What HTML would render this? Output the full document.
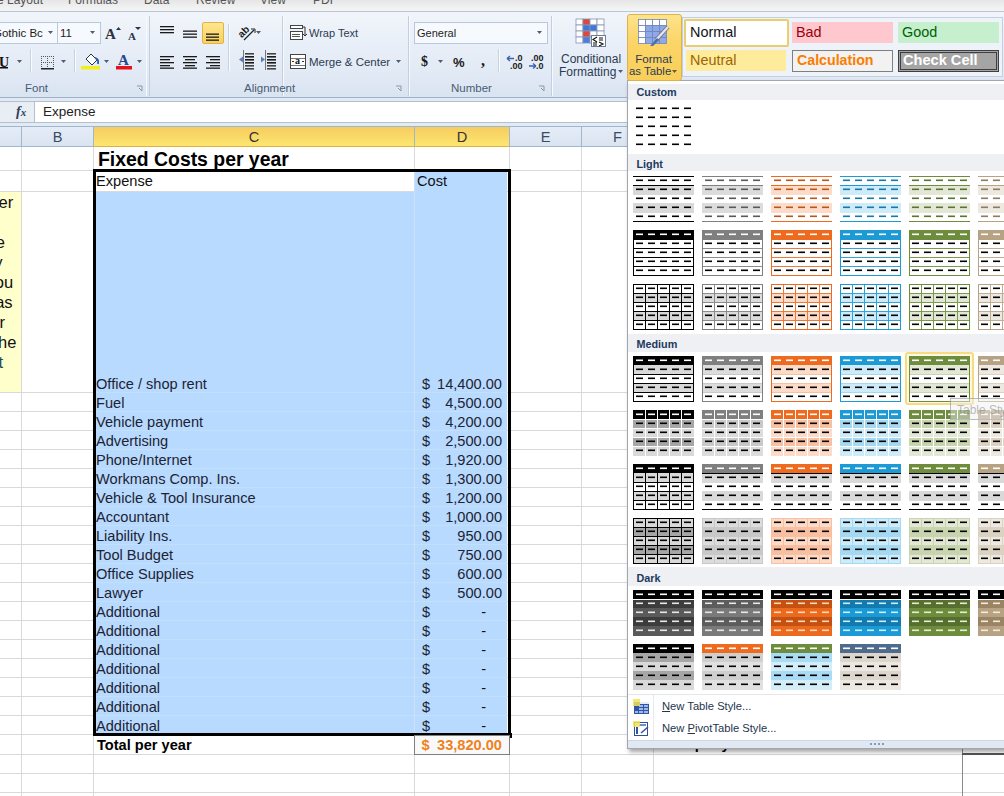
<!DOCTYPE html><html><head><meta charset="utf-8"><style>
*{box-sizing:border-box}
body{margin:0;width:1004px;height:796px;overflow:hidden;position:relative;background:#fff;font-family:"Liberation Sans", sans-serif;}
.a{position:absolute}
.t{position:absolute;white-space:nowrap;line-height:1}
</style></head><body>
<div class="a" style="left:0;top:0;width:1004px;height:12px;background:linear-gradient(#e6e6e6,#f7f7f7)"></div>
<div class="t" style="left:-3px;top:-6px;font-size:12px;color:#555">e Layout</div>
<div class="t" style="left:68px;top:-6px;font-size:12px;color:#555">Formulas</div>
<div class="t" style="left:144px;top:-6px;font-size:12px;color:#555">Data</div>
<div class="t" style="left:196px;top:-6px;font-size:12px;color:#555">Review</div>
<div class="t" style="left:260px;top:-6px;font-size:12px;color:#555">View</div>
<div class="t" style="left:313px;top:-6px;font-size:12px;color:#555">PDF</div>
<div class="a" style="left:0;top:11px;width:1004px;height:1px;background:#b9c6d6"></div>
<div class="a" style="left:0;top:12px;width:1004px;height:85px;background:linear-gradient(#f1f5fb,#e2eaf5 70%,#d9e4f1)"></div>
<div class="a" style="left:0;top:97px;width:1004px;height:1px;background:#9fb2c8"></div>
<div class="a" style="left:0;top:98px;width:1004px;height:3px;background:#e2e9f2"></div>
<div class="a" style="left:0;top:101px;width:1004px;height:1px;background:#b3c0d0"></div>
<div class="a" style="left:0;top:102px;width:35px;height:20px;background:#e9eef5"></div>
<div class="a" style="left:34px;top:102px;width:1px;height:20px;background:#b3c0d0"></div>
<div class="a" style="left:35px;top:102px;width:969px;height:20px;background:#fff"></div>
<div class="t" style="left:16px;top:105px;font-family:'Liberation Serif';font-style:italic;font-weight:bold;font-size:14px;color:#2c3e5a">f<span style="font-size:11px">x</span></div>
<div class="t" style="left:43px;top:105px;font-size:13.5px;color:#222">Expense</div>
<div class="a" style="left:0;top:122px;width:1004px;height:1px;background:#b3c0d0"></div>
<div class="a" style="left:0;top:123px;width:1004px;height:3px;background:#e4eaf2"></div>
<div class="a" style="left:146px;top:16px;width:1px;height:80px;background:#f7f9fc"></div>
<div class="a" style="left:149px;top:16px;width:1px;height:80px;background:#c3cfde"></div>
<div class="a" style="left:283px;top:16px;width:1px;height:80px;background:#f7f9fc"></div>
<div class="a" style="left:282px;top:16px;width:1px;height:80px;background:#c3cfde"></div>
<div class="a" style="left:409px;top:16px;width:1px;height:80px;background:#f7f9fc"></div>
<div class="a" style="left:408px;top:16px;width:1px;height:80px;background:#c3cfde"></div>
<div class="a" style="left:552px;top:16px;width:1px;height:80px;background:#f7f9fc"></div>
<div class="a" style="left:551px;top:16px;width:1px;height:80px;background:#c3cfde"></div>
<div class="t" style="left:25px;top:83px;font-size:11.5px;color:#4a5b75">Font</div>
<div class="t" style="left:244px;top:83px;font-size:11.5px;color:#4a5b75">Alignment</div>
<div class="t" style="left:451px;top:83px;font-size:11.5px;color:#4a5b75">Number</div>
<div class="a" style="left:0;top:126px;width:1004px;height:1px;background:#9eb6ce"></div>
<div class="a" style="left:0;top:127px;width:1004px;height:19px;background:linear-gradient(#e4ecf7,#dae4f0)"></div>
<div class="a" style="left:93px;top:127px;width:416px;height:19px;background:linear-gradient(#f6cc60,#fde670)"></div>
<div class="a" style="left:0;top:146px;width:1004px;height:1px;background:#9eb6ce"></div>
<div class="a" style="left:93px;top:146px;width:416px;height:1px;background:#e0b040"></div>
<div class="a" style="left:21px;top:127px;width:1px;height:19px;background:#9eb6ce"></div>
<div class="a" style="left:93px;top:127px;width:1px;height:19px;background:#9eb6ce"></div>
<div class="a" style="left:414px;top:127px;width:1px;height:19px;background:#9eb6ce"></div>
<div class="a" style="left:509px;top:127px;width:1px;height:19px;background:#9eb6ce"></div>
<div class="a" style="left:581px;top:127px;width:1px;height:19px;background:#9eb6ce"></div>
<div class="a" style="left:653px;top:127px;width:1px;height:19px;background:#9eb6ce"></div>
<div class="t" style="left:37.5px;width:40px;text-align:center;top:129.5px;font-size:14.6px;color:#3a4a66">B</div>
<div class="t" style="left:234px;width:40px;text-align:center;top:129.5px;font-size:14.6px;color:#333">C</div>
<div class="t" style="left:442px;width:40px;text-align:center;top:129.5px;font-size:14.6px;color:#333">D</div>
<div class="t" style="left:525.5px;width:40px;text-align:center;top:129.5px;font-size:14.6px;color:#3a4a66">E</div>
<div class="t" style="left:597.5px;width:40px;text-align:center;top:129.5px;font-size:14.6px;color:#3a4a66">F</div>
<div class="a" style="left:0;top:170px;width:1004px;height:1px;background:#d9d9d9"></div>
<div class="a" style="left:0;top:191px;width:1004px;height:1px;background:#d9d9d9"></div>
<div class="a" style="left:0;top:392px;width:1004px;height:1px;background:#d9d9d9"></div>
<div class="a" style="left:0;top:411px;width:1004px;height:1px;background:#d9d9d9"></div>
<div class="a" style="left:0;top:430px;width:1004px;height:1px;background:#d9d9d9"></div>
<div class="a" style="left:0;top:449px;width:1004px;height:1px;background:#d9d9d9"></div>
<div class="a" style="left:0;top:468px;width:1004px;height:1px;background:#d9d9d9"></div>
<div class="a" style="left:0;top:487px;width:1004px;height:1px;background:#d9d9d9"></div>
<div class="a" style="left:0;top:506px;width:1004px;height:1px;background:#d9d9d9"></div>
<div class="a" style="left:0;top:525px;width:1004px;height:1px;background:#d9d9d9"></div>
<div class="a" style="left:0;top:544px;width:1004px;height:1px;background:#d9d9d9"></div>
<div class="a" style="left:0;top:563px;width:1004px;height:1px;background:#d9d9d9"></div>
<div class="a" style="left:0;top:582px;width:1004px;height:1px;background:#d9d9d9"></div>
<div class="a" style="left:0;top:601px;width:1004px;height:1px;background:#d9d9d9"></div>
<div class="a" style="left:0;top:620px;width:1004px;height:1px;background:#d9d9d9"></div>
<div class="a" style="left:0;top:639px;width:1004px;height:1px;background:#d9d9d9"></div>
<div class="a" style="left:0;top:658px;width:1004px;height:1px;background:#d9d9d9"></div>
<div class="a" style="left:0;top:677px;width:1004px;height:1px;background:#d9d9d9"></div>
<div class="a" style="left:0;top:696px;width:1004px;height:1px;background:#d9d9d9"></div>
<div class="a" style="left:0;top:715px;width:1004px;height:1px;background:#d9d9d9"></div>
<div class="a" style="left:0;top:734px;width:1004px;height:1px;background:#d9d9d9"></div>
<div class="a" style="left:0;top:754px;width:1004px;height:1px;background:#d9d9d9"></div>
<div class="a" style="left:0;top:773px;width:1004px;height:1px;background:#d9d9d9"></div>
<div class="a" style="left:0;top:792px;width:1004px;height:1px;background:#d9d9d9"></div>
<div class="a" style="left:21px;top:147px;width:1px;height:650px;background:#d9d9d9"></div>
<div class="a" style="left:93px;top:147px;width:1px;height:650px;background:#d9d9d9"></div>
<div class="a" style="left:414px;top:147px;width:1px;height:650px;background:#d9d9d9"></div>
<div class="a" style="left:509px;top:147px;width:1px;height:650px;background:#d9d9d9"></div>
<div class="a" style="left:581px;top:147px;width:1px;height:650px;background:#d9d9d9"></div>
<div class="a" style="left:653px;top:147px;width:1px;height:650px;background:#d9d9d9"></div>
<div class="a" style="left:962px;top:147px;width:1px;height:650px;background:#d9d9d9"></div>
<div class="a" style="left:0;top:192px;width:21px;height:200px;background:#ffffcc"></div>
<div class="t" style="right:990.8px;top:193.6px;font-size:16.5px;color:#111">er</div>
<div class="t" style="right:999px;top:233.6px;font-size:16.5px;color:#111">e</div>
<div class="t" style="right:1001.5px;top:253.60000000000002px;font-size:16.5px;color:#111">y</div>
<div class="t" style="right:990.8px;top:273.6px;font-size:16.5px;color:#111">ou</div>
<div class="t" style="right:991.4px;top:293.6px;font-size:16.5px;color:#111">as</div>
<div class="t" style="right:999px;top:313.6px;font-size:16.5px;color:#111">r</div>
<div class="t" style="right:987.7px;top:333.6px;font-size:16.5px;color:#111">he</div>
<div class="t" style="right:1001px;top:353.6px;font-size:16.5px;color:#1d4a4a">t</div>
<div class="a" style="left:95px;top:192px;width:412px;height:541px;background:#b9daff"></div>
<div class="a" style="left:415px;top:172px;width:92px;height:20px;background:#b9daff"></div>
<div class="a" style="left:95px;top:392px;width:412px;height:1px;background:#c4dffc"></div>
<div class="a" style="left:95px;top:411px;width:412px;height:1px;background:#c4dffc"></div>
<div class="a" style="left:95px;top:430px;width:412px;height:1px;background:#c4dffc"></div>
<div class="a" style="left:95px;top:449px;width:412px;height:1px;background:#c4dffc"></div>
<div class="a" style="left:95px;top:468px;width:412px;height:1px;background:#c4dffc"></div>
<div class="a" style="left:95px;top:487px;width:412px;height:1px;background:#c4dffc"></div>
<div class="a" style="left:95px;top:506px;width:412px;height:1px;background:#c4dffc"></div>
<div class="a" style="left:95px;top:525px;width:412px;height:1px;background:#c4dffc"></div>
<div class="a" style="left:95px;top:544px;width:412px;height:1px;background:#c4dffc"></div>
<div class="a" style="left:95px;top:563px;width:412px;height:1px;background:#c4dffc"></div>
<div class="a" style="left:95px;top:582px;width:412px;height:1px;background:#c4dffc"></div>
<div class="a" style="left:95px;top:601px;width:412px;height:1px;background:#c4dffc"></div>
<div class="a" style="left:95px;top:620px;width:412px;height:1px;background:#c4dffc"></div>
<div class="a" style="left:95px;top:639px;width:412px;height:1px;background:#c4dffc"></div>
<div class="a" style="left:95px;top:658px;width:412px;height:1px;background:#c4dffc"></div>
<div class="a" style="left:95px;top:677px;width:412px;height:1px;background:#c4dffc"></div>
<div class="a" style="left:95px;top:696px;width:412px;height:1px;background:#c4dffc"></div>
<div class="a" style="left:95px;top:715px;width:412px;height:1px;background:#c4dffc"></div>
<div class="a" style="left:414px;top:171px;width:1px;height:562px;background:#cbe2f9"></div>
<div class="a" style="left:93px;top:169px;width:418px;height:567px;border:3px solid #000"></div>
<div class="a" style="left:507px;top:733px;width:5px;height:5px;background:#000"></div>
<div class="t" style="left:98px;top:149.5px;font-size:19.4px;font-weight:bold;color:#000">Fixed Costs per year</div>
<div class="t" style="left:96px;top:174px;font-size:14.6px;color:#111">Expense</div>
<div class="t" style="left:417px;top:174px;font-size:14.6px;color:#111">Cost</div>
<div class="t" style="left:96px;top:377px;font-size:14.6px;color:#1c2333">Office / shop rent</div>
<div class="t" style="left:422px;top:377px;font-size:14.6px;color:#1c2333">$</div>
<div class="t" style="right:502px;top:377px;font-size:14.6px;color:#1c2333">14,400.00</div>
<div class="t" style="left:96px;top:396px;font-size:14.6px;color:#1c2333">Fuel</div>
<div class="t" style="left:422px;top:396px;font-size:14.6px;color:#1c2333">$</div>
<div class="t" style="right:502px;top:396px;font-size:14.6px;color:#1c2333">4,500.00</div>
<div class="t" style="left:96px;top:415px;font-size:14.6px;color:#1c2333">Vehicle payment</div>
<div class="t" style="left:422px;top:415px;font-size:14.6px;color:#1c2333">$</div>
<div class="t" style="right:502px;top:415px;font-size:14.6px;color:#1c2333">4,200.00</div>
<div class="t" style="left:96px;top:434px;font-size:14.6px;color:#1c2333">Advertising</div>
<div class="t" style="left:422px;top:434px;font-size:14.6px;color:#1c2333">$</div>
<div class="t" style="right:502px;top:434px;font-size:14.6px;color:#1c2333">2,500.00</div>
<div class="t" style="left:96px;top:453px;font-size:14.6px;color:#1c2333">Phone/Internet</div>
<div class="t" style="left:422px;top:453px;font-size:14.6px;color:#1c2333">$</div>
<div class="t" style="right:502px;top:453px;font-size:14.6px;color:#1c2333">1,920.00</div>
<div class="t" style="left:96px;top:472px;font-size:14.6px;color:#1c2333">Workmans Comp. Ins.</div>
<div class="t" style="left:422px;top:472px;font-size:14.6px;color:#1c2333">$</div>
<div class="t" style="right:502px;top:472px;font-size:14.6px;color:#1c2333">1,300.00</div>
<div class="t" style="left:96px;top:491px;font-size:14.6px;color:#1c2333">Vehicle &amp; Tool Insurance</div>
<div class="t" style="left:422px;top:491px;font-size:14.6px;color:#1c2333">$</div>
<div class="t" style="right:502px;top:491px;font-size:14.6px;color:#1c2333">1,200.00</div>
<div class="t" style="left:96px;top:510px;font-size:14.6px;color:#1c2333">Accountant</div>
<div class="t" style="left:422px;top:510px;font-size:14.6px;color:#1c2333">$</div>
<div class="t" style="right:502px;top:510px;font-size:14.6px;color:#1c2333">1,000.00</div>
<div class="t" style="left:96px;top:529px;font-size:14.6px;color:#1c2333">Liability Ins.</div>
<div class="t" style="left:422px;top:529px;font-size:14.6px;color:#1c2333">$</div>
<div class="t" style="right:502px;top:529px;font-size:14.6px;color:#1c2333">950.00</div>
<div class="t" style="left:96px;top:548px;font-size:14.6px;color:#1c2333">Tool Budget</div>
<div class="t" style="left:422px;top:548px;font-size:14.6px;color:#1c2333">$</div>
<div class="t" style="right:502px;top:548px;font-size:14.6px;color:#1c2333">750.00</div>
<div class="t" style="left:96px;top:567px;font-size:14.6px;color:#1c2333">Office Supplies</div>
<div class="t" style="left:422px;top:567px;font-size:14.6px;color:#1c2333">$</div>
<div class="t" style="right:502px;top:567px;font-size:14.6px;color:#1c2333">600.00</div>
<div class="t" style="left:96px;top:586px;font-size:14.6px;color:#1c2333">Lawyer</div>
<div class="t" style="left:422px;top:586px;font-size:14.6px;color:#1c2333">$</div>
<div class="t" style="right:502px;top:586px;font-size:14.6px;color:#1c2333">500.00</div>
<div class="t" style="left:96px;top:605px;font-size:14.6px;color:#1c2333">Additional</div>
<div class="t" style="left:422px;top:605px;font-size:14.6px;color:#1c2333">$</div>
<div class="t" style="right:518px;top:605px;font-size:14.6px;color:#111">-</div>
<div class="t" style="left:96px;top:624px;font-size:14.6px;color:#1c2333">Additional</div>
<div class="t" style="left:422px;top:624px;font-size:14.6px;color:#1c2333">$</div>
<div class="t" style="right:518px;top:624px;font-size:14.6px;color:#111">-</div>
<div class="t" style="left:96px;top:643px;font-size:14.6px;color:#1c2333">Additional</div>
<div class="t" style="left:422px;top:643px;font-size:14.6px;color:#1c2333">$</div>
<div class="t" style="right:518px;top:643px;font-size:14.6px;color:#111">-</div>
<div class="t" style="left:96px;top:662px;font-size:14.6px;color:#1c2333">Additional</div>
<div class="t" style="left:422px;top:662px;font-size:14.6px;color:#1c2333">$</div>
<div class="t" style="right:518px;top:662px;font-size:14.6px;color:#111">-</div>
<div class="t" style="left:96px;top:681px;font-size:14.6px;color:#1c2333">Additional</div>
<div class="t" style="left:422px;top:681px;font-size:14.6px;color:#1c2333">$</div>
<div class="t" style="right:518px;top:681px;font-size:14.6px;color:#111">-</div>
<div class="t" style="left:96px;top:700px;font-size:14.6px;color:#1c2333">Additional</div>
<div class="t" style="left:422px;top:700px;font-size:14.6px;color:#1c2333">$</div>
<div class="t" style="right:518px;top:700px;font-size:14.6px;color:#111">-</div>
<div class="t" style="left:96px;top:719px;font-size:14.6px;color:#1c2333">Additional</div>
<div class="t" style="left:422px;top:719px;font-size:14.6px;color:#1c2333">$</div>
<div class="t" style="right:518px;top:719px;font-size:14.6px;color:#111">-</div>
<div class="a" style="left:414px;top:735px;width:96px;height:20px;border:1px solid #7f7f7f;background:#f9f9f9"></div>
<div class="t" style="left:97px;top:737.5px;font-size:14.6px;font-weight:bold;color:#000">Total per year</div>
<div class="t" style="left:421.5px;top:737.5px;font-size:14.6px;font-weight:bold;color:#ee8222">$</div>
<div class="t" style="right:502px;top:737.5px;font-size:14.6px;font-weight:bold;color:#ee8222">33,820.00</div>
<div class="t" style="left:657px;top:737px;font-size:14.6px;font-weight:bold;color:#000">Total per year</div>
<div class="a" style="left:962px;top:147px;width:1px;height:650px;background:#8a8a8a"></div>
<div class="a" style="left:962px;top:753px;width:42px;height:2px;background:#555"></div>
<div class="a" style="left:627px;top:80px;width:380px;height:669px;background:#fff;border:1px solid #a3a7ad;box-shadow:2px 3px 4px rgba(0,0,0,0.35)"></div>
<div class="a" style="left:628px;top:84px;width:376px;height:16px;background:#eef0f4"></div>
<div class="t" style="left:636.5px;top:86.8px;font-size:10.8px;font-weight:bold;color:#213a5e">Custom</div>
<div class="a" style="left:628px;top:154px;width:376px;height:17px;background:#eef0f4"></div>
<div class="t" style="left:636.5px;top:158.7px;font-size:10.8px;font-weight:bold;color:#213a5e">Light</div>
<div class="a" style="left:628px;top:334px;width:376px;height:18px;background:#eef0f4"></div>
<div class="t" style="left:636.5px;top:338.5px;font-size:10.8px;font-weight:bold;color:#213a5e">Medium</div>
<div class="a" style="left:628px;top:567px;width:376px;height:19px;background:#eef0f4"></div>
<div class="t" style="left:636.5px;top:573px;font-size:10.8px;font-weight:bold;color:#213a5e">Dark</div>
<div class="a" style="left:905px;top:352px;width:69px;height:53px;border:2px solid #f5dc80;border-radius:3px;background:#fef8e0"></div>
<svg class="a" style="left:0;top:0" width="1004" height="796" shape-rendering="crispEdges"><rect x="636" y="107.5" width="7" height="1.6" fill="#000" shape-rendering="auto"/><rect x="648" y="107.5" width="7" height="1.6" fill="#000" shape-rendering="auto"/><rect x="660" y="107.5" width="7" height="1.6" fill="#000" shape-rendering="auto"/><rect x="672" y="107.5" width="7" height="1.6" fill="#000" shape-rendering="auto"/><rect x="684" y="107.5" width="7" height="1.6" fill="#000" shape-rendering="auto"/><rect x="636" y="116.5" width="7" height="1.6" fill="#000" shape-rendering="auto"/><rect x="648" y="116.5" width="7" height="1.6" fill="#000" shape-rendering="auto"/><rect x="660" y="116.5" width="7" height="1.6" fill="#000" shape-rendering="auto"/><rect x="672" y="116.5" width="7" height="1.6" fill="#000" shape-rendering="auto"/><rect x="684" y="116.5" width="7" height="1.6" fill="#000" shape-rendering="auto"/><rect x="636" y="125.5" width="7" height="1.6" fill="#000" shape-rendering="auto"/><rect x="648" y="125.5" width="7" height="1.6" fill="#000" shape-rendering="auto"/><rect x="660" y="125.5" width="7" height="1.6" fill="#000" shape-rendering="auto"/><rect x="672" y="125.5" width="7" height="1.6" fill="#000" shape-rendering="auto"/><rect x="684" y="125.5" width="7" height="1.6" fill="#000" shape-rendering="auto"/><rect x="636" y="134.5" width="7" height="1.6" fill="#000" shape-rendering="auto"/><rect x="648" y="134.5" width="7" height="1.6" fill="#000" shape-rendering="auto"/><rect x="660" y="134.5" width="7" height="1.6" fill="#000" shape-rendering="auto"/><rect x="672" y="134.5" width="7" height="1.6" fill="#000" shape-rendering="auto"/><rect x="684" y="134.5" width="7" height="1.6" fill="#000" shape-rendering="auto"/><rect x="636" y="143.5" width="7" height="1.6" fill="#000" shape-rendering="auto"/><rect x="648" y="143.5" width="7" height="1.6" fill="#000" shape-rendering="auto"/><rect x="660" y="143.5" width="7" height="1.6" fill="#000" shape-rendering="auto"/><rect x="672" y="143.5" width="7" height="1.6" fill="#000" shape-rendering="auto"/><rect x="684" y="143.5" width="7" height="1.6" fill="#000" shape-rendering="auto"/><rect x="633" y="176" width="61" height="46" fill="#ffffff"/><rect x="633" y="185" width="61" height="10" fill="#d9d9d9"/><rect x="633" y="203" width="61" height="10" fill="#d9d9d9"/><rect x="633" y="176" width="61" height="1" fill="#000000"/><rect x="633" y="185" width="61" height="1" fill="#000000"/><rect x="633" y="221" width="61" height="1" fill="#000000"/><rect x="636" y="179.5" width="7" height="1.6" fill="#000000" shape-rendering="auto"/><rect x="648" y="179.5" width="7" height="1.6" fill="#000000" shape-rendering="auto"/><rect x="660" y="179.5" width="7" height="1.6" fill="#000000" shape-rendering="auto"/><rect x="672" y="179.5" width="7" height="1.6" fill="#000000" shape-rendering="auto"/><rect x="684" y="179.5" width="7" height="1.6" fill="#000000" shape-rendering="auto"/><rect x="636" y="188.5" width="7" height="1.6" fill="#000000" shape-rendering="auto"/><rect x="648" y="188.5" width="7" height="1.6" fill="#000000" shape-rendering="auto"/><rect x="660" y="188.5" width="7" height="1.6" fill="#000000" shape-rendering="auto"/><rect x="672" y="188.5" width="7" height="1.6" fill="#000000" shape-rendering="auto"/><rect x="684" y="188.5" width="7" height="1.6" fill="#000000" shape-rendering="auto"/><rect x="636" y="197.5" width="7" height="1.6" fill="#000000" shape-rendering="auto"/><rect x="648" y="197.5" width="7" height="1.6" fill="#000000" shape-rendering="auto"/><rect x="660" y="197.5" width="7" height="1.6" fill="#000000" shape-rendering="auto"/><rect x="672" y="197.5" width="7" height="1.6" fill="#000000" shape-rendering="auto"/><rect x="684" y="197.5" width="7" height="1.6" fill="#000000" shape-rendering="auto"/><rect x="636" y="206.5" width="7" height="1.6" fill="#000000" shape-rendering="auto"/><rect x="648" y="206.5" width="7" height="1.6" fill="#000000" shape-rendering="auto"/><rect x="660" y="206.5" width="7" height="1.6" fill="#000000" shape-rendering="auto"/><rect x="672" y="206.5" width="7" height="1.6" fill="#000000" shape-rendering="auto"/><rect x="684" y="206.5" width="7" height="1.6" fill="#000000" shape-rendering="auto"/><rect x="636" y="215.5" width="7" height="1.6" fill="#000000" shape-rendering="auto"/><rect x="648" y="215.5" width="7" height="1.6" fill="#000000" shape-rendering="auto"/><rect x="660" y="215.5" width="7" height="1.6" fill="#000000" shape-rendering="auto"/><rect x="672" y="215.5" width="7" height="1.6" fill="#000000" shape-rendering="auto"/><rect x="684" y="215.5" width="7" height="1.6" fill="#000000" shape-rendering="auto"/><rect x="633" y="230" width="61" height="46" fill="#ffffff"/><rect x="633" y="230" width="61" height="10" fill="#000000"/><rect x="633" y="248" width="61" height="1" fill="#000000"/><rect x="633" y="257" width="61" height="1" fill="#000000"/><rect x="633" y="266" width="61" height="1" fill="#000000"/><rect x="633" y="230" width="61" height="1" fill="#000000"/><rect x="633" y="275" width="61" height="1" fill="#000000"/><rect x="633" y="230" width="1" height="46" fill="#000000"/><rect x="693" y="230" width="1" height="46" fill="#000000"/><rect x="636" y="233.5" width="7" height="1.6" fill="#ffffff" shape-rendering="auto"/><rect x="648" y="233.5" width="7" height="1.6" fill="#ffffff" shape-rendering="auto"/><rect x="660" y="233.5" width="7" height="1.6" fill="#ffffff" shape-rendering="auto"/><rect x="672" y="233.5" width="7" height="1.6" fill="#ffffff" shape-rendering="auto"/><rect x="684" y="233.5" width="7" height="1.6" fill="#ffffff" shape-rendering="auto"/><rect x="636" y="242.5" width="7" height="1.6" fill="#000" shape-rendering="auto"/><rect x="648" y="242.5" width="7" height="1.6" fill="#000" shape-rendering="auto"/><rect x="660" y="242.5" width="7" height="1.6" fill="#000" shape-rendering="auto"/><rect x="672" y="242.5" width="7" height="1.6" fill="#000" shape-rendering="auto"/><rect x="684" y="242.5" width="7" height="1.6" fill="#000" shape-rendering="auto"/><rect x="636" y="251.5" width="7" height="1.6" fill="#000" shape-rendering="auto"/><rect x="648" y="251.5" width="7" height="1.6" fill="#000" shape-rendering="auto"/><rect x="660" y="251.5" width="7" height="1.6" fill="#000" shape-rendering="auto"/><rect x="672" y="251.5" width="7" height="1.6" fill="#000" shape-rendering="auto"/><rect x="684" y="251.5" width="7" height="1.6" fill="#000" shape-rendering="auto"/><rect x="636" y="260.5" width="7" height="1.6" fill="#000" shape-rendering="auto"/><rect x="648" y="260.5" width="7" height="1.6" fill="#000" shape-rendering="auto"/><rect x="660" y="260.5" width="7" height="1.6" fill="#000" shape-rendering="auto"/><rect x="672" y="260.5" width="7" height="1.6" fill="#000" shape-rendering="auto"/><rect x="684" y="260.5" width="7" height="1.6" fill="#000" shape-rendering="auto"/><rect x="636" y="269.5" width="7" height="1.6" fill="#000" shape-rendering="auto"/><rect x="648" y="269.5" width="7" height="1.6" fill="#000" shape-rendering="auto"/><rect x="660" y="269.5" width="7" height="1.6" fill="#000" shape-rendering="auto"/><rect x="672" y="269.5" width="7" height="1.6" fill="#000" shape-rendering="auto"/><rect x="684" y="269.5" width="7" height="1.6" fill="#000" shape-rendering="auto"/><rect x="633" y="284" width="61" height="46" fill="#ffffff"/><rect x="633" y="293" width="61" height="10" fill="#d9d9d9"/><rect x="633" y="311" width="61" height="10" fill="#d9d9d9"/><rect x="633" y="293" width="61" height="1" fill="#000000"/><rect x="633" y="302" width="61" height="1" fill="#000000"/><rect x="633" y="311" width="61" height="1" fill="#000000"/><rect x="633" y="320" width="61" height="1" fill="#000000"/><rect x="645" y="284" width="1" height="46" fill="#000000"/><rect x="657" y="284" width="1" height="46" fill="#000000"/><rect x="669" y="284" width="1" height="46" fill="#000000"/><rect x="681" y="284" width="1" height="46" fill="#000000"/><rect x="633" y="284" width="61" height="1" fill="#000000"/><rect x="633" y="329" width="61" height="1" fill="#000000"/><rect x="633" y="284" width="1" height="46" fill="#000000"/><rect x="693" y="284" width="1" height="46" fill="#000000"/><rect x="636" y="287.5" width="7" height="1.6" fill="#000" shape-rendering="auto"/><rect x="648" y="287.5" width="7" height="1.6" fill="#000" shape-rendering="auto"/><rect x="660" y="287.5" width="7" height="1.6" fill="#000" shape-rendering="auto"/><rect x="672" y="287.5" width="7" height="1.6" fill="#000" shape-rendering="auto"/><rect x="684" y="287.5" width="7" height="1.6" fill="#000" shape-rendering="auto"/><rect x="636" y="296.5" width="7" height="1.6" fill="#000" shape-rendering="auto"/><rect x="648" y="296.5" width="7" height="1.6" fill="#000" shape-rendering="auto"/><rect x="660" y="296.5" width="7" height="1.6" fill="#000" shape-rendering="auto"/><rect x="672" y="296.5" width="7" height="1.6" fill="#000" shape-rendering="auto"/><rect x="684" y="296.5" width="7" height="1.6" fill="#000" shape-rendering="auto"/><rect x="636" y="305.5" width="7" height="1.6" fill="#000" shape-rendering="auto"/><rect x="648" y="305.5" width="7" height="1.6" fill="#000" shape-rendering="auto"/><rect x="660" y="305.5" width="7" height="1.6" fill="#000" shape-rendering="auto"/><rect x="672" y="305.5" width="7" height="1.6" fill="#000" shape-rendering="auto"/><rect x="684" y="305.5" width="7" height="1.6" fill="#000" shape-rendering="auto"/><rect x="636" y="314.5" width="7" height="1.6" fill="#000" shape-rendering="auto"/><rect x="648" y="314.5" width="7" height="1.6" fill="#000" shape-rendering="auto"/><rect x="660" y="314.5" width="7" height="1.6" fill="#000" shape-rendering="auto"/><rect x="672" y="314.5" width="7" height="1.6" fill="#000" shape-rendering="auto"/><rect x="684" y="314.5" width="7" height="1.6" fill="#000" shape-rendering="auto"/><rect x="636" y="323.5" width="7" height="1.6" fill="#000" shape-rendering="auto"/><rect x="648" y="323.5" width="7" height="1.6" fill="#000" shape-rendering="auto"/><rect x="660" y="323.5" width="7" height="1.6" fill="#000" shape-rendering="auto"/><rect x="672" y="323.5" width="7" height="1.6" fill="#000" shape-rendering="auto"/><rect x="684" y="323.5" width="7" height="1.6" fill="#000" shape-rendering="auto"/><rect x="633" y="356" width="61" height="46" fill="#ffffff"/><rect x="633" y="356" width="61" height="10" fill="#000000"/><rect x="633" y="365" width="61" height="10" fill="#d9d9d9"/><rect x="633" y="383" width="61" height="10" fill="#d9d9d9"/><rect x="633" y="374" width="61" height="1" fill="#000000"/><rect x="633" y="383" width="61" height="1" fill="#000000"/><rect x="633" y="392" width="61" height="1" fill="#000000"/><rect x="633" y="356" width="61" height="1" fill="#000000"/><rect x="633" y="401" width="61" height="1" fill="#000000"/><rect x="633" y="356" width="1" height="46" fill="#000000"/><rect x="693" y="356" width="1" height="46" fill="#000000"/><rect x="636" y="359.5" width="7" height="1.6" fill="#ffffff" shape-rendering="auto"/><rect x="648" y="359.5" width="7" height="1.6" fill="#ffffff" shape-rendering="auto"/><rect x="660" y="359.5" width="7" height="1.6" fill="#ffffff" shape-rendering="auto"/><rect x="672" y="359.5" width="7" height="1.6" fill="#ffffff" shape-rendering="auto"/><rect x="684" y="359.5" width="7" height="1.6" fill="#ffffff" shape-rendering="auto"/><rect x="636" y="368.5" width="7" height="1.6" fill="#000" shape-rendering="auto"/><rect x="648" y="368.5" width="7" height="1.6" fill="#000" shape-rendering="auto"/><rect x="660" y="368.5" width="7" height="1.6" fill="#000" shape-rendering="auto"/><rect x="672" y="368.5" width="7" height="1.6" fill="#000" shape-rendering="auto"/><rect x="684" y="368.5" width="7" height="1.6" fill="#000" shape-rendering="auto"/><rect x="636" y="377.5" width="7" height="1.6" fill="#000" shape-rendering="auto"/><rect x="648" y="377.5" width="7" height="1.6" fill="#000" shape-rendering="auto"/><rect x="660" y="377.5" width="7" height="1.6" fill="#000" shape-rendering="auto"/><rect x="672" y="377.5" width="7" height="1.6" fill="#000" shape-rendering="auto"/><rect x="684" y="377.5" width="7" height="1.6" fill="#000" shape-rendering="auto"/><rect x="636" y="386.5" width="7" height="1.6" fill="#000" shape-rendering="auto"/><rect x="648" y="386.5" width="7" height="1.6" fill="#000" shape-rendering="auto"/><rect x="660" y="386.5" width="7" height="1.6" fill="#000" shape-rendering="auto"/><rect x="672" y="386.5" width="7" height="1.6" fill="#000" shape-rendering="auto"/><rect x="684" y="386.5" width="7" height="1.6" fill="#000" shape-rendering="auto"/><rect x="636" y="395.5" width="7" height="1.6" fill="#000" shape-rendering="auto"/><rect x="648" y="395.5" width="7" height="1.6" fill="#000" shape-rendering="auto"/><rect x="660" y="395.5" width="7" height="1.6" fill="#000" shape-rendering="auto"/><rect x="672" y="395.5" width="7" height="1.6" fill="#000" shape-rendering="auto"/><rect x="684" y="395.5" width="7" height="1.6" fill="#000" shape-rendering="auto"/><rect x="633" y="410" width="61" height="46" fill="#ffffff"/><rect x="633" y="410" width="61" height="10" fill="#000000"/><rect x="633" y="419" width="61" height="10" fill="#a6a6a6"/><rect x="633" y="428" width="61" height="10" fill="#d9d9d9"/><rect x="633" y="437" width="61" height="10" fill="#a6a6a6"/><rect x="633" y="446" width="61" height="10" fill="#d9d9d9"/><rect x="645" y="410" width="1" height="46" fill="#ffffff"/><rect x="657" y="410" width="1" height="46" fill="#ffffff"/><rect x="669" y="410" width="1" height="46" fill="#ffffff"/><rect x="681" y="410" width="1" height="46" fill="#ffffff"/><rect x="633" y="419" width="61" height="1" fill="#ffffff"/><rect x="633" y="428" width="61" height="1" fill="#ffffff"/><rect x="633" y="437" width="61" height="1" fill="#ffffff"/><rect x="633" y="446" width="61" height="1" fill="#ffffff"/><rect x="636" y="413.5" width="7" height="1.6" fill="#ffffff" shape-rendering="auto"/><rect x="648" y="413.5" width="7" height="1.6" fill="#ffffff" shape-rendering="auto"/><rect x="660" y="413.5" width="7" height="1.6" fill="#ffffff" shape-rendering="auto"/><rect x="672" y="413.5" width="7" height="1.6" fill="#ffffff" shape-rendering="auto"/><rect x="684" y="413.5" width="7" height="1.6" fill="#ffffff" shape-rendering="auto"/><rect x="636" y="422.5" width="7" height="1.6" fill="#000" shape-rendering="auto"/><rect x="648" y="422.5" width="7" height="1.6" fill="#000" shape-rendering="auto"/><rect x="660" y="422.5" width="7" height="1.6" fill="#000" shape-rendering="auto"/><rect x="672" y="422.5" width="7" height="1.6" fill="#000" shape-rendering="auto"/><rect x="684" y="422.5" width="7" height="1.6" fill="#000" shape-rendering="auto"/><rect x="636" y="431.5" width="7" height="1.6" fill="#000" shape-rendering="auto"/><rect x="648" y="431.5" width="7" height="1.6" fill="#000" shape-rendering="auto"/><rect x="660" y="431.5" width="7" height="1.6" fill="#000" shape-rendering="auto"/><rect x="672" y="431.5" width="7" height="1.6" fill="#000" shape-rendering="auto"/><rect x="684" y="431.5" width="7" height="1.6" fill="#000" shape-rendering="auto"/><rect x="636" y="440.5" width="7" height="1.6" fill="#000" shape-rendering="auto"/><rect x="648" y="440.5" width="7" height="1.6" fill="#000" shape-rendering="auto"/><rect x="660" y="440.5" width="7" height="1.6" fill="#000" shape-rendering="auto"/><rect x="672" y="440.5" width="7" height="1.6" fill="#000" shape-rendering="auto"/><rect x="684" y="440.5" width="7" height="1.6" fill="#000" shape-rendering="auto"/><rect x="636" y="449.5" width="7" height="1.6" fill="#000" shape-rendering="auto"/><rect x="648" y="449.5" width="7" height="1.6" fill="#000" shape-rendering="auto"/><rect x="660" y="449.5" width="7" height="1.6" fill="#000" shape-rendering="auto"/><rect x="672" y="449.5" width="7" height="1.6" fill="#000" shape-rendering="auto"/><rect x="684" y="449.5" width="7" height="1.6" fill="#000" shape-rendering="auto"/><rect x="633" y="464" width="61" height="46" fill="#ffffff"/><rect x="633" y="464" width="61" height="10" fill="#000"/><rect x="633" y="473" width="61" height="10" fill="#d9d9d9"/><rect x="633" y="491" width="61" height="10" fill="#d9d9d9"/><rect x="633" y="482" width="61" height="1" fill="#000"/><rect x="633" y="491" width="61" height="1" fill="#000"/><rect x="633" y="500" width="61" height="1" fill="#000"/><rect x="645" y="464" width="1" height="46" fill="#000"/><rect x="657" y="464" width="1" height="46" fill="#000"/><rect x="669" y="464" width="1" height="46" fill="#000"/><rect x="681" y="464" width="1" height="46" fill="#000"/><rect x="633" y="464" width="61" height="1" fill="#000"/><rect x="633" y="509" width="61" height="1" fill="#000"/><rect x="633" y="464" width="1" height="46" fill="#000"/><rect x="693" y="464" width="1" height="46" fill="#000"/><rect x="636" y="467.5" width="7" height="1.6" fill="#ffffff" shape-rendering="auto"/><rect x="648" y="467.5" width="7" height="1.6" fill="#ffffff" shape-rendering="auto"/><rect x="660" y="467.5" width="7" height="1.6" fill="#ffffff" shape-rendering="auto"/><rect x="672" y="467.5" width="7" height="1.6" fill="#ffffff" shape-rendering="auto"/><rect x="684" y="467.5" width="7" height="1.6" fill="#ffffff" shape-rendering="auto"/><rect x="636" y="476.5" width="7" height="1.6" fill="#000" shape-rendering="auto"/><rect x="648" y="476.5" width="7" height="1.6" fill="#000" shape-rendering="auto"/><rect x="660" y="476.5" width="7" height="1.6" fill="#000" shape-rendering="auto"/><rect x="672" y="476.5" width="7" height="1.6" fill="#000" shape-rendering="auto"/><rect x="684" y="476.5" width="7" height="1.6" fill="#000" shape-rendering="auto"/><rect x="636" y="485.5" width="7" height="1.6" fill="#000" shape-rendering="auto"/><rect x="648" y="485.5" width="7" height="1.6" fill="#000" shape-rendering="auto"/><rect x="660" y="485.5" width="7" height="1.6" fill="#000" shape-rendering="auto"/><rect x="672" y="485.5" width="7" height="1.6" fill="#000" shape-rendering="auto"/><rect x="684" y="485.5" width="7" height="1.6" fill="#000" shape-rendering="auto"/><rect x="636" y="494.5" width="7" height="1.6" fill="#000" shape-rendering="auto"/><rect x="648" y="494.5" width="7" height="1.6" fill="#000" shape-rendering="auto"/><rect x="660" y="494.5" width="7" height="1.6" fill="#000" shape-rendering="auto"/><rect x="672" y="494.5" width="7" height="1.6" fill="#000" shape-rendering="auto"/><rect x="684" y="494.5" width="7" height="1.6" fill="#000" shape-rendering="auto"/><rect x="636" y="503.5" width="7" height="1.6" fill="#000" shape-rendering="auto"/><rect x="648" y="503.5" width="7" height="1.6" fill="#000" shape-rendering="auto"/><rect x="660" y="503.5" width="7" height="1.6" fill="#000" shape-rendering="auto"/><rect x="672" y="503.5" width="7" height="1.6" fill="#000" shape-rendering="auto"/><rect x="684" y="503.5" width="7" height="1.6" fill="#000" shape-rendering="auto"/><rect x="633" y="518" width="61" height="46" fill="#ffffff"/><rect x="633" y="518" width="61" height="10" fill="#d9d9d9"/><rect x="633" y="527" width="61" height="10" fill="#a6a6a6"/><rect x="633" y="536" width="61" height="10" fill="#d9d9d9"/><rect x="633" y="545" width="61" height="10" fill="#a6a6a6"/><rect x="633" y="554" width="61" height="10" fill="#d9d9d9"/><rect x="633" y="527" width="61" height="1" fill="#000"/><rect x="633" y="536" width="61" height="1" fill="#000"/><rect x="633" y="545" width="61" height="1" fill="#000"/><rect x="633" y="554" width="61" height="1" fill="#000"/><rect x="645" y="518" width="1" height="46" fill="#000"/><rect x="657" y="518" width="1" height="46" fill="#000"/><rect x="669" y="518" width="1" height="46" fill="#000"/><rect x="681" y="518" width="1" height="46" fill="#000"/><rect x="633" y="518" width="61" height="1" fill="#000"/><rect x="633" y="563" width="61" height="1" fill="#000"/><rect x="633" y="518" width="1" height="46" fill="#000"/><rect x="693" y="518" width="1" height="46" fill="#000"/><rect x="636" y="521.5" width="7" height="1.6" fill="#000" shape-rendering="auto"/><rect x="648" y="521.5" width="7" height="1.6" fill="#000" shape-rendering="auto"/><rect x="660" y="521.5" width="7" height="1.6" fill="#000" shape-rendering="auto"/><rect x="672" y="521.5" width="7" height="1.6" fill="#000" shape-rendering="auto"/><rect x="684" y="521.5" width="7" height="1.6" fill="#000" shape-rendering="auto"/><rect x="636" y="530.5" width="7" height="1.6" fill="#000" shape-rendering="auto"/><rect x="648" y="530.5" width="7" height="1.6" fill="#000" shape-rendering="auto"/><rect x="660" y="530.5" width="7" height="1.6" fill="#000" shape-rendering="auto"/><rect x="672" y="530.5" width="7" height="1.6" fill="#000" shape-rendering="auto"/><rect x="684" y="530.5" width="7" height="1.6" fill="#000" shape-rendering="auto"/><rect x="636" y="539.5" width="7" height="1.6" fill="#000" shape-rendering="auto"/><rect x="648" y="539.5" width="7" height="1.6" fill="#000" shape-rendering="auto"/><rect x="660" y="539.5" width="7" height="1.6" fill="#000" shape-rendering="auto"/><rect x="672" y="539.5" width="7" height="1.6" fill="#000" shape-rendering="auto"/><rect x="684" y="539.5" width="7" height="1.6" fill="#000" shape-rendering="auto"/><rect x="636" y="548.5" width="7" height="1.6" fill="#000" shape-rendering="auto"/><rect x="648" y="548.5" width="7" height="1.6" fill="#000" shape-rendering="auto"/><rect x="660" y="548.5" width="7" height="1.6" fill="#000" shape-rendering="auto"/><rect x="672" y="548.5" width="7" height="1.6" fill="#000" shape-rendering="auto"/><rect x="684" y="548.5" width="7" height="1.6" fill="#000" shape-rendering="auto"/><rect x="636" y="557.5" width="7" height="1.6" fill="#000" shape-rendering="auto"/><rect x="648" y="557.5" width="7" height="1.6" fill="#000" shape-rendering="auto"/><rect x="660" y="557.5" width="7" height="1.6" fill="#000" shape-rendering="auto"/><rect x="672" y="557.5" width="7" height="1.6" fill="#000" shape-rendering="auto"/><rect x="684" y="557.5" width="7" height="1.6" fill="#000" shape-rendering="auto"/><rect x="633" y="590" width="61" height="46" fill="#ffffff"/><rect x="633" y="590" width="61" height="10" fill="#000"/><rect x="633" y="599" width="61" height="10" fill="#3c3c3c"/><rect x="633" y="608" width="61" height="10" fill="#5a5a5a"/><rect x="633" y="617" width="61" height="10" fill="#3c3c3c"/><rect x="633" y="626" width="61" height="10" fill="#5a5a5a"/><rect x="633" y="599" width="61" height="1" fill="#ffffff"/><rect x="636" y="593.5" width="7" height="1.6" fill="#ffffff" shape-rendering="auto"/><rect x="648" y="593.5" width="7" height="1.6" fill="#ffffff" shape-rendering="auto"/><rect x="660" y="593.5" width="7" height="1.6" fill="#ffffff" shape-rendering="auto"/><rect x="672" y="593.5" width="7" height="1.6" fill="#ffffff" shape-rendering="auto"/><rect x="684" y="593.5" width="7" height="1.6" fill="#ffffff" shape-rendering="auto"/><rect x="636" y="602.5" width="7" height="1.6" fill="#e8e8e8" shape-rendering="auto"/><rect x="648" y="602.5" width="7" height="1.6" fill="#e8e8e8" shape-rendering="auto"/><rect x="660" y="602.5" width="7" height="1.6" fill="#e8e8e8" shape-rendering="auto"/><rect x="672" y="602.5" width="7" height="1.6" fill="#e8e8e8" shape-rendering="auto"/><rect x="684" y="602.5" width="7" height="1.6" fill="#e8e8e8" shape-rendering="auto"/><rect x="636" y="611.5" width="7" height="1.6" fill="#e8e8e8" shape-rendering="auto"/><rect x="648" y="611.5" width="7" height="1.6" fill="#e8e8e8" shape-rendering="auto"/><rect x="660" y="611.5" width="7" height="1.6" fill="#e8e8e8" shape-rendering="auto"/><rect x="672" y="611.5" width="7" height="1.6" fill="#e8e8e8" shape-rendering="auto"/><rect x="684" y="611.5" width="7" height="1.6" fill="#e8e8e8" shape-rendering="auto"/><rect x="636" y="620.5" width="7" height="1.6" fill="#e8e8e8" shape-rendering="auto"/><rect x="648" y="620.5" width="7" height="1.6" fill="#e8e8e8" shape-rendering="auto"/><rect x="660" y="620.5" width="7" height="1.6" fill="#e8e8e8" shape-rendering="auto"/><rect x="672" y="620.5" width="7" height="1.6" fill="#e8e8e8" shape-rendering="auto"/><rect x="684" y="620.5" width="7" height="1.6" fill="#e8e8e8" shape-rendering="auto"/><rect x="636" y="629.5" width="7" height="1.6" fill="#e8e8e8" shape-rendering="auto"/><rect x="648" y="629.5" width="7" height="1.6" fill="#e8e8e8" shape-rendering="auto"/><rect x="660" y="629.5" width="7" height="1.6" fill="#e8e8e8" shape-rendering="auto"/><rect x="672" y="629.5" width="7" height="1.6" fill="#e8e8e8" shape-rendering="auto"/><rect x="684" y="629.5" width="7" height="1.6" fill="#e8e8e8" shape-rendering="auto"/><rect x="702" y="176" width="61" height="46" fill="#ffffff"/><rect x="702" y="185" width="61" height="10" fill="#dcdcdc"/><rect x="702" y="203" width="61" height="10" fill="#dcdcdc"/><rect x="702" y="176" width="61" height="1" fill="#7f7f7f"/><rect x="702" y="185" width="61" height="1" fill="#7f7f7f"/><rect x="702" y="221" width="61" height="1" fill="#7f7f7f"/><rect x="705" y="179.5" width="7" height="1.6" fill="#595959" shape-rendering="auto"/><rect x="717" y="179.5" width="7" height="1.6" fill="#595959" shape-rendering="auto"/><rect x="729" y="179.5" width="7" height="1.6" fill="#595959" shape-rendering="auto"/><rect x="741" y="179.5" width="7" height="1.6" fill="#595959" shape-rendering="auto"/><rect x="753" y="179.5" width="7" height="1.6" fill="#595959" shape-rendering="auto"/><rect x="705" y="188.5" width="7" height="1.6" fill="#595959" shape-rendering="auto"/><rect x="717" y="188.5" width="7" height="1.6" fill="#595959" shape-rendering="auto"/><rect x="729" y="188.5" width="7" height="1.6" fill="#595959" shape-rendering="auto"/><rect x="741" y="188.5" width="7" height="1.6" fill="#595959" shape-rendering="auto"/><rect x="753" y="188.5" width="7" height="1.6" fill="#595959" shape-rendering="auto"/><rect x="705" y="197.5" width="7" height="1.6" fill="#595959" shape-rendering="auto"/><rect x="717" y="197.5" width="7" height="1.6" fill="#595959" shape-rendering="auto"/><rect x="729" y="197.5" width="7" height="1.6" fill="#595959" shape-rendering="auto"/><rect x="741" y="197.5" width="7" height="1.6" fill="#595959" shape-rendering="auto"/><rect x="753" y="197.5" width="7" height="1.6" fill="#595959" shape-rendering="auto"/><rect x="705" y="206.5" width="7" height="1.6" fill="#595959" shape-rendering="auto"/><rect x="717" y="206.5" width="7" height="1.6" fill="#595959" shape-rendering="auto"/><rect x="729" y="206.5" width="7" height="1.6" fill="#595959" shape-rendering="auto"/><rect x="741" y="206.5" width="7" height="1.6" fill="#595959" shape-rendering="auto"/><rect x="753" y="206.5" width="7" height="1.6" fill="#595959" shape-rendering="auto"/><rect x="705" y="215.5" width="7" height="1.6" fill="#595959" shape-rendering="auto"/><rect x="717" y="215.5" width="7" height="1.6" fill="#595959" shape-rendering="auto"/><rect x="729" y="215.5" width="7" height="1.6" fill="#595959" shape-rendering="auto"/><rect x="741" y="215.5" width="7" height="1.6" fill="#595959" shape-rendering="auto"/><rect x="753" y="215.5" width="7" height="1.6" fill="#595959" shape-rendering="auto"/><rect x="702" y="230" width="61" height="46" fill="#ffffff"/><rect x="702" y="230" width="61" height="10" fill="#7f7f7f"/><rect x="702" y="248" width="61" height="1" fill="#8c8c8c"/><rect x="702" y="257" width="61" height="1" fill="#8c8c8c"/><rect x="702" y="266" width="61" height="1" fill="#8c8c8c"/><rect x="702" y="230" width="61" height="1" fill="#7f7f7f"/><rect x="702" y="275" width="61" height="1" fill="#7f7f7f"/><rect x="702" y="230" width="1" height="46" fill="#7f7f7f"/><rect x="762" y="230" width="1" height="46" fill="#7f7f7f"/><rect x="705" y="233.5" width="7" height="1.6" fill="#ffffff" shape-rendering="auto"/><rect x="717" y="233.5" width="7" height="1.6" fill="#ffffff" shape-rendering="auto"/><rect x="729" y="233.5" width="7" height="1.6" fill="#ffffff" shape-rendering="auto"/><rect x="741" y="233.5" width="7" height="1.6" fill="#ffffff" shape-rendering="auto"/><rect x="753" y="233.5" width="7" height="1.6" fill="#ffffff" shape-rendering="auto"/><rect x="705" y="242.5" width="7" height="1.6" fill="#000" shape-rendering="auto"/><rect x="717" y="242.5" width="7" height="1.6" fill="#000" shape-rendering="auto"/><rect x="729" y="242.5" width="7" height="1.6" fill="#000" shape-rendering="auto"/><rect x="741" y="242.5" width="7" height="1.6" fill="#000" shape-rendering="auto"/><rect x="753" y="242.5" width="7" height="1.6" fill="#000" shape-rendering="auto"/><rect x="705" y="251.5" width="7" height="1.6" fill="#000" shape-rendering="auto"/><rect x="717" y="251.5" width="7" height="1.6" fill="#000" shape-rendering="auto"/><rect x="729" y="251.5" width="7" height="1.6" fill="#000" shape-rendering="auto"/><rect x="741" y="251.5" width="7" height="1.6" fill="#000" shape-rendering="auto"/><rect x="753" y="251.5" width="7" height="1.6" fill="#000" shape-rendering="auto"/><rect x="705" y="260.5" width="7" height="1.6" fill="#000" shape-rendering="auto"/><rect x="717" y="260.5" width="7" height="1.6" fill="#000" shape-rendering="auto"/><rect x="729" y="260.5" width="7" height="1.6" fill="#000" shape-rendering="auto"/><rect x="741" y="260.5" width="7" height="1.6" fill="#000" shape-rendering="auto"/><rect x="753" y="260.5" width="7" height="1.6" fill="#000" shape-rendering="auto"/><rect x="705" y="269.5" width="7" height="1.6" fill="#000" shape-rendering="auto"/><rect x="717" y="269.5" width="7" height="1.6" fill="#000" shape-rendering="auto"/><rect x="729" y="269.5" width="7" height="1.6" fill="#000" shape-rendering="auto"/><rect x="741" y="269.5" width="7" height="1.6" fill="#000" shape-rendering="auto"/><rect x="753" y="269.5" width="7" height="1.6" fill="#000" shape-rendering="auto"/><rect x="702" y="284" width="61" height="46" fill="#ffffff"/><rect x="702" y="293" width="61" height="10" fill="#dcdcdc"/><rect x="702" y="311" width="61" height="10" fill="#dcdcdc"/><rect x="702" y="293" width="61" height="1" fill="#8c8c8c"/><rect x="702" y="302" width="61" height="1" fill="#8c8c8c"/><rect x="702" y="311" width="61" height="1" fill="#8c8c8c"/><rect x="702" y="320" width="61" height="1" fill="#8c8c8c"/><rect x="714" y="284" width="1" height="46" fill="#8c8c8c"/><rect x="726" y="284" width="1" height="46" fill="#8c8c8c"/><rect x="738" y="284" width="1" height="46" fill="#8c8c8c"/><rect x="750" y="284" width="1" height="46" fill="#8c8c8c"/><rect x="702" y="284" width="61" height="1" fill="#7f7f7f"/><rect x="702" y="329" width="61" height="1" fill="#7f7f7f"/><rect x="702" y="284" width="1" height="46" fill="#7f7f7f"/><rect x="762" y="284" width="1" height="46" fill="#7f7f7f"/><rect x="705" y="287.5" width="7" height="1.6" fill="#000" shape-rendering="auto"/><rect x="717" y="287.5" width="7" height="1.6" fill="#000" shape-rendering="auto"/><rect x="729" y="287.5" width="7" height="1.6" fill="#000" shape-rendering="auto"/><rect x="741" y="287.5" width="7" height="1.6" fill="#000" shape-rendering="auto"/><rect x="753" y="287.5" width="7" height="1.6" fill="#000" shape-rendering="auto"/><rect x="705" y="296.5" width="7" height="1.6" fill="#000" shape-rendering="auto"/><rect x="717" y="296.5" width="7" height="1.6" fill="#000" shape-rendering="auto"/><rect x="729" y="296.5" width="7" height="1.6" fill="#000" shape-rendering="auto"/><rect x="741" y="296.5" width="7" height="1.6" fill="#000" shape-rendering="auto"/><rect x="753" y="296.5" width="7" height="1.6" fill="#000" shape-rendering="auto"/><rect x="705" y="305.5" width="7" height="1.6" fill="#000" shape-rendering="auto"/><rect x="717" y="305.5" width="7" height="1.6" fill="#000" shape-rendering="auto"/><rect x="729" y="305.5" width="7" height="1.6" fill="#000" shape-rendering="auto"/><rect x="741" y="305.5" width="7" height="1.6" fill="#000" shape-rendering="auto"/><rect x="753" y="305.5" width="7" height="1.6" fill="#000" shape-rendering="auto"/><rect x="705" y="314.5" width="7" height="1.6" fill="#000" shape-rendering="auto"/><rect x="717" y="314.5" width="7" height="1.6" fill="#000" shape-rendering="auto"/><rect x="729" y="314.5" width="7" height="1.6" fill="#000" shape-rendering="auto"/><rect x="741" y="314.5" width="7" height="1.6" fill="#000" shape-rendering="auto"/><rect x="753" y="314.5" width="7" height="1.6" fill="#000" shape-rendering="auto"/><rect x="705" y="323.5" width="7" height="1.6" fill="#000" shape-rendering="auto"/><rect x="717" y="323.5" width="7" height="1.6" fill="#000" shape-rendering="auto"/><rect x="729" y="323.5" width="7" height="1.6" fill="#000" shape-rendering="auto"/><rect x="741" y="323.5" width="7" height="1.6" fill="#000" shape-rendering="auto"/><rect x="753" y="323.5" width="7" height="1.6" fill="#000" shape-rendering="auto"/><rect x="702" y="356" width="61" height="46" fill="#ffffff"/><rect x="702" y="356" width="61" height="10" fill="#7f7f7f"/><rect x="702" y="365" width="61" height="10" fill="#dcdcdc"/><rect x="702" y="383" width="61" height="10" fill="#dcdcdc"/><rect x="702" y="374" width="61" height="1" fill="#c8c8c8"/><rect x="702" y="383" width="61" height="1" fill="#c8c8c8"/><rect x="702" y="392" width="61" height="1" fill="#c8c8c8"/><rect x="702" y="356" width="61" height="1" fill="#7f7f7f"/><rect x="702" y="401" width="61" height="1" fill="#7f7f7f"/><rect x="702" y="356" width="1" height="46" fill="#7f7f7f"/><rect x="762" y="356" width="1" height="46" fill="#7f7f7f"/><rect x="705" y="359.5" width="7" height="1.6" fill="#ffffff" shape-rendering="auto"/><rect x="717" y="359.5" width="7" height="1.6" fill="#ffffff" shape-rendering="auto"/><rect x="729" y="359.5" width="7" height="1.6" fill="#ffffff" shape-rendering="auto"/><rect x="741" y="359.5" width="7" height="1.6" fill="#ffffff" shape-rendering="auto"/><rect x="753" y="359.5" width="7" height="1.6" fill="#ffffff" shape-rendering="auto"/><rect x="705" y="368.5" width="7" height="1.6" fill="#000" shape-rendering="auto"/><rect x="717" y="368.5" width="7" height="1.6" fill="#000" shape-rendering="auto"/><rect x="729" y="368.5" width="7" height="1.6" fill="#000" shape-rendering="auto"/><rect x="741" y="368.5" width="7" height="1.6" fill="#000" shape-rendering="auto"/><rect x="753" y="368.5" width="7" height="1.6" fill="#000" shape-rendering="auto"/><rect x="705" y="377.5" width="7" height="1.6" fill="#000" shape-rendering="auto"/><rect x="717" y="377.5" width="7" height="1.6" fill="#000" shape-rendering="auto"/><rect x="729" y="377.5" width="7" height="1.6" fill="#000" shape-rendering="auto"/><rect x="741" y="377.5" width="7" height="1.6" fill="#000" shape-rendering="auto"/><rect x="753" y="377.5" width="7" height="1.6" fill="#000" shape-rendering="auto"/><rect x="705" y="386.5" width="7" height="1.6" fill="#000" shape-rendering="auto"/><rect x="717" y="386.5" width="7" height="1.6" fill="#000" shape-rendering="auto"/><rect x="729" y="386.5" width="7" height="1.6" fill="#000" shape-rendering="auto"/><rect x="741" y="386.5" width="7" height="1.6" fill="#000" shape-rendering="auto"/><rect x="753" y="386.5" width="7" height="1.6" fill="#000" shape-rendering="auto"/><rect x="705" y="395.5" width="7" height="1.6" fill="#000" shape-rendering="auto"/><rect x="717" y="395.5" width="7" height="1.6" fill="#000" shape-rendering="auto"/><rect x="729" y="395.5" width="7" height="1.6" fill="#000" shape-rendering="auto"/><rect x="741" y="395.5" width="7" height="1.6" fill="#000" shape-rendering="auto"/><rect x="753" y="395.5" width="7" height="1.6" fill="#000" shape-rendering="auto"/><rect x="702" y="410" width="61" height="46" fill="#ffffff"/><rect x="702" y="410" width="61" height="10" fill="#7f7f7f"/><rect x="702" y="419" width="61" height="10" fill="#c8c8c8"/><rect x="702" y="428" width="61" height="10" fill="#dcdcdc"/><rect x="702" y="437" width="61" height="10" fill="#c8c8c8"/><rect x="702" y="446" width="61" height="10" fill="#dcdcdc"/><rect x="714" y="410" width="1" height="46" fill="#ffffff"/><rect x="726" y="410" width="1" height="46" fill="#ffffff"/><rect x="738" y="410" width="1" height="46" fill="#ffffff"/><rect x="750" y="410" width="1" height="46" fill="#ffffff"/><rect x="702" y="419" width="61" height="1" fill="#ffffff"/><rect x="702" y="428" width="61" height="1" fill="#ffffff"/><rect x="702" y="437" width="61" height="1" fill="#ffffff"/><rect x="702" y="446" width="61" height="1" fill="#ffffff"/><rect x="705" y="413.5" width="7" height="1.6" fill="#ffffff" shape-rendering="auto"/><rect x="717" y="413.5" width="7" height="1.6" fill="#ffffff" shape-rendering="auto"/><rect x="729" y="413.5" width="7" height="1.6" fill="#ffffff" shape-rendering="auto"/><rect x="741" y="413.5" width="7" height="1.6" fill="#ffffff" shape-rendering="auto"/><rect x="753" y="413.5" width="7" height="1.6" fill="#ffffff" shape-rendering="auto"/><rect x="705" y="422.5" width="7" height="1.6" fill="#000" shape-rendering="auto"/><rect x="717" y="422.5" width="7" height="1.6" fill="#000" shape-rendering="auto"/><rect x="729" y="422.5" width="7" height="1.6" fill="#000" shape-rendering="auto"/><rect x="741" y="422.5" width="7" height="1.6" fill="#000" shape-rendering="auto"/><rect x="753" y="422.5" width="7" height="1.6" fill="#000" shape-rendering="auto"/><rect x="705" y="431.5" width="7" height="1.6" fill="#000" shape-rendering="auto"/><rect x="717" y="431.5" width="7" height="1.6" fill="#000" shape-rendering="auto"/><rect x="729" y="431.5" width="7" height="1.6" fill="#000" shape-rendering="auto"/><rect x="741" y="431.5" width="7" height="1.6" fill="#000" shape-rendering="auto"/><rect x="753" y="431.5" width="7" height="1.6" fill="#000" shape-rendering="auto"/><rect x="705" y="440.5" width="7" height="1.6" fill="#000" shape-rendering="auto"/><rect x="717" y="440.5" width="7" height="1.6" fill="#000" shape-rendering="auto"/><rect x="729" y="440.5" width="7" height="1.6" fill="#000" shape-rendering="auto"/><rect x="741" y="440.5" width="7" height="1.6" fill="#000" shape-rendering="auto"/><rect x="753" y="440.5" width="7" height="1.6" fill="#000" shape-rendering="auto"/><rect x="705" y="449.5" width="7" height="1.6" fill="#000" shape-rendering="auto"/><rect x="717" y="449.5" width="7" height="1.6" fill="#000" shape-rendering="auto"/><rect x="729" y="449.5" width="7" height="1.6" fill="#000" shape-rendering="auto"/><rect x="741" y="449.5" width="7" height="1.6" fill="#000" shape-rendering="auto"/><rect x="753" y="449.5" width="7" height="1.6" fill="#000" shape-rendering="auto"/><rect x="702" y="464" width="61" height="46" fill="#ffffff"/><rect x="702" y="464" width="61" height="10" fill="#7f7f7f"/><rect x="702" y="473" width="61" height="10" fill="#d9d9d9"/><rect x="702" y="491" width="61" height="10" fill="#d9d9d9"/><rect x="702" y="473" width="61" height="1" fill="#000"/><rect x="702" y="509" width="61" height="1" fill="#000"/><rect x="705" y="467.5" width="7" height="1.6" fill="#ffffff" shape-rendering="auto"/><rect x="717" y="467.5" width="7" height="1.6" fill="#ffffff" shape-rendering="auto"/><rect x="729" y="467.5" width="7" height="1.6" fill="#ffffff" shape-rendering="auto"/><rect x="741" y="467.5" width="7" height="1.6" fill="#ffffff" shape-rendering="auto"/><rect x="753" y="467.5" width="7" height="1.6" fill="#ffffff" shape-rendering="auto"/><rect x="705" y="476.5" width="7" height="1.6" fill="#000" shape-rendering="auto"/><rect x="717" y="476.5" width="7" height="1.6" fill="#000" shape-rendering="auto"/><rect x="729" y="476.5" width="7" height="1.6" fill="#000" shape-rendering="auto"/><rect x="741" y="476.5" width="7" height="1.6" fill="#000" shape-rendering="auto"/><rect x="753" y="476.5" width="7" height="1.6" fill="#000" shape-rendering="auto"/><rect x="705" y="485.5" width="7" height="1.6" fill="#000" shape-rendering="auto"/><rect x="717" y="485.5" width="7" height="1.6" fill="#000" shape-rendering="auto"/><rect x="729" y="485.5" width="7" height="1.6" fill="#000" shape-rendering="auto"/><rect x="741" y="485.5" width="7" height="1.6" fill="#000" shape-rendering="auto"/><rect x="753" y="485.5" width="7" height="1.6" fill="#000" shape-rendering="auto"/><rect x="705" y="494.5" width="7" height="1.6" fill="#000" shape-rendering="auto"/><rect x="717" y="494.5" width="7" height="1.6" fill="#000" shape-rendering="auto"/><rect x="729" y="494.5" width="7" height="1.6" fill="#000" shape-rendering="auto"/><rect x="741" y="494.5" width="7" height="1.6" fill="#000" shape-rendering="auto"/><rect x="753" y="494.5" width="7" height="1.6" fill="#000" shape-rendering="auto"/><rect x="705" y="503.5" width="7" height="1.6" fill="#000" shape-rendering="auto"/><rect x="717" y="503.5" width="7" height="1.6" fill="#000" shape-rendering="auto"/><rect x="729" y="503.5" width="7" height="1.6" fill="#000" shape-rendering="auto"/><rect x="741" y="503.5" width="7" height="1.6" fill="#000" shape-rendering="auto"/><rect x="753" y="503.5" width="7" height="1.6" fill="#000" shape-rendering="auto"/><rect x="702" y="518" width="61" height="46" fill="#ffffff"/><rect x="702" y="518" width="61" height="10" fill="#dcdcdc"/><rect x="702" y="527" width="61" height="10" fill="#c8c8c8"/><rect x="702" y="536" width="61" height="10" fill="#dcdcdc"/><rect x="702" y="545" width="61" height="10" fill="#c8c8c8"/><rect x="702" y="554" width="61" height="10" fill="#dcdcdc"/><rect x="702" y="527" width="61" height="1" fill="#c8c8c8"/><rect x="702" y="536" width="61" height="1" fill="#c8c8c8"/><rect x="702" y="545" width="61" height="1" fill="#c8c8c8"/><rect x="702" y="554" width="61" height="1" fill="#c8c8c8"/><rect x="714" y="518" width="1" height="46" fill="#c8c8c8"/><rect x="726" y="518" width="1" height="46" fill="#c8c8c8"/><rect x="738" y="518" width="1" height="46" fill="#c8c8c8"/><rect x="750" y="518" width="1" height="46" fill="#c8c8c8"/><rect x="702" y="518" width="61" height="1" fill="#c8c8c8"/><rect x="702" y="563" width="61" height="1" fill="#c8c8c8"/><rect x="702" y="518" width="1" height="46" fill="#c8c8c8"/><rect x="762" y="518" width="1" height="46" fill="#c8c8c8"/><rect x="705" y="521.5" width="7" height="1.6" fill="#000" shape-rendering="auto"/><rect x="717" y="521.5" width="7" height="1.6" fill="#000" shape-rendering="auto"/><rect x="729" y="521.5" width="7" height="1.6" fill="#000" shape-rendering="auto"/><rect x="741" y="521.5" width="7" height="1.6" fill="#000" shape-rendering="auto"/><rect x="753" y="521.5" width="7" height="1.6" fill="#000" shape-rendering="auto"/><rect x="705" y="530.5" width="7" height="1.6" fill="#000" shape-rendering="auto"/><rect x="717" y="530.5" width="7" height="1.6" fill="#000" shape-rendering="auto"/><rect x="729" y="530.5" width="7" height="1.6" fill="#000" shape-rendering="auto"/><rect x="741" y="530.5" width="7" height="1.6" fill="#000" shape-rendering="auto"/><rect x="753" y="530.5" width="7" height="1.6" fill="#000" shape-rendering="auto"/><rect x="705" y="539.5" width="7" height="1.6" fill="#000" shape-rendering="auto"/><rect x="717" y="539.5" width="7" height="1.6" fill="#000" shape-rendering="auto"/><rect x="729" y="539.5" width="7" height="1.6" fill="#000" shape-rendering="auto"/><rect x="741" y="539.5" width="7" height="1.6" fill="#000" shape-rendering="auto"/><rect x="753" y="539.5" width="7" height="1.6" fill="#000" shape-rendering="auto"/><rect x="705" y="548.5" width="7" height="1.6" fill="#000" shape-rendering="auto"/><rect x="717" y="548.5" width="7" height="1.6" fill="#000" shape-rendering="auto"/><rect x="729" y="548.5" width="7" height="1.6" fill="#000" shape-rendering="auto"/><rect x="741" y="548.5" width="7" height="1.6" fill="#000" shape-rendering="auto"/><rect x="753" y="548.5" width="7" height="1.6" fill="#000" shape-rendering="auto"/><rect x="705" y="557.5" width="7" height="1.6" fill="#000" shape-rendering="auto"/><rect x="717" y="557.5" width="7" height="1.6" fill="#000" shape-rendering="auto"/><rect x="729" y="557.5" width="7" height="1.6" fill="#000" shape-rendering="auto"/><rect x="741" y="557.5" width="7" height="1.6" fill="#000" shape-rendering="auto"/><rect x="753" y="557.5" width="7" height="1.6" fill="#000" shape-rendering="auto"/><rect x="702" y="590" width="61" height="46" fill="#ffffff"/><rect x="702" y="590" width="61" height="10" fill="#000"/><rect x="702" y="599" width="61" height="10" fill="#5c5c5c"/><rect x="702" y="608" width="61" height="10" fill="#7a7a7a"/><rect x="702" y="617" width="61" height="10" fill="#5c5c5c"/><rect x="702" y="626" width="61" height="10" fill="#7a7a7a"/><rect x="702" y="599" width="61" height="1" fill="#ffffff"/><rect x="705" y="593.5" width="7" height="1.6" fill="#ffffff" shape-rendering="auto"/><rect x="717" y="593.5" width="7" height="1.6" fill="#ffffff" shape-rendering="auto"/><rect x="729" y="593.5" width="7" height="1.6" fill="#ffffff" shape-rendering="auto"/><rect x="741" y="593.5" width="7" height="1.6" fill="#ffffff" shape-rendering="auto"/><rect x="753" y="593.5" width="7" height="1.6" fill="#ffffff" shape-rendering="auto"/><rect x="705" y="602.5" width="7" height="1.6" fill="#e8e8e8" shape-rendering="auto"/><rect x="717" y="602.5" width="7" height="1.6" fill="#e8e8e8" shape-rendering="auto"/><rect x="729" y="602.5" width="7" height="1.6" fill="#e8e8e8" shape-rendering="auto"/><rect x="741" y="602.5" width="7" height="1.6" fill="#e8e8e8" shape-rendering="auto"/><rect x="753" y="602.5" width="7" height="1.6" fill="#e8e8e8" shape-rendering="auto"/><rect x="705" y="611.5" width="7" height="1.6" fill="#e8e8e8" shape-rendering="auto"/><rect x="717" y="611.5" width="7" height="1.6" fill="#e8e8e8" shape-rendering="auto"/><rect x="729" y="611.5" width="7" height="1.6" fill="#e8e8e8" shape-rendering="auto"/><rect x="741" y="611.5" width="7" height="1.6" fill="#e8e8e8" shape-rendering="auto"/><rect x="753" y="611.5" width="7" height="1.6" fill="#e8e8e8" shape-rendering="auto"/><rect x="705" y="620.5" width="7" height="1.6" fill="#e8e8e8" shape-rendering="auto"/><rect x="717" y="620.5" width="7" height="1.6" fill="#e8e8e8" shape-rendering="auto"/><rect x="729" y="620.5" width="7" height="1.6" fill="#e8e8e8" shape-rendering="auto"/><rect x="741" y="620.5" width="7" height="1.6" fill="#e8e8e8" shape-rendering="auto"/><rect x="753" y="620.5" width="7" height="1.6" fill="#e8e8e8" shape-rendering="auto"/><rect x="705" y="629.5" width="7" height="1.6" fill="#e8e8e8" shape-rendering="auto"/><rect x="717" y="629.5" width="7" height="1.6" fill="#e8e8e8" shape-rendering="auto"/><rect x="729" y="629.5" width="7" height="1.6" fill="#e8e8e8" shape-rendering="auto"/><rect x="741" y="629.5" width="7" height="1.6" fill="#e8e8e8" shape-rendering="auto"/><rect x="753" y="629.5" width="7" height="1.6" fill="#e8e8e8" shape-rendering="auto"/><rect x="771" y="176" width="61" height="46" fill="#ffffff"/><rect x="771" y="185" width="61" height="10" fill="#fcdcc8"/><rect x="771" y="203" width="61" height="10" fill="#fcdcc8"/><rect x="771" y="176" width="61" height="1" fill="#ee6a1f"/><rect x="771" y="185" width="61" height="1" fill="#ee6a1f"/><rect x="771" y="221" width="61" height="1" fill="#ee6a1f"/><rect x="774" y="179.5" width="7" height="1.6" fill="#b9561b" shape-rendering="auto"/><rect x="786" y="179.5" width="7" height="1.6" fill="#b9561b" shape-rendering="auto"/><rect x="798" y="179.5" width="7" height="1.6" fill="#b9561b" shape-rendering="auto"/><rect x="810" y="179.5" width="7" height="1.6" fill="#b9561b" shape-rendering="auto"/><rect x="822" y="179.5" width="7" height="1.6" fill="#b9561b" shape-rendering="auto"/><rect x="774" y="188.5" width="7" height="1.6" fill="#b9561b" shape-rendering="auto"/><rect x="786" y="188.5" width="7" height="1.6" fill="#b9561b" shape-rendering="auto"/><rect x="798" y="188.5" width="7" height="1.6" fill="#b9561b" shape-rendering="auto"/><rect x="810" y="188.5" width="7" height="1.6" fill="#b9561b" shape-rendering="auto"/><rect x="822" y="188.5" width="7" height="1.6" fill="#b9561b" shape-rendering="auto"/><rect x="774" y="197.5" width="7" height="1.6" fill="#b9561b" shape-rendering="auto"/><rect x="786" y="197.5" width="7" height="1.6" fill="#b9561b" shape-rendering="auto"/><rect x="798" y="197.5" width="7" height="1.6" fill="#b9561b" shape-rendering="auto"/><rect x="810" y="197.5" width="7" height="1.6" fill="#b9561b" shape-rendering="auto"/><rect x="822" y="197.5" width="7" height="1.6" fill="#b9561b" shape-rendering="auto"/><rect x="774" y="206.5" width="7" height="1.6" fill="#b9561b" shape-rendering="auto"/><rect x="786" y="206.5" width="7" height="1.6" fill="#b9561b" shape-rendering="auto"/><rect x="798" y="206.5" width="7" height="1.6" fill="#b9561b" shape-rendering="auto"/><rect x="810" y="206.5" width="7" height="1.6" fill="#b9561b" shape-rendering="auto"/><rect x="822" y="206.5" width="7" height="1.6" fill="#b9561b" shape-rendering="auto"/><rect x="774" y="215.5" width="7" height="1.6" fill="#b9561b" shape-rendering="auto"/><rect x="786" y="215.5" width="7" height="1.6" fill="#b9561b" shape-rendering="auto"/><rect x="798" y="215.5" width="7" height="1.6" fill="#b9561b" shape-rendering="auto"/><rect x="810" y="215.5" width="7" height="1.6" fill="#b9561b" shape-rendering="auto"/><rect x="822" y="215.5" width="7" height="1.6" fill="#b9561b" shape-rendering="auto"/><rect x="771" y="230" width="61" height="46" fill="#ffffff"/><rect x="771" y="230" width="61" height="10" fill="#ee6a1f"/><rect x="771" y="248" width="61" height="1" fill="#ee7a3a"/><rect x="771" y="257" width="61" height="1" fill="#ee7a3a"/><rect x="771" y="266" width="61" height="1" fill="#ee7a3a"/><rect x="771" y="230" width="61" height="1" fill="#ee6a1f"/><rect x="771" y="275" width="61" height="1" fill="#ee6a1f"/><rect x="771" y="230" width="1" height="46" fill="#ee6a1f"/><rect x="831" y="230" width="1" height="46" fill="#ee6a1f"/><rect x="774" y="233.5" width="7" height="1.6" fill="#ffffff" shape-rendering="auto"/><rect x="786" y="233.5" width="7" height="1.6" fill="#ffffff" shape-rendering="auto"/><rect x="798" y="233.5" width="7" height="1.6" fill="#ffffff" shape-rendering="auto"/><rect x="810" y="233.5" width="7" height="1.6" fill="#ffffff" shape-rendering="auto"/><rect x="822" y="233.5" width="7" height="1.6" fill="#ffffff" shape-rendering="auto"/><rect x="774" y="242.5" width="7" height="1.6" fill="#000" shape-rendering="auto"/><rect x="786" y="242.5" width="7" height="1.6" fill="#000" shape-rendering="auto"/><rect x="798" y="242.5" width="7" height="1.6" fill="#000" shape-rendering="auto"/><rect x="810" y="242.5" width="7" height="1.6" fill="#000" shape-rendering="auto"/><rect x="822" y="242.5" width="7" height="1.6" fill="#000" shape-rendering="auto"/><rect x="774" y="251.5" width="7" height="1.6" fill="#000" shape-rendering="auto"/><rect x="786" y="251.5" width="7" height="1.6" fill="#000" shape-rendering="auto"/><rect x="798" y="251.5" width="7" height="1.6" fill="#000" shape-rendering="auto"/><rect x="810" y="251.5" width="7" height="1.6" fill="#000" shape-rendering="auto"/><rect x="822" y="251.5" width="7" height="1.6" fill="#000" shape-rendering="auto"/><rect x="774" y="260.5" width="7" height="1.6" fill="#000" shape-rendering="auto"/><rect x="786" y="260.5" width="7" height="1.6" fill="#000" shape-rendering="auto"/><rect x="798" y="260.5" width="7" height="1.6" fill="#000" shape-rendering="auto"/><rect x="810" y="260.5" width="7" height="1.6" fill="#000" shape-rendering="auto"/><rect x="822" y="260.5" width="7" height="1.6" fill="#000" shape-rendering="auto"/><rect x="774" y="269.5" width="7" height="1.6" fill="#000" shape-rendering="auto"/><rect x="786" y="269.5" width="7" height="1.6" fill="#000" shape-rendering="auto"/><rect x="798" y="269.5" width="7" height="1.6" fill="#000" shape-rendering="auto"/><rect x="810" y="269.5" width="7" height="1.6" fill="#000" shape-rendering="auto"/><rect x="822" y="269.5" width="7" height="1.6" fill="#000" shape-rendering="auto"/><rect x="771" y="284" width="61" height="46" fill="#ffffff"/><rect x="771" y="293" width="61" height="10" fill="#fcdcc8"/><rect x="771" y="311" width="61" height="10" fill="#fcdcc8"/><rect x="771" y="293" width="61" height="1" fill="#ee7a3a"/><rect x="771" y="302" width="61" height="1" fill="#ee7a3a"/><rect x="771" y="311" width="61" height="1" fill="#ee7a3a"/><rect x="771" y="320" width="61" height="1" fill="#ee7a3a"/><rect x="783" y="284" width="1" height="46" fill="#ee7a3a"/><rect x="795" y="284" width="1" height="46" fill="#ee7a3a"/><rect x="807" y="284" width="1" height="46" fill="#ee7a3a"/><rect x="819" y="284" width="1" height="46" fill="#ee7a3a"/><rect x="771" y="284" width="61" height="1" fill="#ee6a1f"/><rect x="771" y="329" width="61" height="1" fill="#ee6a1f"/><rect x="771" y="284" width="1" height="46" fill="#ee6a1f"/><rect x="831" y="284" width="1" height="46" fill="#ee6a1f"/><rect x="774" y="287.5" width="7" height="1.6" fill="#000" shape-rendering="auto"/><rect x="786" y="287.5" width="7" height="1.6" fill="#000" shape-rendering="auto"/><rect x="798" y="287.5" width="7" height="1.6" fill="#000" shape-rendering="auto"/><rect x="810" y="287.5" width="7" height="1.6" fill="#000" shape-rendering="auto"/><rect x="822" y="287.5" width="7" height="1.6" fill="#000" shape-rendering="auto"/><rect x="774" y="296.5" width="7" height="1.6" fill="#000" shape-rendering="auto"/><rect x="786" y="296.5" width="7" height="1.6" fill="#000" shape-rendering="auto"/><rect x="798" y="296.5" width="7" height="1.6" fill="#000" shape-rendering="auto"/><rect x="810" y="296.5" width="7" height="1.6" fill="#000" shape-rendering="auto"/><rect x="822" y="296.5" width="7" height="1.6" fill="#000" shape-rendering="auto"/><rect x="774" y="305.5" width="7" height="1.6" fill="#000" shape-rendering="auto"/><rect x="786" y="305.5" width="7" height="1.6" fill="#000" shape-rendering="auto"/><rect x="798" y="305.5" width="7" height="1.6" fill="#000" shape-rendering="auto"/><rect x="810" y="305.5" width="7" height="1.6" fill="#000" shape-rendering="auto"/><rect x="822" y="305.5" width="7" height="1.6" fill="#000" shape-rendering="auto"/><rect x="774" y="314.5" width="7" height="1.6" fill="#000" shape-rendering="auto"/><rect x="786" y="314.5" width="7" height="1.6" fill="#000" shape-rendering="auto"/><rect x="798" y="314.5" width="7" height="1.6" fill="#000" shape-rendering="auto"/><rect x="810" y="314.5" width="7" height="1.6" fill="#000" shape-rendering="auto"/><rect x="822" y="314.5" width="7" height="1.6" fill="#000" shape-rendering="auto"/><rect x="774" y="323.5" width="7" height="1.6" fill="#000" shape-rendering="auto"/><rect x="786" y="323.5" width="7" height="1.6" fill="#000" shape-rendering="auto"/><rect x="798" y="323.5" width="7" height="1.6" fill="#000" shape-rendering="auto"/><rect x="810" y="323.5" width="7" height="1.6" fill="#000" shape-rendering="auto"/><rect x="822" y="323.5" width="7" height="1.6" fill="#000" shape-rendering="auto"/><rect x="771" y="356" width="61" height="46" fill="#ffffff"/><rect x="771" y="356" width="61" height="10" fill="#ee6a1f"/><rect x="771" y="365" width="61" height="10" fill="#fcdcc8"/><rect x="771" y="383" width="61" height="10" fill="#fcdcc8"/><rect x="771" y="374" width="61" height="1" fill="#f8c0a0"/><rect x="771" y="383" width="61" height="1" fill="#f8c0a0"/><rect x="771" y="392" width="61" height="1" fill="#f8c0a0"/><rect x="771" y="356" width="61" height="1" fill="#ee6a1f"/><rect x="771" y="401" width="61" height="1" fill="#ee6a1f"/><rect x="771" y="356" width="1" height="46" fill="#ee6a1f"/><rect x="831" y="356" width="1" height="46" fill="#ee6a1f"/><rect x="774" y="359.5" width="7" height="1.6" fill="#ffffff" shape-rendering="auto"/><rect x="786" y="359.5" width="7" height="1.6" fill="#ffffff" shape-rendering="auto"/><rect x="798" y="359.5" width="7" height="1.6" fill="#ffffff" shape-rendering="auto"/><rect x="810" y="359.5" width="7" height="1.6" fill="#ffffff" shape-rendering="auto"/><rect x="822" y="359.5" width="7" height="1.6" fill="#ffffff" shape-rendering="auto"/><rect x="774" y="368.5" width="7" height="1.6" fill="#000" shape-rendering="auto"/><rect x="786" y="368.5" width="7" height="1.6" fill="#000" shape-rendering="auto"/><rect x="798" y="368.5" width="7" height="1.6" fill="#000" shape-rendering="auto"/><rect x="810" y="368.5" width="7" height="1.6" fill="#000" shape-rendering="auto"/><rect x="822" y="368.5" width="7" height="1.6" fill="#000" shape-rendering="auto"/><rect x="774" y="377.5" width="7" height="1.6" fill="#000" shape-rendering="auto"/><rect x="786" y="377.5" width="7" height="1.6" fill="#000" shape-rendering="auto"/><rect x="798" y="377.5" width="7" height="1.6" fill="#000" shape-rendering="auto"/><rect x="810" y="377.5" width="7" height="1.6" fill="#000" shape-rendering="auto"/><rect x="822" y="377.5" width="7" height="1.6" fill="#000" shape-rendering="auto"/><rect x="774" y="386.5" width="7" height="1.6" fill="#000" shape-rendering="auto"/><rect x="786" y="386.5" width="7" height="1.6" fill="#000" shape-rendering="auto"/><rect x="798" y="386.5" width="7" height="1.6" fill="#000" shape-rendering="auto"/><rect x="810" y="386.5" width="7" height="1.6" fill="#000" shape-rendering="auto"/><rect x="822" y="386.5" width="7" height="1.6" fill="#000" shape-rendering="auto"/><rect x="774" y="395.5" width="7" height="1.6" fill="#000" shape-rendering="auto"/><rect x="786" y="395.5" width="7" height="1.6" fill="#000" shape-rendering="auto"/><rect x="798" y="395.5" width="7" height="1.6" fill="#000" shape-rendering="auto"/><rect x="810" y="395.5" width="7" height="1.6" fill="#000" shape-rendering="auto"/><rect x="822" y="395.5" width="7" height="1.6" fill="#000" shape-rendering="auto"/><rect x="771" y="410" width="61" height="46" fill="#ffffff"/><rect x="771" y="410" width="61" height="10" fill="#ee6a1f"/><rect x="771" y="419" width="61" height="10" fill="#f8c0a0"/><rect x="771" y="428" width="61" height="10" fill="#fcdcc8"/><rect x="771" y="437" width="61" height="10" fill="#f8c0a0"/><rect x="771" y="446" width="61" height="10" fill="#fcdcc8"/><rect x="783" y="410" width="1" height="46" fill="#ffffff"/><rect x="795" y="410" width="1" height="46" fill="#ffffff"/><rect x="807" y="410" width="1" height="46" fill="#ffffff"/><rect x="819" y="410" width="1" height="46" fill="#ffffff"/><rect x="771" y="419" width="61" height="1" fill="#ffffff"/><rect x="771" y="428" width="61" height="1" fill="#ffffff"/><rect x="771" y="437" width="61" height="1" fill="#ffffff"/><rect x="771" y="446" width="61" height="1" fill="#ffffff"/><rect x="774" y="413.5" width="7" height="1.6" fill="#ffffff" shape-rendering="auto"/><rect x="786" y="413.5" width="7" height="1.6" fill="#ffffff" shape-rendering="auto"/><rect x="798" y="413.5" width="7" height="1.6" fill="#ffffff" shape-rendering="auto"/><rect x="810" y="413.5" width="7" height="1.6" fill="#ffffff" shape-rendering="auto"/><rect x="822" y="413.5" width="7" height="1.6" fill="#ffffff" shape-rendering="auto"/><rect x="774" y="422.5" width="7" height="1.6" fill="#000" shape-rendering="auto"/><rect x="786" y="422.5" width="7" height="1.6" fill="#000" shape-rendering="auto"/><rect x="798" y="422.5" width="7" height="1.6" fill="#000" shape-rendering="auto"/><rect x="810" y="422.5" width="7" height="1.6" fill="#000" shape-rendering="auto"/><rect x="822" y="422.5" width="7" height="1.6" fill="#000" shape-rendering="auto"/><rect x="774" y="431.5" width="7" height="1.6" fill="#000" shape-rendering="auto"/><rect x="786" y="431.5" width="7" height="1.6" fill="#000" shape-rendering="auto"/><rect x="798" y="431.5" width="7" height="1.6" fill="#000" shape-rendering="auto"/><rect x="810" y="431.5" width="7" height="1.6" fill="#000" shape-rendering="auto"/><rect x="822" y="431.5" width="7" height="1.6" fill="#000" shape-rendering="auto"/><rect x="774" y="440.5" width="7" height="1.6" fill="#000" shape-rendering="auto"/><rect x="786" y="440.5" width="7" height="1.6" fill="#000" shape-rendering="auto"/><rect x="798" y="440.5" width="7" height="1.6" fill="#000" shape-rendering="auto"/><rect x="810" y="440.5" width="7" height="1.6" fill="#000" shape-rendering="auto"/><rect x="822" y="440.5" width="7" height="1.6" fill="#000" shape-rendering="auto"/><rect x="774" y="449.5" width="7" height="1.6" fill="#000" shape-rendering="auto"/><rect x="786" y="449.5" width="7" height="1.6" fill="#000" shape-rendering="auto"/><rect x="798" y="449.5" width="7" height="1.6" fill="#000" shape-rendering="auto"/><rect x="810" y="449.5" width="7" height="1.6" fill="#000" shape-rendering="auto"/><rect x="822" y="449.5" width="7" height="1.6" fill="#000" shape-rendering="auto"/><rect x="771" y="464" width="61" height="46" fill="#ffffff"/><rect x="771" y="464" width="61" height="10" fill="#ee6a1f"/><rect x="771" y="473" width="61" height="10" fill="#d9d9d9"/><rect x="771" y="491" width="61" height="10" fill="#d9d9d9"/><rect x="771" y="473" width="61" height="1" fill="#000"/><rect x="771" y="509" width="61" height="1" fill="#000"/><rect x="774" y="467.5" width="7" height="1.6" fill="#ffffff" shape-rendering="auto"/><rect x="786" y="467.5" width="7" height="1.6" fill="#ffffff" shape-rendering="auto"/><rect x="798" y="467.5" width="7" height="1.6" fill="#ffffff" shape-rendering="auto"/><rect x="810" y="467.5" width="7" height="1.6" fill="#ffffff" shape-rendering="auto"/><rect x="822" y="467.5" width="7" height="1.6" fill="#ffffff" shape-rendering="auto"/><rect x="774" y="476.5" width="7" height="1.6" fill="#000" shape-rendering="auto"/><rect x="786" y="476.5" width="7" height="1.6" fill="#000" shape-rendering="auto"/><rect x="798" y="476.5" width="7" height="1.6" fill="#000" shape-rendering="auto"/><rect x="810" y="476.5" width="7" height="1.6" fill="#000" shape-rendering="auto"/><rect x="822" y="476.5" width="7" height="1.6" fill="#000" shape-rendering="auto"/><rect x="774" y="485.5" width="7" height="1.6" fill="#000" shape-rendering="auto"/><rect x="786" y="485.5" width="7" height="1.6" fill="#000" shape-rendering="auto"/><rect x="798" y="485.5" width="7" height="1.6" fill="#000" shape-rendering="auto"/><rect x="810" y="485.5" width="7" height="1.6" fill="#000" shape-rendering="auto"/><rect x="822" y="485.5" width="7" height="1.6" fill="#000" shape-rendering="auto"/><rect x="774" y="494.5" width="7" height="1.6" fill="#000" shape-rendering="auto"/><rect x="786" y="494.5" width="7" height="1.6" fill="#000" shape-rendering="auto"/><rect x="798" y="494.5" width="7" height="1.6" fill="#000" shape-rendering="auto"/><rect x="810" y="494.5" width="7" height="1.6" fill="#000" shape-rendering="auto"/><rect x="822" y="494.5" width="7" height="1.6" fill="#000" shape-rendering="auto"/><rect x="774" y="503.5" width="7" height="1.6" fill="#000" shape-rendering="auto"/><rect x="786" y="503.5" width="7" height="1.6" fill="#000" shape-rendering="auto"/><rect x="798" y="503.5" width="7" height="1.6" fill="#000" shape-rendering="auto"/><rect x="810" y="503.5" width="7" height="1.6" fill="#000" shape-rendering="auto"/><rect x="822" y="503.5" width="7" height="1.6" fill="#000" shape-rendering="auto"/><rect x="771" y="518" width="61" height="46" fill="#ffffff"/><rect x="771" y="518" width="61" height="10" fill="#fcdcc8"/><rect x="771" y="527" width="61" height="10" fill="#f8c0a0"/><rect x="771" y="536" width="61" height="10" fill="#fcdcc8"/><rect x="771" y="545" width="61" height="10" fill="#f8c0a0"/><rect x="771" y="554" width="61" height="10" fill="#fcdcc8"/><rect x="771" y="527" width="61" height="1" fill="#f8c0a0"/><rect x="771" y="536" width="61" height="1" fill="#f8c0a0"/><rect x="771" y="545" width="61" height="1" fill="#f8c0a0"/><rect x="771" y="554" width="61" height="1" fill="#f8c0a0"/><rect x="783" y="518" width="1" height="46" fill="#f8c0a0"/><rect x="795" y="518" width="1" height="46" fill="#f8c0a0"/><rect x="807" y="518" width="1" height="46" fill="#f8c0a0"/><rect x="819" y="518" width="1" height="46" fill="#f8c0a0"/><rect x="771" y="518" width="61" height="1" fill="#f8c0a0"/><rect x="771" y="563" width="61" height="1" fill="#f8c0a0"/><rect x="771" y="518" width="1" height="46" fill="#f8c0a0"/><rect x="831" y="518" width="1" height="46" fill="#f8c0a0"/><rect x="774" y="521.5" width="7" height="1.6" fill="#000" shape-rendering="auto"/><rect x="786" y="521.5" width="7" height="1.6" fill="#000" shape-rendering="auto"/><rect x="798" y="521.5" width="7" height="1.6" fill="#000" shape-rendering="auto"/><rect x="810" y="521.5" width="7" height="1.6" fill="#000" shape-rendering="auto"/><rect x="822" y="521.5" width="7" height="1.6" fill="#000" shape-rendering="auto"/><rect x="774" y="530.5" width="7" height="1.6" fill="#000" shape-rendering="auto"/><rect x="786" y="530.5" width="7" height="1.6" fill="#000" shape-rendering="auto"/><rect x="798" y="530.5" width="7" height="1.6" fill="#000" shape-rendering="auto"/><rect x="810" y="530.5" width="7" height="1.6" fill="#000" shape-rendering="auto"/><rect x="822" y="530.5" width="7" height="1.6" fill="#000" shape-rendering="auto"/><rect x="774" y="539.5" width="7" height="1.6" fill="#000" shape-rendering="auto"/><rect x="786" y="539.5" width="7" height="1.6" fill="#000" shape-rendering="auto"/><rect x="798" y="539.5" width="7" height="1.6" fill="#000" shape-rendering="auto"/><rect x="810" y="539.5" width="7" height="1.6" fill="#000" shape-rendering="auto"/><rect x="822" y="539.5" width="7" height="1.6" fill="#000" shape-rendering="auto"/><rect x="774" y="548.5" width="7" height="1.6" fill="#000" shape-rendering="auto"/><rect x="786" y="548.5" width="7" height="1.6" fill="#000" shape-rendering="auto"/><rect x="798" y="548.5" width="7" height="1.6" fill="#000" shape-rendering="auto"/><rect x="810" y="548.5" width="7" height="1.6" fill="#000" shape-rendering="auto"/><rect x="822" y="548.5" width="7" height="1.6" fill="#000" shape-rendering="auto"/><rect x="774" y="557.5" width="7" height="1.6" fill="#000" shape-rendering="auto"/><rect x="786" y="557.5" width="7" height="1.6" fill="#000" shape-rendering="auto"/><rect x="798" y="557.5" width="7" height="1.6" fill="#000" shape-rendering="auto"/><rect x="810" y="557.5" width="7" height="1.6" fill="#000" shape-rendering="auto"/><rect x="822" y="557.5" width="7" height="1.6" fill="#000" shape-rendering="auto"/><rect x="771" y="590" width="61" height="46" fill="#ffffff"/><rect x="771" y="590" width="61" height="10" fill="#000"/><rect x="771" y="599" width="61" height="10" fill="#c6500f"/><rect x="771" y="608" width="61" height="10" fill="#ec6a1e"/><rect x="771" y="617" width="61" height="10" fill="#c6500f"/><rect x="771" y="626" width="61" height="10" fill="#ec6a1e"/><rect x="771" y="599" width="61" height="1" fill="#ffffff"/><rect x="774" y="593.5" width="7" height="1.6" fill="#ffffff" shape-rendering="auto"/><rect x="786" y="593.5" width="7" height="1.6" fill="#ffffff" shape-rendering="auto"/><rect x="798" y="593.5" width="7" height="1.6" fill="#ffffff" shape-rendering="auto"/><rect x="810" y="593.5" width="7" height="1.6" fill="#ffffff" shape-rendering="auto"/><rect x="822" y="593.5" width="7" height="1.6" fill="#ffffff" shape-rendering="auto"/><rect x="774" y="602.5" width="7" height="1.6" fill="#fcd8bc" shape-rendering="auto"/><rect x="786" y="602.5" width="7" height="1.6" fill="#fcd8bc" shape-rendering="auto"/><rect x="798" y="602.5" width="7" height="1.6" fill="#fcd8bc" shape-rendering="auto"/><rect x="810" y="602.5" width="7" height="1.6" fill="#fcd8bc" shape-rendering="auto"/><rect x="822" y="602.5" width="7" height="1.6" fill="#fcd8bc" shape-rendering="auto"/><rect x="774" y="611.5" width="7" height="1.6" fill="#fcd8bc" shape-rendering="auto"/><rect x="786" y="611.5" width="7" height="1.6" fill="#fcd8bc" shape-rendering="auto"/><rect x="798" y="611.5" width="7" height="1.6" fill="#fcd8bc" shape-rendering="auto"/><rect x="810" y="611.5" width="7" height="1.6" fill="#fcd8bc" shape-rendering="auto"/><rect x="822" y="611.5" width="7" height="1.6" fill="#fcd8bc" shape-rendering="auto"/><rect x="774" y="620.5" width="7" height="1.6" fill="#fcd8bc" shape-rendering="auto"/><rect x="786" y="620.5" width="7" height="1.6" fill="#fcd8bc" shape-rendering="auto"/><rect x="798" y="620.5" width="7" height="1.6" fill="#fcd8bc" shape-rendering="auto"/><rect x="810" y="620.5" width="7" height="1.6" fill="#fcd8bc" shape-rendering="auto"/><rect x="822" y="620.5" width="7" height="1.6" fill="#fcd8bc" shape-rendering="auto"/><rect x="774" y="629.5" width="7" height="1.6" fill="#fcd8bc" shape-rendering="auto"/><rect x="786" y="629.5" width="7" height="1.6" fill="#fcd8bc" shape-rendering="auto"/><rect x="798" y="629.5" width="7" height="1.6" fill="#fcd8bc" shape-rendering="auto"/><rect x="810" y="629.5" width="7" height="1.6" fill="#fcd8bc" shape-rendering="auto"/><rect x="822" y="629.5" width="7" height="1.6" fill="#fcd8bc" shape-rendering="auto"/><rect x="840" y="176" width="61" height="46" fill="#ffffff"/><rect x="840" y="185" width="61" height="10" fill="#cdebf8"/><rect x="840" y="203" width="61" height="10" fill="#cdebf8"/><rect x="840" y="176" width="61" height="1" fill="#1b9ad6"/><rect x="840" y="185" width="61" height="1" fill="#1b9ad6"/><rect x="840" y="221" width="61" height="1" fill="#1b9ad6"/><rect x="843" y="179.5" width="7" height="1.6" fill="#1a78a8" shape-rendering="auto"/><rect x="855" y="179.5" width="7" height="1.6" fill="#1a78a8" shape-rendering="auto"/><rect x="867" y="179.5" width="7" height="1.6" fill="#1a78a8" shape-rendering="auto"/><rect x="879" y="179.5" width="7" height="1.6" fill="#1a78a8" shape-rendering="auto"/><rect x="891" y="179.5" width="7" height="1.6" fill="#1a78a8" shape-rendering="auto"/><rect x="843" y="188.5" width="7" height="1.6" fill="#1a78a8" shape-rendering="auto"/><rect x="855" y="188.5" width="7" height="1.6" fill="#1a78a8" shape-rendering="auto"/><rect x="867" y="188.5" width="7" height="1.6" fill="#1a78a8" shape-rendering="auto"/><rect x="879" y="188.5" width="7" height="1.6" fill="#1a78a8" shape-rendering="auto"/><rect x="891" y="188.5" width="7" height="1.6" fill="#1a78a8" shape-rendering="auto"/><rect x="843" y="197.5" width="7" height="1.6" fill="#1a78a8" shape-rendering="auto"/><rect x="855" y="197.5" width="7" height="1.6" fill="#1a78a8" shape-rendering="auto"/><rect x="867" y="197.5" width="7" height="1.6" fill="#1a78a8" shape-rendering="auto"/><rect x="879" y="197.5" width="7" height="1.6" fill="#1a78a8" shape-rendering="auto"/><rect x="891" y="197.5" width="7" height="1.6" fill="#1a78a8" shape-rendering="auto"/><rect x="843" y="206.5" width="7" height="1.6" fill="#1a78a8" shape-rendering="auto"/><rect x="855" y="206.5" width="7" height="1.6" fill="#1a78a8" shape-rendering="auto"/><rect x="867" y="206.5" width="7" height="1.6" fill="#1a78a8" shape-rendering="auto"/><rect x="879" y="206.5" width="7" height="1.6" fill="#1a78a8" shape-rendering="auto"/><rect x="891" y="206.5" width="7" height="1.6" fill="#1a78a8" shape-rendering="auto"/><rect x="843" y="215.5" width="7" height="1.6" fill="#1a78a8" shape-rendering="auto"/><rect x="855" y="215.5" width="7" height="1.6" fill="#1a78a8" shape-rendering="auto"/><rect x="867" y="215.5" width="7" height="1.6" fill="#1a78a8" shape-rendering="auto"/><rect x="879" y="215.5" width="7" height="1.6" fill="#1a78a8" shape-rendering="auto"/><rect x="891" y="215.5" width="7" height="1.6" fill="#1a78a8" shape-rendering="auto"/><rect x="840" y="230" width="61" height="46" fill="#ffffff"/><rect x="840" y="230" width="61" height="10" fill="#1b9ad6"/><rect x="840" y="248" width="61" height="1" fill="#2ea4da"/><rect x="840" y="257" width="61" height="1" fill="#2ea4da"/><rect x="840" y="266" width="61" height="1" fill="#2ea4da"/><rect x="840" y="230" width="61" height="1" fill="#1b9ad6"/><rect x="840" y="275" width="61" height="1" fill="#1b9ad6"/><rect x="840" y="230" width="1" height="46" fill="#1b9ad6"/><rect x="900" y="230" width="1" height="46" fill="#1b9ad6"/><rect x="843" y="233.5" width="7" height="1.6" fill="#ffffff" shape-rendering="auto"/><rect x="855" y="233.5" width="7" height="1.6" fill="#ffffff" shape-rendering="auto"/><rect x="867" y="233.5" width="7" height="1.6" fill="#ffffff" shape-rendering="auto"/><rect x="879" y="233.5" width="7" height="1.6" fill="#ffffff" shape-rendering="auto"/><rect x="891" y="233.5" width="7" height="1.6" fill="#ffffff" shape-rendering="auto"/><rect x="843" y="242.5" width="7" height="1.6" fill="#000" shape-rendering="auto"/><rect x="855" y="242.5" width="7" height="1.6" fill="#000" shape-rendering="auto"/><rect x="867" y="242.5" width="7" height="1.6" fill="#000" shape-rendering="auto"/><rect x="879" y="242.5" width="7" height="1.6" fill="#000" shape-rendering="auto"/><rect x="891" y="242.5" width="7" height="1.6" fill="#000" shape-rendering="auto"/><rect x="843" y="251.5" width="7" height="1.6" fill="#000" shape-rendering="auto"/><rect x="855" y="251.5" width="7" height="1.6" fill="#000" shape-rendering="auto"/><rect x="867" y="251.5" width="7" height="1.6" fill="#000" shape-rendering="auto"/><rect x="879" y="251.5" width="7" height="1.6" fill="#000" shape-rendering="auto"/><rect x="891" y="251.5" width="7" height="1.6" fill="#000" shape-rendering="auto"/><rect x="843" y="260.5" width="7" height="1.6" fill="#000" shape-rendering="auto"/><rect x="855" y="260.5" width="7" height="1.6" fill="#000" shape-rendering="auto"/><rect x="867" y="260.5" width="7" height="1.6" fill="#000" shape-rendering="auto"/><rect x="879" y="260.5" width="7" height="1.6" fill="#000" shape-rendering="auto"/><rect x="891" y="260.5" width="7" height="1.6" fill="#000" shape-rendering="auto"/><rect x="843" y="269.5" width="7" height="1.6" fill="#000" shape-rendering="auto"/><rect x="855" y="269.5" width="7" height="1.6" fill="#000" shape-rendering="auto"/><rect x="867" y="269.5" width="7" height="1.6" fill="#000" shape-rendering="auto"/><rect x="879" y="269.5" width="7" height="1.6" fill="#000" shape-rendering="auto"/><rect x="891" y="269.5" width="7" height="1.6" fill="#000" shape-rendering="auto"/><rect x="840" y="284" width="61" height="46" fill="#ffffff"/><rect x="840" y="293" width="61" height="10" fill="#cdebf8"/><rect x="840" y="311" width="61" height="10" fill="#cdebf8"/><rect x="840" y="293" width="61" height="1" fill="#2ea4da"/><rect x="840" y="302" width="61" height="1" fill="#2ea4da"/><rect x="840" y="311" width="61" height="1" fill="#2ea4da"/><rect x="840" y="320" width="61" height="1" fill="#2ea4da"/><rect x="852" y="284" width="1" height="46" fill="#2ea4da"/><rect x="864" y="284" width="1" height="46" fill="#2ea4da"/><rect x="876" y="284" width="1" height="46" fill="#2ea4da"/><rect x="888" y="284" width="1" height="46" fill="#2ea4da"/><rect x="840" y="284" width="61" height="1" fill="#1b9ad6"/><rect x="840" y="329" width="61" height="1" fill="#1b9ad6"/><rect x="840" y="284" width="1" height="46" fill="#1b9ad6"/><rect x="900" y="284" width="1" height="46" fill="#1b9ad6"/><rect x="843" y="287.5" width="7" height="1.6" fill="#000" shape-rendering="auto"/><rect x="855" y="287.5" width="7" height="1.6" fill="#000" shape-rendering="auto"/><rect x="867" y="287.5" width="7" height="1.6" fill="#000" shape-rendering="auto"/><rect x="879" y="287.5" width="7" height="1.6" fill="#000" shape-rendering="auto"/><rect x="891" y="287.5" width="7" height="1.6" fill="#000" shape-rendering="auto"/><rect x="843" y="296.5" width="7" height="1.6" fill="#000" shape-rendering="auto"/><rect x="855" y="296.5" width="7" height="1.6" fill="#000" shape-rendering="auto"/><rect x="867" y="296.5" width="7" height="1.6" fill="#000" shape-rendering="auto"/><rect x="879" y="296.5" width="7" height="1.6" fill="#000" shape-rendering="auto"/><rect x="891" y="296.5" width="7" height="1.6" fill="#000" shape-rendering="auto"/><rect x="843" y="305.5" width="7" height="1.6" fill="#000" shape-rendering="auto"/><rect x="855" y="305.5" width="7" height="1.6" fill="#000" shape-rendering="auto"/><rect x="867" y="305.5" width="7" height="1.6" fill="#000" shape-rendering="auto"/><rect x="879" y="305.5" width="7" height="1.6" fill="#000" shape-rendering="auto"/><rect x="891" y="305.5" width="7" height="1.6" fill="#000" shape-rendering="auto"/><rect x="843" y="314.5" width="7" height="1.6" fill="#000" shape-rendering="auto"/><rect x="855" y="314.5" width="7" height="1.6" fill="#000" shape-rendering="auto"/><rect x="867" y="314.5" width="7" height="1.6" fill="#000" shape-rendering="auto"/><rect x="879" y="314.5" width="7" height="1.6" fill="#000" shape-rendering="auto"/><rect x="891" y="314.5" width="7" height="1.6" fill="#000" shape-rendering="auto"/><rect x="843" y="323.5" width="7" height="1.6" fill="#000" shape-rendering="auto"/><rect x="855" y="323.5" width="7" height="1.6" fill="#000" shape-rendering="auto"/><rect x="867" y="323.5" width="7" height="1.6" fill="#000" shape-rendering="auto"/><rect x="879" y="323.5" width="7" height="1.6" fill="#000" shape-rendering="auto"/><rect x="891" y="323.5" width="7" height="1.6" fill="#000" shape-rendering="auto"/><rect x="840" y="356" width="61" height="46" fill="#ffffff"/><rect x="840" y="356" width="61" height="10" fill="#1b9ad6"/><rect x="840" y="365" width="61" height="10" fill="#cdebf8"/><rect x="840" y="383" width="61" height="10" fill="#cdebf8"/><rect x="840" y="374" width="61" height="1" fill="#a5d8f1"/><rect x="840" y="383" width="61" height="1" fill="#a5d8f1"/><rect x="840" y="392" width="61" height="1" fill="#a5d8f1"/><rect x="840" y="356" width="61" height="1" fill="#1b9ad6"/><rect x="840" y="401" width="61" height="1" fill="#1b9ad6"/><rect x="840" y="356" width="1" height="46" fill="#1b9ad6"/><rect x="900" y="356" width="1" height="46" fill="#1b9ad6"/><rect x="843" y="359.5" width="7" height="1.6" fill="#ffffff" shape-rendering="auto"/><rect x="855" y="359.5" width="7" height="1.6" fill="#ffffff" shape-rendering="auto"/><rect x="867" y="359.5" width="7" height="1.6" fill="#ffffff" shape-rendering="auto"/><rect x="879" y="359.5" width="7" height="1.6" fill="#ffffff" shape-rendering="auto"/><rect x="891" y="359.5" width="7" height="1.6" fill="#ffffff" shape-rendering="auto"/><rect x="843" y="368.5" width="7" height="1.6" fill="#000" shape-rendering="auto"/><rect x="855" y="368.5" width="7" height="1.6" fill="#000" shape-rendering="auto"/><rect x="867" y="368.5" width="7" height="1.6" fill="#000" shape-rendering="auto"/><rect x="879" y="368.5" width="7" height="1.6" fill="#000" shape-rendering="auto"/><rect x="891" y="368.5" width="7" height="1.6" fill="#000" shape-rendering="auto"/><rect x="843" y="377.5" width="7" height="1.6" fill="#000" shape-rendering="auto"/><rect x="855" y="377.5" width="7" height="1.6" fill="#000" shape-rendering="auto"/><rect x="867" y="377.5" width="7" height="1.6" fill="#000" shape-rendering="auto"/><rect x="879" y="377.5" width="7" height="1.6" fill="#000" shape-rendering="auto"/><rect x="891" y="377.5" width="7" height="1.6" fill="#000" shape-rendering="auto"/><rect x="843" y="386.5" width="7" height="1.6" fill="#000" shape-rendering="auto"/><rect x="855" y="386.5" width="7" height="1.6" fill="#000" shape-rendering="auto"/><rect x="867" y="386.5" width="7" height="1.6" fill="#000" shape-rendering="auto"/><rect x="879" y="386.5" width="7" height="1.6" fill="#000" shape-rendering="auto"/><rect x="891" y="386.5" width="7" height="1.6" fill="#000" shape-rendering="auto"/><rect x="843" y="395.5" width="7" height="1.6" fill="#000" shape-rendering="auto"/><rect x="855" y="395.5" width="7" height="1.6" fill="#000" shape-rendering="auto"/><rect x="867" y="395.5" width="7" height="1.6" fill="#000" shape-rendering="auto"/><rect x="879" y="395.5" width="7" height="1.6" fill="#000" shape-rendering="auto"/><rect x="891" y="395.5" width="7" height="1.6" fill="#000" shape-rendering="auto"/><rect x="840" y="410" width="61" height="46" fill="#ffffff"/><rect x="840" y="410" width="61" height="10" fill="#1b9ad6"/><rect x="840" y="419" width="61" height="10" fill="#a5d8f1"/><rect x="840" y="428" width="61" height="10" fill="#cdebf8"/><rect x="840" y="437" width="61" height="10" fill="#a5d8f1"/><rect x="840" y="446" width="61" height="10" fill="#cdebf8"/><rect x="852" y="410" width="1" height="46" fill="#ffffff"/><rect x="864" y="410" width="1" height="46" fill="#ffffff"/><rect x="876" y="410" width="1" height="46" fill="#ffffff"/><rect x="888" y="410" width="1" height="46" fill="#ffffff"/><rect x="840" y="419" width="61" height="1" fill="#ffffff"/><rect x="840" y="428" width="61" height="1" fill="#ffffff"/><rect x="840" y="437" width="61" height="1" fill="#ffffff"/><rect x="840" y="446" width="61" height="1" fill="#ffffff"/><rect x="843" y="413.5" width="7" height="1.6" fill="#ffffff" shape-rendering="auto"/><rect x="855" y="413.5" width="7" height="1.6" fill="#ffffff" shape-rendering="auto"/><rect x="867" y="413.5" width="7" height="1.6" fill="#ffffff" shape-rendering="auto"/><rect x="879" y="413.5" width="7" height="1.6" fill="#ffffff" shape-rendering="auto"/><rect x="891" y="413.5" width="7" height="1.6" fill="#ffffff" shape-rendering="auto"/><rect x="843" y="422.5" width="7" height="1.6" fill="#000" shape-rendering="auto"/><rect x="855" y="422.5" width="7" height="1.6" fill="#000" shape-rendering="auto"/><rect x="867" y="422.5" width="7" height="1.6" fill="#000" shape-rendering="auto"/><rect x="879" y="422.5" width="7" height="1.6" fill="#000" shape-rendering="auto"/><rect x="891" y="422.5" width="7" height="1.6" fill="#000" shape-rendering="auto"/><rect x="843" y="431.5" width="7" height="1.6" fill="#000" shape-rendering="auto"/><rect x="855" y="431.5" width="7" height="1.6" fill="#000" shape-rendering="auto"/><rect x="867" y="431.5" width="7" height="1.6" fill="#000" shape-rendering="auto"/><rect x="879" y="431.5" width="7" height="1.6" fill="#000" shape-rendering="auto"/><rect x="891" y="431.5" width="7" height="1.6" fill="#000" shape-rendering="auto"/><rect x="843" y="440.5" width="7" height="1.6" fill="#000" shape-rendering="auto"/><rect x="855" y="440.5" width="7" height="1.6" fill="#000" shape-rendering="auto"/><rect x="867" y="440.5" width="7" height="1.6" fill="#000" shape-rendering="auto"/><rect x="879" y="440.5" width="7" height="1.6" fill="#000" shape-rendering="auto"/><rect x="891" y="440.5" width="7" height="1.6" fill="#000" shape-rendering="auto"/><rect x="843" y="449.5" width="7" height="1.6" fill="#000" shape-rendering="auto"/><rect x="855" y="449.5" width="7" height="1.6" fill="#000" shape-rendering="auto"/><rect x="867" y="449.5" width="7" height="1.6" fill="#000" shape-rendering="auto"/><rect x="879" y="449.5" width="7" height="1.6" fill="#000" shape-rendering="auto"/><rect x="891" y="449.5" width="7" height="1.6" fill="#000" shape-rendering="auto"/><rect x="840" y="464" width="61" height="46" fill="#ffffff"/><rect x="840" y="464" width="61" height="10" fill="#1b9ad6"/><rect x="840" y="473" width="61" height="10" fill="#d9d9d9"/><rect x="840" y="491" width="61" height="10" fill="#d9d9d9"/><rect x="840" y="473" width="61" height="1" fill="#000"/><rect x="840" y="509" width="61" height="1" fill="#000"/><rect x="843" y="467.5" width="7" height="1.6" fill="#ffffff" shape-rendering="auto"/><rect x="855" y="467.5" width="7" height="1.6" fill="#ffffff" shape-rendering="auto"/><rect x="867" y="467.5" width="7" height="1.6" fill="#ffffff" shape-rendering="auto"/><rect x="879" y="467.5" width="7" height="1.6" fill="#ffffff" shape-rendering="auto"/><rect x="891" y="467.5" width="7" height="1.6" fill="#ffffff" shape-rendering="auto"/><rect x="843" y="476.5" width="7" height="1.6" fill="#000" shape-rendering="auto"/><rect x="855" y="476.5" width="7" height="1.6" fill="#000" shape-rendering="auto"/><rect x="867" y="476.5" width="7" height="1.6" fill="#000" shape-rendering="auto"/><rect x="879" y="476.5" width="7" height="1.6" fill="#000" shape-rendering="auto"/><rect x="891" y="476.5" width="7" height="1.6" fill="#000" shape-rendering="auto"/><rect x="843" y="485.5" width="7" height="1.6" fill="#000" shape-rendering="auto"/><rect x="855" y="485.5" width="7" height="1.6" fill="#000" shape-rendering="auto"/><rect x="867" y="485.5" width="7" height="1.6" fill="#000" shape-rendering="auto"/><rect x="879" y="485.5" width="7" height="1.6" fill="#000" shape-rendering="auto"/><rect x="891" y="485.5" width="7" height="1.6" fill="#000" shape-rendering="auto"/><rect x="843" y="494.5" width="7" height="1.6" fill="#000" shape-rendering="auto"/><rect x="855" y="494.5" width="7" height="1.6" fill="#000" shape-rendering="auto"/><rect x="867" y="494.5" width="7" height="1.6" fill="#000" shape-rendering="auto"/><rect x="879" y="494.5" width="7" height="1.6" fill="#000" shape-rendering="auto"/><rect x="891" y="494.5" width="7" height="1.6" fill="#000" shape-rendering="auto"/><rect x="843" y="503.5" width="7" height="1.6" fill="#000" shape-rendering="auto"/><rect x="855" y="503.5" width="7" height="1.6" fill="#000" shape-rendering="auto"/><rect x="867" y="503.5" width="7" height="1.6" fill="#000" shape-rendering="auto"/><rect x="879" y="503.5" width="7" height="1.6" fill="#000" shape-rendering="auto"/><rect x="891" y="503.5" width="7" height="1.6" fill="#000" shape-rendering="auto"/><rect x="840" y="518" width="61" height="46" fill="#ffffff"/><rect x="840" y="518" width="61" height="10" fill="#cdebf8"/><rect x="840" y="527" width="61" height="10" fill="#a5d8f1"/><rect x="840" y="536" width="61" height="10" fill="#cdebf8"/><rect x="840" y="545" width="61" height="10" fill="#a5d8f1"/><rect x="840" y="554" width="61" height="10" fill="#cdebf8"/><rect x="840" y="527" width="61" height="1" fill="#a5d8f1"/><rect x="840" y="536" width="61" height="1" fill="#a5d8f1"/><rect x="840" y="545" width="61" height="1" fill="#a5d8f1"/><rect x="840" y="554" width="61" height="1" fill="#a5d8f1"/><rect x="852" y="518" width="1" height="46" fill="#a5d8f1"/><rect x="864" y="518" width="1" height="46" fill="#a5d8f1"/><rect x="876" y="518" width="1" height="46" fill="#a5d8f1"/><rect x="888" y="518" width="1" height="46" fill="#a5d8f1"/><rect x="840" y="518" width="61" height="1" fill="#a5d8f1"/><rect x="840" y="563" width="61" height="1" fill="#a5d8f1"/><rect x="840" y="518" width="1" height="46" fill="#a5d8f1"/><rect x="900" y="518" width="1" height="46" fill="#a5d8f1"/><rect x="843" y="521.5" width="7" height="1.6" fill="#000" shape-rendering="auto"/><rect x="855" y="521.5" width="7" height="1.6" fill="#000" shape-rendering="auto"/><rect x="867" y="521.5" width="7" height="1.6" fill="#000" shape-rendering="auto"/><rect x="879" y="521.5" width="7" height="1.6" fill="#000" shape-rendering="auto"/><rect x="891" y="521.5" width="7" height="1.6" fill="#000" shape-rendering="auto"/><rect x="843" y="530.5" width="7" height="1.6" fill="#000" shape-rendering="auto"/><rect x="855" y="530.5" width="7" height="1.6" fill="#000" shape-rendering="auto"/><rect x="867" y="530.5" width="7" height="1.6" fill="#000" shape-rendering="auto"/><rect x="879" y="530.5" width="7" height="1.6" fill="#000" shape-rendering="auto"/><rect x="891" y="530.5" width="7" height="1.6" fill="#000" shape-rendering="auto"/><rect x="843" y="539.5" width="7" height="1.6" fill="#000" shape-rendering="auto"/><rect x="855" y="539.5" width="7" height="1.6" fill="#000" shape-rendering="auto"/><rect x="867" y="539.5" width="7" height="1.6" fill="#000" shape-rendering="auto"/><rect x="879" y="539.5" width="7" height="1.6" fill="#000" shape-rendering="auto"/><rect x="891" y="539.5" width="7" height="1.6" fill="#000" shape-rendering="auto"/><rect x="843" y="548.5" width="7" height="1.6" fill="#000" shape-rendering="auto"/><rect x="855" y="548.5" width="7" height="1.6" fill="#000" shape-rendering="auto"/><rect x="867" y="548.5" width="7" height="1.6" fill="#000" shape-rendering="auto"/><rect x="879" y="548.5" width="7" height="1.6" fill="#000" shape-rendering="auto"/><rect x="891" y="548.5" width="7" height="1.6" fill="#000" shape-rendering="auto"/><rect x="843" y="557.5" width="7" height="1.6" fill="#000" shape-rendering="auto"/><rect x="855" y="557.5" width="7" height="1.6" fill="#000" shape-rendering="auto"/><rect x="867" y="557.5" width="7" height="1.6" fill="#000" shape-rendering="auto"/><rect x="879" y="557.5" width="7" height="1.6" fill="#000" shape-rendering="auto"/><rect x="891" y="557.5" width="7" height="1.6" fill="#000" shape-rendering="auto"/><rect x="840" y="590" width="61" height="46" fill="#ffffff"/><rect x="840" y="590" width="61" height="10" fill="#000"/><rect x="840" y="599" width="61" height="10" fill="#127aae"/><rect x="840" y="608" width="61" height="10" fill="#1b9ad6"/><rect x="840" y="617" width="61" height="10" fill="#127aae"/><rect x="840" y="626" width="61" height="10" fill="#1b9ad6"/><rect x="840" y="599" width="61" height="1" fill="#ffffff"/><rect x="843" y="593.5" width="7" height="1.6" fill="#ffffff" shape-rendering="auto"/><rect x="855" y="593.5" width="7" height="1.6" fill="#ffffff" shape-rendering="auto"/><rect x="867" y="593.5" width="7" height="1.6" fill="#ffffff" shape-rendering="auto"/><rect x="879" y="593.5" width="7" height="1.6" fill="#ffffff" shape-rendering="auto"/><rect x="891" y="593.5" width="7" height="1.6" fill="#ffffff" shape-rendering="auto"/><rect x="843" y="602.5" width="7" height="1.6" fill="#cdeefb" shape-rendering="auto"/><rect x="855" y="602.5" width="7" height="1.6" fill="#cdeefb" shape-rendering="auto"/><rect x="867" y="602.5" width="7" height="1.6" fill="#cdeefb" shape-rendering="auto"/><rect x="879" y="602.5" width="7" height="1.6" fill="#cdeefb" shape-rendering="auto"/><rect x="891" y="602.5" width="7" height="1.6" fill="#cdeefb" shape-rendering="auto"/><rect x="843" y="611.5" width="7" height="1.6" fill="#cdeefb" shape-rendering="auto"/><rect x="855" y="611.5" width="7" height="1.6" fill="#cdeefb" shape-rendering="auto"/><rect x="867" y="611.5" width="7" height="1.6" fill="#cdeefb" shape-rendering="auto"/><rect x="879" y="611.5" width="7" height="1.6" fill="#cdeefb" shape-rendering="auto"/><rect x="891" y="611.5" width="7" height="1.6" fill="#cdeefb" shape-rendering="auto"/><rect x="843" y="620.5" width="7" height="1.6" fill="#cdeefb" shape-rendering="auto"/><rect x="855" y="620.5" width="7" height="1.6" fill="#cdeefb" shape-rendering="auto"/><rect x="867" y="620.5" width="7" height="1.6" fill="#cdeefb" shape-rendering="auto"/><rect x="879" y="620.5" width="7" height="1.6" fill="#cdeefb" shape-rendering="auto"/><rect x="891" y="620.5" width="7" height="1.6" fill="#cdeefb" shape-rendering="auto"/><rect x="843" y="629.5" width="7" height="1.6" fill="#cdeefb" shape-rendering="auto"/><rect x="855" y="629.5" width="7" height="1.6" fill="#cdeefb" shape-rendering="auto"/><rect x="867" y="629.5" width="7" height="1.6" fill="#cdeefb" shape-rendering="auto"/><rect x="879" y="629.5" width="7" height="1.6" fill="#cdeefb" shape-rendering="auto"/><rect x="891" y="629.5" width="7" height="1.6" fill="#cdeefb" shape-rendering="auto"/><rect x="909" y="176" width="61" height="46" fill="#ffffff"/><rect x="909" y="185" width="61" height="10" fill="#e2e8d5"/><rect x="909" y="203" width="61" height="10" fill="#e2e8d5"/><rect x="909" y="176" width="61" height="1" fill="#6e8d3c"/><rect x="909" y="185" width="61" height="1" fill="#6e8d3c"/><rect x="909" y="221" width="61" height="1" fill="#6e8d3c"/><rect x="912" y="179.5" width="7" height="1.6" fill="#5a7232" shape-rendering="auto"/><rect x="924" y="179.5" width="7" height="1.6" fill="#5a7232" shape-rendering="auto"/><rect x="936" y="179.5" width="7" height="1.6" fill="#5a7232" shape-rendering="auto"/><rect x="948" y="179.5" width="7" height="1.6" fill="#5a7232" shape-rendering="auto"/><rect x="960" y="179.5" width="7" height="1.6" fill="#5a7232" shape-rendering="auto"/><rect x="912" y="188.5" width="7" height="1.6" fill="#5a7232" shape-rendering="auto"/><rect x="924" y="188.5" width="7" height="1.6" fill="#5a7232" shape-rendering="auto"/><rect x="936" y="188.5" width="7" height="1.6" fill="#5a7232" shape-rendering="auto"/><rect x="948" y="188.5" width="7" height="1.6" fill="#5a7232" shape-rendering="auto"/><rect x="960" y="188.5" width="7" height="1.6" fill="#5a7232" shape-rendering="auto"/><rect x="912" y="197.5" width="7" height="1.6" fill="#5a7232" shape-rendering="auto"/><rect x="924" y="197.5" width="7" height="1.6" fill="#5a7232" shape-rendering="auto"/><rect x="936" y="197.5" width="7" height="1.6" fill="#5a7232" shape-rendering="auto"/><rect x="948" y="197.5" width="7" height="1.6" fill="#5a7232" shape-rendering="auto"/><rect x="960" y="197.5" width="7" height="1.6" fill="#5a7232" shape-rendering="auto"/><rect x="912" y="206.5" width="7" height="1.6" fill="#5a7232" shape-rendering="auto"/><rect x="924" y="206.5" width="7" height="1.6" fill="#5a7232" shape-rendering="auto"/><rect x="936" y="206.5" width="7" height="1.6" fill="#5a7232" shape-rendering="auto"/><rect x="948" y="206.5" width="7" height="1.6" fill="#5a7232" shape-rendering="auto"/><rect x="960" y="206.5" width="7" height="1.6" fill="#5a7232" shape-rendering="auto"/><rect x="912" y="215.5" width="7" height="1.6" fill="#5a7232" shape-rendering="auto"/><rect x="924" y="215.5" width="7" height="1.6" fill="#5a7232" shape-rendering="auto"/><rect x="936" y="215.5" width="7" height="1.6" fill="#5a7232" shape-rendering="auto"/><rect x="948" y="215.5" width="7" height="1.6" fill="#5a7232" shape-rendering="auto"/><rect x="960" y="215.5" width="7" height="1.6" fill="#5a7232" shape-rendering="auto"/><rect x="909" y="230" width="61" height="46" fill="#ffffff"/><rect x="909" y="230" width="61" height="10" fill="#6e8d3c"/><rect x="909" y="248" width="61" height="1" fill="#7d9a4c"/><rect x="909" y="257" width="61" height="1" fill="#7d9a4c"/><rect x="909" y="266" width="61" height="1" fill="#7d9a4c"/><rect x="909" y="230" width="61" height="1" fill="#6e8d3c"/><rect x="909" y="275" width="61" height="1" fill="#6e8d3c"/><rect x="909" y="230" width="1" height="46" fill="#6e8d3c"/><rect x="969" y="230" width="1" height="46" fill="#6e8d3c"/><rect x="912" y="233.5" width="7" height="1.6" fill="#ffffff" shape-rendering="auto"/><rect x="924" y="233.5" width="7" height="1.6" fill="#ffffff" shape-rendering="auto"/><rect x="936" y="233.5" width="7" height="1.6" fill="#ffffff" shape-rendering="auto"/><rect x="948" y="233.5" width="7" height="1.6" fill="#ffffff" shape-rendering="auto"/><rect x="960" y="233.5" width="7" height="1.6" fill="#ffffff" shape-rendering="auto"/><rect x="912" y="242.5" width="7" height="1.6" fill="#000" shape-rendering="auto"/><rect x="924" y="242.5" width="7" height="1.6" fill="#000" shape-rendering="auto"/><rect x="936" y="242.5" width="7" height="1.6" fill="#000" shape-rendering="auto"/><rect x="948" y="242.5" width="7" height="1.6" fill="#000" shape-rendering="auto"/><rect x="960" y="242.5" width="7" height="1.6" fill="#000" shape-rendering="auto"/><rect x="912" y="251.5" width="7" height="1.6" fill="#000" shape-rendering="auto"/><rect x="924" y="251.5" width="7" height="1.6" fill="#000" shape-rendering="auto"/><rect x="936" y="251.5" width="7" height="1.6" fill="#000" shape-rendering="auto"/><rect x="948" y="251.5" width="7" height="1.6" fill="#000" shape-rendering="auto"/><rect x="960" y="251.5" width="7" height="1.6" fill="#000" shape-rendering="auto"/><rect x="912" y="260.5" width="7" height="1.6" fill="#000" shape-rendering="auto"/><rect x="924" y="260.5" width="7" height="1.6" fill="#000" shape-rendering="auto"/><rect x="936" y="260.5" width="7" height="1.6" fill="#000" shape-rendering="auto"/><rect x="948" y="260.5" width="7" height="1.6" fill="#000" shape-rendering="auto"/><rect x="960" y="260.5" width="7" height="1.6" fill="#000" shape-rendering="auto"/><rect x="912" y="269.5" width="7" height="1.6" fill="#000" shape-rendering="auto"/><rect x="924" y="269.5" width="7" height="1.6" fill="#000" shape-rendering="auto"/><rect x="936" y="269.5" width="7" height="1.6" fill="#000" shape-rendering="auto"/><rect x="948" y="269.5" width="7" height="1.6" fill="#000" shape-rendering="auto"/><rect x="960" y="269.5" width="7" height="1.6" fill="#000" shape-rendering="auto"/><rect x="909" y="284" width="61" height="46" fill="#ffffff"/><rect x="909" y="293" width="61" height="10" fill="#e2e8d5"/><rect x="909" y="311" width="61" height="10" fill="#e2e8d5"/><rect x="909" y="293" width="61" height="1" fill="#7d9a4c"/><rect x="909" y="302" width="61" height="1" fill="#7d9a4c"/><rect x="909" y="311" width="61" height="1" fill="#7d9a4c"/><rect x="909" y="320" width="61" height="1" fill="#7d9a4c"/><rect x="921" y="284" width="1" height="46" fill="#7d9a4c"/><rect x="933" y="284" width="1" height="46" fill="#7d9a4c"/><rect x="945" y="284" width="1" height="46" fill="#7d9a4c"/><rect x="957" y="284" width="1" height="46" fill="#7d9a4c"/><rect x="909" y="284" width="61" height="1" fill="#6e8d3c"/><rect x="909" y="329" width="61" height="1" fill="#6e8d3c"/><rect x="909" y="284" width="1" height="46" fill="#6e8d3c"/><rect x="969" y="284" width="1" height="46" fill="#6e8d3c"/><rect x="912" y="287.5" width="7" height="1.6" fill="#000" shape-rendering="auto"/><rect x="924" y="287.5" width="7" height="1.6" fill="#000" shape-rendering="auto"/><rect x="936" y="287.5" width="7" height="1.6" fill="#000" shape-rendering="auto"/><rect x="948" y="287.5" width="7" height="1.6" fill="#000" shape-rendering="auto"/><rect x="960" y="287.5" width="7" height="1.6" fill="#000" shape-rendering="auto"/><rect x="912" y="296.5" width="7" height="1.6" fill="#000" shape-rendering="auto"/><rect x="924" y="296.5" width="7" height="1.6" fill="#000" shape-rendering="auto"/><rect x="936" y="296.5" width="7" height="1.6" fill="#000" shape-rendering="auto"/><rect x="948" y="296.5" width="7" height="1.6" fill="#000" shape-rendering="auto"/><rect x="960" y="296.5" width="7" height="1.6" fill="#000" shape-rendering="auto"/><rect x="912" y="305.5" width="7" height="1.6" fill="#000" shape-rendering="auto"/><rect x="924" y="305.5" width="7" height="1.6" fill="#000" shape-rendering="auto"/><rect x="936" y="305.5" width="7" height="1.6" fill="#000" shape-rendering="auto"/><rect x="948" y="305.5" width="7" height="1.6" fill="#000" shape-rendering="auto"/><rect x="960" y="305.5" width="7" height="1.6" fill="#000" shape-rendering="auto"/><rect x="912" y="314.5" width="7" height="1.6" fill="#000" shape-rendering="auto"/><rect x="924" y="314.5" width="7" height="1.6" fill="#000" shape-rendering="auto"/><rect x="936" y="314.5" width="7" height="1.6" fill="#000" shape-rendering="auto"/><rect x="948" y="314.5" width="7" height="1.6" fill="#000" shape-rendering="auto"/><rect x="960" y="314.5" width="7" height="1.6" fill="#000" shape-rendering="auto"/><rect x="912" y="323.5" width="7" height="1.6" fill="#000" shape-rendering="auto"/><rect x="924" y="323.5" width="7" height="1.6" fill="#000" shape-rendering="auto"/><rect x="936" y="323.5" width="7" height="1.6" fill="#000" shape-rendering="auto"/><rect x="948" y="323.5" width="7" height="1.6" fill="#000" shape-rendering="auto"/><rect x="960" y="323.5" width="7" height="1.6" fill="#000" shape-rendering="auto"/><rect x="909" y="356" width="61" height="46" fill="#ffffff"/><rect x="909" y="356" width="61" height="10" fill="#6e8d3c"/><rect x="909" y="365" width="61" height="10" fill="#e2e8d5"/><rect x="909" y="383" width="61" height="10" fill="#e2e8d5"/><rect x="909" y="374" width="61" height="1" fill="#c7d4ad"/><rect x="909" y="383" width="61" height="1" fill="#c7d4ad"/><rect x="909" y="392" width="61" height="1" fill="#c7d4ad"/><rect x="909" y="356" width="61" height="1" fill="#6e8d3c"/><rect x="909" y="401" width="61" height="1" fill="#6e8d3c"/><rect x="909" y="356" width="1" height="46" fill="#6e8d3c"/><rect x="969" y="356" width="1" height="46" fill="#6e8d3c"/><rect x="912" y="359.5" width="7" height="1.6" fill="#ffffff" shape-rendering="auto"/><rect x="924" y="359.5" width="7" height="1.6" fill="#ffffff" shape-rendering="auto"/><rect x="936" y="359.5" width="7" height="1.6" fill="#ffffff" shape-rendering="auto"/><rect x="948" y="359.5" width="7" height="1.6" fill="#ffffff" shape-rendering="auto"/><rect x="960" y="359.5" width="7" height="1.6" fill="#ffffff" shape-rendering="auto"/><rect x="912" y="368.5" width="7" height="1.6" fill="#000" shape-rendering="auto"/><rect x="924" y="368.5" width="7" height="1.6" fill="#000" shape-rendering="auto"/><rect x="936" y="368.5" width="7" height="1.6" fill="#000" shape-rendering="auto"/><rect x="948" y="368.5" width="7" height="1.6" fill="#000" shape-rendering="auto"/><rect x="960" y="368.5" width="7" height="1.6" fill="#000" shape-rendering="auto"/><rect x="912" y="377.5" width="7" height="1.6" fill="#000" shape-rendering="auto"/><rect x="924" y="377.5" width="7" height="1.6" fill="#000" shape-rendering="auto"/><rect x="936" y="377.5" width="7" height="1.6" fill="#000" shape-rendering="auto"/><rect x="948" y="377.5" width="7" height="1.6" fill="#000" shape-rendering="auto"/><rect x="960" y="377.5" width="7" height="1.6" fill="#000" shape-rendering="auto"/><rect x="912" y="386.5" width="7" height="1.6" fill="#000" shape-rendering="auto"/><rect x="924" y="386.5" width="7" height="1.6" fill="#000" shape-rendering="auto"/><rect x="936" y="386.5" width="7" height="1.6" fill="#000" shape-rendering="auto"/><rect x="948" y="386.5" width="7" height="1.6" fill="#000" shape-rendering="auto"/><rect x="960" y="386.5" width="7" height="1.6" fill="#000" shape-rendering="auto"/><rect x="912" y="395.5" width="7" height="1.6" fill="#000" shape-rendering="auto"/><rect x="924" y="395.5" width="7" height="1.6" fill="#000" shape-rendering="auto"/><rect x="936" y="395.5" width="7" height="1.6" fill="#000" shape-rendering="auto"/><rect x="948" y="395.5" width="7" height="1.6" fill="#000" shape-rendering="auto"/><rect x="960" y="395.5" width="7" height="1.6" fill="#000" shape-rendering="auto"/><rect x="909" y="410" width="61" height="46" fill="#ffffff"/><rect x="909" y="410" width="61" height="10" fill="#6e8d3c"/><rect x="909" y="419" width="61" height="10" fill="#c7d4ad"/><rect x="909" y="428" width="61" height="10" fill="#e2e8d5"/><rect x="909" y="437" width="61" height="10" fill="#c7d4ad"/><rect x="909" y="446" width="61" height="10" fill="#e2e8d5"/><rect x="921" y="410" width="1" height="46" fill="#ffffff"/><rect x="933" y="410" width="1" height="46" fill="#ffffff"/><rect x="945" y="410" width="1" height="46" fill="#ffffff"/><rect x="957" y="410" width="1" height="46" fill="#ffffff"/><rect x="909" y="419" width="61" height="1" fill="#ffffff"/><rect x="909" y="428" width="61" height="1" fill="#ffffff"/><rect x="909" y="437" width="61" height="1" fill="#ffffff"/><rect x="909" y="446" width="61" height="1" fill="#ffffff"/><rect x="912" y="413.5" width="7" height="1.6" fill="#ffffff" shape-rendering="auto"/><rect x="924" y="413.5" width="7" height="1.6" fill="#ffffff" shape-rendering="auto"/><rect x="936" y="413.5" width="7" height="1.6" fill="#ffffff" shape-rendering="auto"/><rect x="948" y="413.5" width="7" height="1.6" fill="#ffffff" shape-rendering="auto"/><rect x="960" y="413.5" width="7" height="1.6" fill="#ffffff" shape-rendering="auto"/><rect x="912" y="422.5" width="7" height="1.6" fill="#000" shape-rendering="auto"/><rect x="924" y="422.5" width="7" height="1.6" fill="#000" shape-rendering="auto"/><rect x="936" y="422.5" width="7" height="1.6" fill="#000" shape-rendering="auto"/><rect x="948" y="422.5" width="7" height="1.6" fill="#000" shape-rendering="auto"/><rect x="960" y="422.5" width="7" height="1.6" fill="#000" shape-rendering="auto"/><rect x="912" y="431.5" width="7" height="1.6" fill="#000" shape-rendering="auto"/><rect x="924" y="431.5" width="7" height="1.6" fill="#000" shape-rendering="auto"/><rect x="936" y="431.5" width="7" height="1.6" fill="#000" shape-rendering="auto"/><rect x="948" y="431.5" width="7" height="1.6" fill="#000" shape-rendering="auto"/><rect x="960" y="431.5" width="7" height="1.6" fill="#000" shape-rendering="auto"/><rect x="912" y="440.5" width="7" height="1.6" fill="#000" shape-rendering="auto"/><rect x="924" y="440.5" width="7" height="1.6" fill="#000" shape-rendering="auto"/><rect x="936" y="440.5" width="7" height="1.6" fill="#000" shape-rendering="auto"/><rect x="948" y="440.5" width="7" height="1.6" fill="#000" shape-rendering="auto"/><rect x="960" y="440.5" width="7" height="1.6" fill="#000" shape-rendering="auto"/><rect x="912" y="449.5" width="7" height="1.6" fill="#000" shape-rendering="auto"/><rect x="924" y="449.5" width="7" height="1.6" fill="#000" shape-rendering="auto"/><rect x="936" y="449.5" width="7" height="1.6" fill="#000" shape-rendering="auto"/><rect x="948" y="449.5" width="7" height="1.6" fill="#000" shape-rendering="auto"/><rect x="960" y="449.5" width="7" height="1.6" fill="#000" shape-rendering="auto"/><rect x="909" y="464" width="61" height="46" fill="#ffffff"/><rect x="909" y="464" width="61" height="10" fill="#6e8d3c"/><rect x="909" y="473" width="61" height="10" fill="#d9d9d9"/><rect x="909" y="491" width="61" height="10" fill="#d9d9d9"/><rect x="909" y="473" width="61" height="1" fill="#000"/><rect x="909" y="509" width="61" height="1" fill="#000"/><rect x="912" y="467.5" width="7" height="1.6" fill="#ffffff" shape-rendering="auto"/><rect x="924" y="467.5" width="7" height="1.6" fill="#ffffff" shape-rendering="auto"/><rect x="936" y="467.5" width="7" height="1.6" fill="#ffffff" shape-rendering="auto"/><rect x="948" y="467.5" width="7" height="1.6" fill="#ffffff" shape-rendering="auto"/><rect x="960" y="467.5" width="7" height="1.6" fill="#ffffff" shape-rendering="auto"/><rect x="912" y="476.5" width="7" height="1.6" fill="#000" shape-rendering="auto"/><rect x="924" y="476.5" width="7" height="1.6" fill="#000" shape-rendering="auto"/><rect x="936" y="476.5" width="7" height="1.6" fill="#000" shape-rendering="auto"/><rect x="948" y="476.5" width="7" height="1.6" fill="#000" shape-rendering="auto"/><rect x="960" y="476.5" width="7" height="1.6" fill="#000" shape-rendering="auto"/><rect x="912" y="485.5" width="7" height="1.6" fill="#000" shape-rendering="auto"/><rect x="924" y="485.5" width="7" height="1.6" fill="#000" shape-rendering="auto"/><rect x="936" y="485.5" width="7" height="1.6" fill="#000" shape-rendering="auto"/><rect x="948" y="485.5" width="7" height="1.6" fill="#000" shape-rendering="auto"/><rect x="960" y="485.5" width="7" height="1.6" fill="#000" shape-rendering="auto"/><rect x="912" y="494.5" width="7" height="1.6" fill="#000" shape-rendering="auto"/><rect x="924" y="494.5" width="7" height="1.6" fill="#000" shape-rendering="auto"/><rect x="936" y="494.5" width="7" height="1.6" fill="#000" shape-rendering="auto"/><rect x="948" y="494.5" width="7" height="1.6" fill="#000" shape-rendering="auto"/><rect x="960" y="494.5" width="7" height="1.6" fill="#000" shape-rendering="auto"/><rect x="912" y="503.5" width="7" height="1.6" fill="#000" shape-rendering="auto"/><rect x="924" y="503.5" width="7" height="1.6" fill="#000" shape-rendering="auto"/><rect x="936" y="503.5" width="7" height="1.6" fill="#000" shape-rendering="auto"/><rect x="948" y="503.5" width="7" height="1.6" fill="#000" shape-rendering="auto"/><rect x="960" y="503.5" width="7" height="1.6" fill="#000" shape-rendering="auto"/><rect x="909" y="518" width="61" height="46" fill="#ffffff"/><rect x="909" y="518" width="61" height="10" fill="#e2e8d5"/><rect x="909" y="527" width="61" height="10" fill="#c7d4ad"/><rect x="909" y="536" width="61" height="10" fill="#e2e8d5"/><rect x="909" y="545" width="61" height="10" fill="#c7d4ad"/><rect x="909" y="554" width="61" height="10" fill="#e2e8d5"/><rect x="909" y="527" width="61" height="1" fill="#c7d4ad"/><rect x="909" y="536" width="61" height="1" fill="#c7d4ad"/><rect x="909" y="545" width="61" height="1" fill="#c7d4ad"/><rect x="909" y="554" width="61" height="1" fill="#c7d4ad"/><rect x="921" y="518" width="1" height="46" fill="#c7d4ad"/><rect x="933" y="518" width="1" height="46" fill="#c7d4ad"/><rect x="945" y="518" width="1" height="46" fill="#c7d4ad"/><rect x="957" y="518" width="1" height="46" fill="#c7d4ad"/><rect x="909" y="518" width="61" height="1" fill="#c7d4ad"/><rect x="909" y="563" width="61" height="1" fill="#c7d4ad"/><rect x="909" y="518" width="1" height="46" fill="#c7d4ad"/><rect x="969" y="518" width="1" height="46" fill="#c7d4ad"/><rect x="912" y="521.5" width="7" height="1.6" fill="#000" shape-rendering="auto"/><rect x="924" y="521.5" width="7" height="1.6" fill="#000" shape-rendering="auto"/><rect x="936" y="521.5" width="7" height="1.6" fill="#000" shape-rendering="auto"/><rect x="948" y="521.5" width="7" height="1.6" fill="#000" shape-rendering="auto"/><rect x="960" y="521.5" width="7" height="1.6" fill="#000" shape-rendering="auto"/><rect x="912" y="530.5" width="7" height="1.6" fill="#000" shape-rendering="auto"/><rect x="924" y="530.5" width="7" height="1.6" fill="#000" shape-rendering="auto"/><rect x="936" y="530.5" width="7" height="1.6" fill="#000" shape-rendering="auto"/><rect x="948" y="530.5" width="7" height="1.6" fill="#000" shape-rendering="auto"/><rect x="960" y="530.5" width="7" height="1.6" fill="#000" shape-rendering="auto"/><rect x="912" y="539.5" width="7" height="1.6" fill="#000" shape-rendering="auto"/><rect x="924" y="539.5" width="7" height="1.6" fill="#000" shape-rendering="auto"/><rect x="936" y="539.5" width="7" height="1.6" fill="#000" shape-rendering="auto"/><rect x="948" y="539.5" width="7" height="1.6" fill="#000" shape-rendering="auto"/><rect x="960" y="539.5" width="7" height="1.6" fill="#000" shape-rendering="auto"/><rect x="912" y="548.5" width="7" height="1.6" fill="#000" shape-rendering="auto"/><rect x="924" y="548.5" width="7" height="1.6" fill="#000" shape-rendering="auto"/><rect x="936" y="548.5" width="7" height="1.6" fill="#000" shape-rendering="auto"/><rect x="948" y="548.5" width="7" height="1.6" fill="#000" shape-rendering="auto"/><rect x="960" y="548.5" width="7" height="1.6" fill="#000" shape-rendering="auto"/><rect x="912" y="557.5" width="7" height="1.6" fill="#000" shape-rendering="auto"/><rect x="924" y="557.5" width="7" height="1.6" fill="#000" shape-rendering="auto"/><rect x="936" y="557.5" width="7" height="1.6" fill="#000" shape-rendering="auto"/><rect x="948" y="557.5" width="7" height="1.6" fill="#000" shape-rendering="auto"/><rect x="960" y="557.5" width="7" height="1.6" fill="#000" shape-rendering="auto"/><rect x="909" y="590" width="61" height="46" fill="#ffffff"/><rect x="909" y="590" width="61" height="10" fill="#000"/><rect x="909" y="599" width="61" height="10" fill="#566f2e"/><rect x="909" y="608" width="61" height="10" fill="#6e8d3c"/><rect x="909" y="617" width="61" height="10" fill="#566f2e"/><rect x="909" y="626" width="61" height="10" fill="#6e8d3c"/><rect x="909" y="599" width="61" height="1" fill="#ffffff"/><rect x="912" y="593.5" width="7" height="1.6" fill="#ffffff" shape-rendering="auto"/><rect x="924" y="593.5" width="7" height="1.6" fill="#ffffff" shape-rendering="auto"/><rect x="936" y="593.5" width="7" height="1.6" fill="#ffffff" shape-rendering="auto"/><rect x="948" y="593.5" width="7" height="1.6" fill="#ffffff" shape-rendering="auto"/><rect x="960" y="593.5" width="7" height="1.6" fill="#ffffff" shape-rendering="auto"/><rect x="912" y="602.5" width="7" height="1.6" fill="#e6efd6" shape-rendering="auto"/><rect x="924" y="602.5" width="7" height="1.6" fill="#e6efd6" shape-rendering="auto"/><rect x="936" y="602.5" width="7" height="1.6" fill="#e6efd6" shape-rendering="auto"/><rect x="948" y="602.5" width="7" height="1.6" fill="#e6efd6" shape-rendering="auto"/><rect x="960" y="602.5" width="7" height="1.6" fill="#e6efd6" shape-rendering="auto"/><rect x="912" y="611.5" width="7" height="1.6" fill="#e6efd6" shape-rendering="auto"/><rect x="924" y="611.5" width="7" height="1.6" fill="#e6efd6" shape-rendering="auto"/><rect x="936" y="611.5" width="7" height="1.6" fill="#e6efd6" shape-rendering="auto"/><rect x="948" y="611.5" width="7" height="1.6" fill="#e6efd6" shape-rendering="auto"/><rect x="960" y="611.5" width="7" height="1.6" fill="#e6efd6" shape-rendering="auto"/><rect x="912" y="620.5" width="7" height="1.6" fill="#e6efd6" shape-rendering="auto"/><rect x="924" y="620.5" width="7" height="1.6" fill="#e6efd6" shape-rendering="auto"/><rect x="936" y="620.5" width="7" height="1.6" fill="#e6efd6" shape-rendering="auto"/><rect x="948" y="620.5" width="7" height="1.6" fill="#e6efd6" shape-rendering="auto"/><rect x="960" y="620.5" width="7" height="1.6" fill="#e6efd6" shape-rendering="auto"/><rect x="912" y="629.5" width="7" height="1.6" fill="#e6efd6" shape-rendering="auto"/><rect x="924" y="629.5" width="7" height="1.6" fill="#e6efd6" shape-rendering="auto"/><rect x="936" y="629.5" width="7" height="1.6" fill="#e6efd6" shape-rendering="auto"/><rect x="948" y="629.5" width="7" height="1.6" fill="#e6efd6" shape-rendering="auto"/><rect x="960" y="629.5" width="7" height="1.6" fill="#e6efd6" shape-rendering="auto"/><rect x="978" y="176" width="61" height="46" fill="#ffffff"/><rect x="978" y="185" width="61" height="10" fill="#ede8e0"/><rect x="978" y="203" width="61" height="10" fill="#ede8e0"/><rect x="978" y="176" width="61" height="1" fill="#b7a283"/><rect x="978" y="185" width="61" height="1" fill="#b7a283"/><rect x="978" y="221" width="61" height="1" fill="#b7a283"/><rect x="981" y="179.5" width="7" height="1.6" fill="#8e7b60" shape-rendering="auto"/><rect x="993" y="179.5" width="7" height="1.6" fill="#8e7b60" shape-rendering="auto"/><rect x="1005" y="179.5" width="7" height="1.6" fill="#8e7b60" shape-rendering="auto"/><rect x="1017" y="179.5" width="7" height="1.6" fill="#8e7b60" shape-rendering="auto"/><rect x="1029" y="179.5" width="7" height="1.6" fill="#8e7b60" shape-rendering="auto"/><rect x="981" y="188.5" width="7" height="1.6" fill="#8e7b60" shape-rendering="auto"/><rect x="993" y="188.5" width="7" height="1.6" fill="#8e7b60" shape-rendering="auto"/><rect x="1005" y="188.5" width="7" height="1.6" fill="#8e7b60" shape-rendering="auto"/><rect x="1017" y="188.5" width="7" height="1.6" fill="#8e7b60" shape-rendering="auto"/><rect x="1029" y="188.5" width="7" height="1.6" fill="#8e7b60" shape-rendering="auto"/><rect x="981" y="197.5" width="7" height="1.6" fill="#8e7b60" shape-rendering="auto"/><rect x="993" y="197.5" width="7" height="1.6" fill="#8e7b60" shape-rendering="auto"/><rect x="1005" y="197.5" width="7" height="1.6" fill="#8e7b60" shape-rendering="auto"/><rect x="1017" y="197.5" width="7" height="1.6" fill="#8e7b60" shape-rendering="auto"/><rect x="1029" y="197.5" width="7" height="1.6" fill="#8e7b60" shape-rendering="auto"/><rect x="981" y="206.5" width="7" height="1.6" fill="#8e7b60" shape-rendering="auto"/><rect x="993" y="206.5" width="7" height="1.6" fill="#8e7b60" shape-rendering="auto"/><rect x="1005" y="206.5" width="7" height="1.6" fill="#8e7b60" shape-rendering="auto"/><rect x="1017" y="206.5" width="7" height="1.6" fill="#8e7b60" shape-rendering="auto"/><rect x="1029" y="206.5" width="7" height="1.6" fill="#8e7b60" shape-rendering="auto"/><rect x="981" y="215.5" width="7" height="1.6" fill="#8e7b60" shape-rendering="auto"/><rect x="993" y="215.5" width="7" height="1.6" fill="#8e7b60" shape-rendering="auto"/><rect x="1005" y="215.5" width="7" height="1.6" fill="#8e7b60" shape-rendering="auto"/><rect x="1017" y="215.5" width="7" height="1.6" fill="#8e7b60" shape-rendering="auto"/><rect x="1029" y="215.5" width="7" height="1.6" fill="#8e7b60" shape-rendering="auto"/><rect x="978" y="230" width="61" height="46" fill="#ffffff"/><rect x="978" y="230" width="61" height="10" fill="#b7a283"/><rect x="978" y="248" width="61" height="1" fill="#bfae93"/><rect x="978" y="257" width="61" height="1" fill="#bfae93"/><rect x="978" y="266" width="61" height="1" fill="#bfae93"/><rect x="978" y="230" width="61" height="1" fill="#b7a283"/><rect x="978" y="275" width="61" height="1" fill="#b7a283"/><rect x="978" y="230" width="1" height="46" fill="#b7a283"/><rect x="1038" y="230" width="1" height="46" fill="#b7a283"/><rect x="981" y="233.5" width="7" height="1.6" fill="#ffffff" shape-rendering="auto"/><rect x="993" y="233.5" width="7" height="1.6" fill="#ffffff" shape-rendering="auto"/><rect x="1005" y="233.5" width="7" height="1.6" fill="#ffffff" shape-rendering="auto"/><rect x="1017" y="233.5" width="7" height="1.6" fill="#ffffff" shape-rendering="auto"/><rect x="1029" y="233.5" width="7" height="1.6" fill="#ffffff" shape-rendering="auto"/><rect x="981" y="242.5" width="7" height="1.6" fill="#000" shape-rendering="auto"/><rect x="993" y="242.5" width="7" height="1.6" fill="#000" shape-rendering="auto"/><rect x="1005" y="242.5" width="7" height="1.6" fill="#000" shape-rendering="auto"/><rect x="1017" y="242.5" width="7" height="1.6" fill="#000" shape-rendering="auto"/><rect x="1029" y="242.5" width="7" height="1.6" fill="#000" shape-rendering="auto"/><rect x="981" y="251.5" width="7" height="1.6" fill="#000" shape-rendering="auto"/><rect x="993" y="251.5" width="7" height="1.6" fill="#000" shape-rendering="auto"/><rect x="1005" y="251.5" width="7" height="1.6" fill="#000" shape-rendering="auto"/><rect x="1017" y="251.5" width="7" height="1.6" fill="#000" shape-rendering="auto"/><rect x="1029" y="251.5" width="7" height="1.6" fill="#000" shape-rendering="auto"/><rect x="981" y="260.5" width="7" height="1.6" fill="#000" shape-rendering="auto"/><rect x="993" y="260.5" width="7" height="1.6" fill="#000" shape-rendering="auto"/><rect x="1005" y="260.5" width="7" height="1.6" fill="#000" shape-rendering="auto"/><rect x="1017" y="260.5" width="7" height="1.6" fill="#000" shape-rendering="auto"/><rect x="1029" y="260.5" width="7" height="1.6" fill="#000" shape-rendering="auto"/><rect x="981" y="269.5" width="7" height="1.6" fill="#000" shape-rendering="auto"/><rect x="993" y="269.5" width="7" height="1.6" fill="#000" shape-rendering="auto"/><rect x="1005" y="269.5" width="7" height="1.6" fill="#000" shape-rendering="auto"/><rect x="1017" y="269.5" width="7" height="1.6" fill="#000" shape-rendering="auto"/><rect x="1029" y="269.5" width="7" height="1.6" fill="#000" shape-rendering="auto"/><rect x="978" y="284" width="61" height="46" fill="#ffffff"/><rect x="978" y="293" width="61" height="10" fill="#ede8e0"/><rect x="978" y="311" width="61" height="10" fill="#ede8e0"/><rect x="978" y="293" width="61" height="1" fill="#bfae93"/><rect x="978" y="302" width="61" height="1" fill="#bfae93"/><rect x="978" y="311" width="61" height="1" fill="#bfae93"/><rect x="978" y="320" width="61" height="1" fill="#bfae93"/><rect x="990" y="284" width="1" height="46" fill="#bfae93"/><rect x="1002" y="284" width="1" height="46" fill="#bfae93"/><rect x="1014" y="284" width="1" height="46" fill="#bfae93"/><rect x="1026" y="284" width="1" height="46" fill="#bfae93"/><rect x="978" y="284" width="61" height="1" fill="#b7a283"/><rect x="978" y="329" width="61" height="1" fill="#b7a283"/><rect x="978" y="284" width="1" height="46" fill="#b7a283"/><rect x="1038" y="284" width="1" height="46" fill="#b7a283"/><rect x="981" y="287.5" width="7" height="1.6" fill="#000" shape-rendering="auto"/><rect x="993" y="287.5" width="7" height="1.6" fill="#000" shape-rendering="auto"/><rect x="1005" y="287.5" width="7" height="1.6" fill="#000" shape-rendering="auto"/><rect x="1017" y="287.5" width="7" height="1.6" fill="#000" shape-rendering="auto"/><rect x="1029" y="287.5" width="7" height="1.6" fill="#000" shape-rendering="auto"/><rect x="981" y="296.5" width="7" height="1.6" fill="#000" shape-rendering="auto"/><rect x="993" y="296.5" width="7" height="1.6" fill="#000" shape-rendering="auto"/><rect x="1005" y="296.5" width="7" height="1.6" fill="#000" shape-rendering="auto"/><rect x="1017" y="296.5" width="7" height="1.6" fill="#000" shape-rendering="auto"/><rect x="1029" y="296.5" width="7" height="1.6" fill="#000" shape-rendering="auto"/><rect x="981" y="305.5" width="7" height="1.6" fill="#000" shape-rendering="auto"/><rect x="993" y="305.5" width="7" height="1.6" fill="#000" shape-rendering="auto"/><rect x="1005" y="305.5" width="7" height="1.6" fill="#000" shape-rendering="auto"/><rect x="1017" y="305.5" width="7" height="1.6" fill="#000" shape-rendering="auto"/><rect x="1029" y="305.5" width="7" height="1.6" fill="#000" shape-rendering="auto"/><rect x="981" y="314.5" width="7" height="1.6" fill="#000" shape-rendering="auto"/><rect x="993" y="314.5" width="7" height="1.6" fill="#000" shape-rendering="auto"/><rect x="1005" y="314.5" width="7" height="1.6" fill="#000" shape-rendering="auto"/><rect x="1017" y="314.5" width="7" height="1.6" fill="#000" shape-rendering="auto"/><rect x="1029" y="314.5" width="7" height="1.6" fill="#000" shape-rendering="auto"/><rect x="981" y="323.5" width="7" height="1.6" fill="#000" shape-rendering="auto"/><rect x="993" y="323.5" width="7" height="1.6" fill="#000" shape-rendering="auto"/><rect x="1005" y="323.5" width="7" height="1.6" fill="#000" shape-rendering="auto"/><rect x="1017" y="323.5" width="7" height="1.6" fill="#000" shape-rendering="auto"/><rect x="1029" y="323.5" width="7" height="1.6" fill="#000" shape-rendering="auto"/><rect x="978" y="356" width="61" height="46" fill="#ffffff"/><rect x="978" y="356" width="61" height="10" fill="#b7a283"/><rect x="978" y="365" width="61" height="10" fill="#ede8e0"/><rect x="978" y="383" width="61" height="10" fill="#ede8e0"/><rect x="978" y="374" width="61" height="1" fill="#dcd2c2"/><rect x="978" y="383" width="61" height="1" fill="#dcd2c2"/><rect x="978" y="392" width="61" height="1" fill="#dcd2c2"/><rect x="978" y="356" width="61" height="1" fill="#b7a283"/><rect x="978" y="401" width="61" height="1" fill="#b7a283"/><rect x="978" y="356" width="1" height="46" fill="#b7a283"/><rect x="1038" y="356" width="1" height="46" fill="#b7a283"/><rect x="981" y="359.5" width="7" height="1.6" fill="#ffffff" shape-rendering="auto"/><rect x="993" y="359.5" width="7" height="1.6" fill="#ffffff" shape-rendering="auto"/><rect x="1005" y="359.5" width="7" height="1.6" fill="#ffffff" shape-rendering="auto"/><rect x="1017" y="359.5" width="7" height="1.6" fill="#ffffff" shape-rendering="auto"/><rect x="1029" y="359.5" width="7" height="1.6" fill="#ffffff" shape-rendering="auto"/><rect x="981" y="368.5" width="7" height="1.6" fill="#000" shape-rendering="auto"/><rect x="993" y="368.5" width="7" height="1.6" fill="#000" shape-rendering="auto"/><rect x="1005" y="368.5" width="7" height="1.6" fill="#000" shape-rendering="auto"/><rect x="1017" y="368.5" width="7" height="1.6" fill="#000" shape-rendering="auto"/><rect x="1029" y="368.5" width="7" height="1.6" fill="#000" shape-rendering="auto"/><rect x="981" y="377.5" width="7" height="1.6" fill="#000" shape-rendering="auto"/><rect x="993" y="377.5" width="7" height="1.6" fill="#000" shape-rendering="auto"/><rect x="1005" y="377.5" width="7" height="1.6" fill="#000" shape-rendering="auto"/><rect x="1017" y="377.5" width="7" height="1.6" fill="#000" shape-rendering="auto"/><rect x="1029" y="377.5" width="7" height="1.6" fill="#000" shape-rendering="auto"/><rect x="981" y="386.5" width="7" height="1.6" fill="#000" shape-rendering="auto"/><rect x="993" y="386.5" width="7" height="1.6" fill="#000" shape-rendering="auto"/><rect x="1005" y="386.5" width="7" height="1.6" fill="#000" shape-rendering="auto"/><rect x="1017" y="386.5" width="7" height="1.6" fill="#000" shape-rendering="auto"/><rect x="1029" y="386.5" width="7" height="1.6" fill="#000" shape-rendering="auto"/><rect x="981" y="395.5" width="7" height="1.6" fill="#000" shape-rendering="auto"/><rect x="993" y="395.5" width="7" height="1.6" fill="#000" shape-rendering="auto"/><rect x="1005" y="395.5" width="7" height="1.6" fill="#000" shape-rendering="auto"/><rect x="1017" y="395.5" width="7" height="1.6" fill="#000" shape-rendering="auto"/><rect x="1029" y="395.5" width="7" height="1.6" fill="#000" shape-rendering="auto"/><rect x="978" y="410" width="61" height="46" fill="#ffffff"/><rect x="978" y="410" width="61" height="10" fill="#b7a283"/><rect x="978" y="419" width="61" height="10" fill="#dcd2c2"/><rect x="978" y="428" width="61" height="10" fill="#ede8e0"/><rect x="978" y="437" width="61" height="10" fill="#dcd2c2"/><rect x="978" y="446" width="61" height="10" fill="#ede8e0"/><rect x="990" y="410" width="1" height="46" fill="#ffffff"/><rect x="1002" y="410" width="1" height="46" fill="#ffffff"/><rect x="1014" y="410" width="1" height="46" fill="#ffffff"/><rect x="1026" y="410" width="1" height="46" fill="#ffffff"/><rect x="978" y="419" width="61" height="1" fill="#ffffff"/><rect x="978" y="428" width="61" height="1" fill="#ffffff"/><rect x="978" y="437" width="61" height="1" fill="#ffffff"/><rect x="978" y="446" width="61" height="1" fill="#ffffff"/><rect x="981" y="413.5" width="7" height="1.6" fill="#ffffff" shape-rendering="auto"/><rect x="993" y="413.5" width="7" height="1.6" fill="#ffffff" shape-rendering="auto"/><rect x="1005" y="413.5" width="7" height="1.6" fill="#ffffff" shape-rendering="auto"/><rect x="1017" y="413.5" width="7" height="1.6" fill="#ffffff" shape-rendering="auto"/><rect x="1029" y="413.5" width="7" height="1.6" fill="#ffffff" shape-rendering="auto"/><rect x="981" y="422.5" width="7" height="1.6" fill="#000" shape-rendering="auto"/><rect x="993" y="422.5" width="7" height="1.6" fill="#000" shape-rendering="auto"/><rect x="1005" y="422.5" width="7" height="1.6" fill="#000" shape-rendering="auto"/><rect x="1017" y="422.5" width="7" height="1.6" fill="#000" shape-rendering="auto"/><rect x="1029" y="422.5" width="7" height="1.6" fill="#000" shape-rendering="auto"/><rect x="981" y="431.5" width="7" height="1.6" fill="#000" shape-rendering="auto"/><rect x="993" y="431.5" width="7" height="1.6" fill="#000" shape-rendering="auto"/><rect x="1005" y="431.5" width="7" height="1.6" fill="#000" shape-rendering="auto"/><rect x="1017" y="431.5" width="7" height="1.6" fill="#000" shape-rendering="auto"/><rect x="1029" y="431.5" width="7" height="1.6" fill="#000" shape-rendering="auto"/><rect x="981" y="440.5" width="7" height="1.6" fill="#000" shape-rendering="auto"/><rect x="993" y="440.5" width="7" height="1.6" fill="#000" shape-rendering="auto"/><rect x="1005" y="440.5" width="7" height="1.6" fill="#000" shape-rendering="auto"/><rect x="1017" y="440.5" width="7" height="1.6" fill="#000" shape-rendering="auto"/><rect x="1029" y="440.5" width="7" height="1.6" fill="#000" shape-rendering="auto"/><rect x="981" y="449.5" width="7" height="1.6" fill="#000" shape-rendering="auto"/><rect x="993" y="449.5" width="7" height="1.6" fill="#000" shape-rendering="auto"/><rect x="1005" y="449.5" width="7" height="1.6" fill="#000" shape-rendering="auto"/><rect x="1017" y="449.5" width="7" height="1.6" fill="#000" shape-rendering="auto"/><rect x="1029" y="449.5" width="7" height="1.6" fill="#000" shape-rendering="auto"/><rect x="978" y="464" width="61" height="46" fill="#ffffff"/><rect x="978" y="464" width="61" height="10" fill="#b7a283"/><rect x="978" y="473" width="61" height="10" fill="#d9d9d9"/><rect x="978" y="491" width="61" height="10" fill="#d9d9d9"/><rect x="978" y="473" width="61" height="1" fill="#000"/><rect x="978" y="509" width="61" height="1" fill="#000"/><rect x="981" y="467.5" width="7" height="1.6" fill="#ffffff" shape-rendering="auto"/><rect x="993" y="467.5" width="7" height="1.6" fill="#ffffff" shape-rendering="auto"/><rect x="1005" y="467.5" width="7" height="1.6" fill="#ffffff" shape-rendering="auto"/><rect x="1017" y="467.5" width="7" height="1.6" fill="#ffffff" shape-rendering="auto"/><rect x="1029" y="467.5" width="7" height="1.6" fill="#ffffff" shape-rendering="auto"/><rect x="981" y="476.5" width="7" height="1.6" fill="#000" shape-rendering="auto"/><rect x="993" y="476.5" width="7" height="1.6" fill="#000" shape-rendering="auto"/><rect x="1005" y="476.5" width="7" height="1.6" fill="#000" shape-rendering="auto"/><rect x="1017" y="476.5" width="7" height="1.6" fill="#000" shape-rendering="auto"/><rect x="1029" y="476.5" width="7" height="1.6" fill="#000" shape-rendering="auto"/><rect x="981" y="485.5" width="7" height="1.6" fill="#000" shape-rendering="auto"/><rect x="993" y="485.5" width="7" height="1.6" fill="#000" shape-rendering="auto"/><rect x="1005" y="485.5" width="7" height="1.6" fill="#000" shape-rendering="auto"/><rect x="1017" y="485.5" width="7" height="1.6" fill="#000" shape-rendering="auto"/><rect x="1029" y="485.5" width="7" height="1.6" fill="#000" shape-rendering="auto"/><rect x="981" y="494.5" width="7" height="1.6" fill="#000" shape-rendering="auto"/><rect x="993" y="494.5" width="7" height="1.6" fill="#000" shape-rendering="auto"/><rect x="1005" y="494.5" width="7" height="1.6" fill="#000" shape-rendering="auto"/><rect x="1017" y="494.5" width="7" height="1.6" fill="#000" shape-rendering="auto"/><rect x="1029" y="494.5" width="7" height="1.6" fill="#000" shape-rendering="auto"/><rect x="981" y="503.5" width="7" height="1.6" fill="#000" shape-rendering="auto"/><rect x="993" y="503.5" width="7" height="1.6" fill="#000" shape-rendering="auto"/><rect x="1005" y="503.5" width="7" height="1.6" fill="#000" shape-rendering="auto"/><rect x="1017" y="503.5" width="7" height="1.6" fill="#000" shape-rendering="auto"/><rect x="1029" y="503.5" width="7" height="1.6" fill="#000" shape-rendering="auto"/><rect x="978" y="518" width="61" height="46" fill="#ffffff"/><rect x="978" y="518" width="61" height="10" fill="#ede8e0"/><rect x="978" y="527" width="61" height="10" fill="#dcd2c2"/><rect x="978" y="536" width="61" height="10" fill="#ede8e0"/><rect x="978" y="545" width="61" height="10" fill="#dcd2c2"/><rect x="978" y="554" width="61" height="10" fill="#ede8e0"/><rect x="978" y="527" width="61" height="1" fill="#dcd2c2"/><rect x="978" y="536" width="61" height="1" fill="#dcd2c2"/><rect x="978" y="545" width="61" height="1" fill="#dcd2c2"/><rect x="978" y="554" width="61" height="1" fill="#dcd2c2"/><rect x="990" y="518" width="1" height="46" fill="#dcd2c2"/><rect x="1002" y="518" width="1" height="46" fill="#dcd2c2"/><rect x="1014" y="518" width="1" height="46" fill="#dcd2c2"/><rect x="1026" y="518" width="1" height="46" fill="#dcd2c2"/><rect x="978" y="518" width="61" height="1" fill="#dcd2c2"/><rect x="978" y="563" width="61" height="1" fill="#dcd2c2"/><rect x="978" y="518" width="1" height="46" fill="#dcd2c2"/><rect x="1038" y="518" width="1" height="46" fill="#dcd2c2"/><rect x="981" y="521.5" width="7" height="1.6" fill="#000" shape-rendering="auto"/><rect x="993" y="521.5" width="7" height="1.6" fill="#000" shape-rendering="auto"/><rect x="1005" y="521.5" width="7" height="1.6" fill="#000" shape-rendering="auto"/><rect x="1017" y="521.5" width="7" height="1.6" fill="#000" shape-rendering="auto"/><rect x="1029" y="521.5" width="7" height="1.6" fill="#000" shape-rendering="auto"/><rect x="981" y="530.5" width="7" height="1.6" fill="#000" shape-rendering="auto"/><rect x="993" y="530.5" width="7" height="1.6" fill="#000" shape-rendering="auto"/><rect x="1005" y="530.5" width="7" height="1.6" fill="#000" shape-rendering="auto"/><rect x="1017" y="530.5" width="7" height="1.6" fill="#000" shape-rendering="auto"/><rect x="1029" y="530.5" width="7" height="1.6" fill="#000" shape-rendering="auto"/><rect x="981" y="539.5" width="7" height="1.6" fill="#000" shape-rendering="auto"/><rect x="993" y="539.5" width="7" height="1.6" fill="#000" shape-rendering="auto"/><rect x="1005" y="539.5" width="7" height="1.6" fill="#000" shape-rendering="auto"/><rect x="1017" y="539.5" width="7" height="1.6" fill="#000" shape-rendering="auto"/><rect x="1029" y="539.5" width="7" height="1.6" fill="#000" shape-rendering="auto"/><rect x="981" y="548.5" width="7" height="1.6" fill="#000" shape-rendering="auto"/><rect x="993" y="548.5" width="7" height="1.6" fill="#000" shape-rendering="auto"/><rect x="1005" y="548.5" width="7" height="1.6" fill="#000" shape-rendering="auto"/><rect x="1017" y="548.5" width="7" height="1.6" fill="#000" shape-rendering="auto"/><rect x="1029" y="548.5" width="7" height="1.6" fill="#000" shape-rendering="auto"/><rect x="981" y="557.5" width="7" height="1.6" fill="#000" shape-rendering="auto"/><rect x="993" y="557.5" width="7" height="1.6" fill="#000" shape-rendering="auto"/><rect x="1005" y="557.5" width="7" height="1.6" fill="#000" shape-rendering="auto"/><rect x="1017" y="557.5" width="7" height="1.6" fill="#000" shape-rendering="auto"/><rect x="1029" y="557.5" width="7" height="1.6" fill="#000" shape-rendering="auto"/><rect x="978" y="590" width="61" height="46" fill="#ffffff"/><rect x="978" y="590" width="61" height="10" fill="#000"/><rect x="978" y="599" width="61" height="10" fill="#9a8463"/><rect x="978" y="608" width="61" height="10" fill="#b7a283"/><rect x="978" y="617" width="61" height="10" fill="#9a8463"/><rect x="978" y="626" width="61" height="10" fill="#b7a283"/><rect x="978" y="599" width="61" height="1" fill="#ffffff"/><rect x="981" y="593.5" width="7" height="1.6" fill="#ffffff" shape-rendering="auto"/><rect x="993" y="593.5" width="7" height="1.6" fill="#ffffff" shape-rendering="auto"/><rect x="1005" y="593.5" width="7" height="1.6" fill="#ffffff" shape-rendering="auto"/><rect x="1017" y="593.5" width="7" height="1.6" fill="#ffffff" shape-rendering="auto"/><rect x="1029" y="593.5" width="7" height="1.6" fill="#ffffff" shape-rendering="auto"/><rect x="981" y="602.5" width="7" height="1.6" fill="#f3ebdc" shape-rendering="auto"/><rect x="993" y="602.5" width="7" height="1.6" fill="#f3ebdc" shape-rendering="auto"/><rect x="1005" y="602.5" width="7" height="1.6" fill="#f3ebdc" shape-rendering="auto"/><rect x="1017" y="602.5" width="7" height="1.6" fill="#f3ebdc" shape-rendering="auto"/><rect x="1029" y="602.5" width="7" height="1.6" fill="#f3ebdc" shape-rendering="auto"/><rect x="981" y="611.5" width="7" height="1.6" fill="#f3ebdc" shape-rendering="auto"/><rect x="993" y="611.5" width="7" height="1.6" fill="#f3ebdc" shape-rendering="auto"/><rect x="1005" y="611.5" width="7" height="1.6" fill="#f3ebdc" shape-rendering="auto"/><rect x="1017" y="611.5" width="7" height="1.6" fill="#f3ebdc" shape-rendering="auto"/><rect x="1029" y="611.5" width="7" height="1.6" fill="#f3ebdc" shape-rendering="auto"/><rect x="981" y="620.5" width="7" height="1.6" fill="#f3ebdc" shape-rendering="auto"/><rect x="993" y="620.5" width="7" height="1.6" fill="#f3ebdc" shape-rendering="auto"/><rect x="1005" y="620.5" width="7" height="1.6" fill="#f3ebdc" shape-rendering="auto"/><rect x="1017" y="620.5" width="7" height="1.6" fill="#f3ebdc" shape-rendering="auto"/><rect x="1029" y="620.5" width="7" height="1.6" fill="#f3ebdc" shape-rendering="auto"/><rect x="981" y="629.5" width="7" height="1.6" fill="#f3ebdc" shape-rendering="auto"/><rect x="993" y="629.5" width="7" height="1.6" fill="#f3ebdc" shape-rendering="auto"/><rect x="1005" y="629.5" width="7" height="1.6" fill="#f3ebdc" shape-rendering="auto"/><rect x="1017" y="629.5" width="7" height="1.6" fill="#f3ebdc" shape-rendering="auto"/><rect x="1029" y="629.5" width="7" height="1.6" fill="#f3ebdc" shape-rendering="auto"/><rect x="633" y="644" width="61" height="46" fill="#ffffff"/><rect x="633" y="644" width="61" height="10" fill="#000000"/><rect x="633" y="653" width="61" height="10" fill="#a6a6a6"/><rect x="633" y="662" width="61" height="10" fill="#d9d9d9"/><rect x="633" y="671" width="61" height="10" fill="#a6a6a6"/><rect x="633" y="680" width="61" height="10" fill="#d9d9d9"/><rect x="636" y="647.5" width="7" height="1.6" fill="#ffffff" shape-rendering="auto"/><rect x="648" y="647.5" width="7" height="1.6" fill="#ffffff" shape-rendering="auto"/><rect x="660" y="647.5" width="7" height="1.6" fill="#ffffff" shape-rendering="auto"/><rect x="672" y="647.5" width="7" height="1.6" fill="#ffffff" shape-rendering="auto"/><rect x="684" y="647.5" width="7" height="1.6" fill="#ffffff" shape-rendering="auto"/><rect x="636" y="656.5" width="7" height="1.6" fill="#000" shape-rendering="auto"/><rect x="648" y="656.5" width="7" height="1.6" fill="#000" shape-rendering="auto"/><rect x="660" y="656.5" width="7" height="1.6" fill="#000" shape-rendering="auto"/><rect x="672" y="656.5" width="7" height="1.6" fill="#000" shape-rendering="auto"/><rect x="684" y="656.5" width="7" height="1.6" fill="#000" shape-rendering="auto"/><rect x="636" y="665.5" width="7" height="1.6" fill="#000" shape-rendering="auto"/><rect x="648" y="665.5" width="7" height="1.6" fill="#000" shape-rendering="auto"/><rect x="660" y="665.5" width="7" height="1.6" fill="#000" shape-rendering="auto"/><rect x="672" y="665.5" width="7" height="1.6" fill="#000" shape-rendering="auto"/><rect x="684" y="665.5" width="7" height="1.6" fill="#000" shape-rendering="auto"/><rect x="636" y="674.5" width="7" height="1.6" fill="#000" shape-rendering="auto"/><rect x="648" y="674.5" width="7" height="1.6" fill="#000" shape-rendering="auto"/><rect x="660" y="674.5" width="7" height="1.6" fill="#000" shape-rendering="auto"/><rect x="672" y="674.5" width="7" height="1.6" fill="#000" shape-rendering="auto"/><rect x="684" y="674.5" width="7" height="1.6" fill="#000" shape-rendering="auto"/><rect x="636" y="683.5" width="7" height="1.6" fill="#000" shape-rendering="auto"/><rect x="648" y="683.5" width="7" height="1.6" fill="#000" shape-rendering="auto"/><rect x="660" y="683.5" width="7" height="1.6" fill="#000" shape-rendering="auto"/><rect x="672" y="683.5" width="7" height="1.6" fill="#000" shape-rendering="auto"/><rect x="684" y="683.5" width="7" height="1.6" fill="#000" shape-rendering="auto"/><rect x="702" y="644" width="61" height="46" fill="#ffffff"/><rect x="702" y="644" width="61" height="10" fill="#ee6a1f"/><rect x="702" y="653" width="61" height="10" fill="#cfcfcf"/><rect x="702" y="662" width="61" height="10" fill="#e0e0e0"/><rect x="702" y="671" width="61" height="10" fill="#cfcfcf"/><rect x="702" y="680" width="61" height="10" fill="#e0e0e0"/><rect x="705" y="647.5" width="7" height="1.6" fill="#ffffff" shape-rendering="auto"/><rect x="717" y="647.5" width="7" height="1.6" fill="#ffffff" shape-rendering="auto"/><rect x="729" y="647.5" width="7" height="1.6" fill="#ffffff" shape-rendering="auto"/><rect x="741" y="647.5" width="7" height="1.6" fill="#ffffff" shape-rendering="auto"/><rect x="753" y="647.5" width="7" height="1.6" fill="#ffffff" shape-rendering="auto"/><rect x="705" y="656.5" width="7" height="1.6" fill="#000" shape-rendering="auto"/><rect x="717" y="656.5" width="7" height="1.6" fill="#000" shape-rendering="auto"/><rect x="729" y="656.5" width="7" height="1.6" fill="#000" shape-rendering="auto"/><rect x="741" y="656.5" width="7" height="1.6" fill="#000" shape-rendering="auto"/><rect x="753" y="656.5" width="7" height="1.6" fill="#000" shape-rendering="auto"/><rect x="705" y="665.5" width="7" height="1.6" fill="#000" shape-rendering="auto"/><rect x="717" y="665.5" width="7" height="1.6" fill="#000" shape-rendering="auto"/><rect x="729" y="665.5" width="7" height="1.6" fill="#000" shape-rendering="auto"/><rect x="741" y="665.5" width="7" height="1.6" fill="#000" shape-rendering="auto"/><rect x="753" y="665.5" width="7" height="1.6" fill="#000" shape-rendering="auto"/><rect x="705" y="674.5" width="7" height="1.6" fill="#000" shape-rendering="auto"/><rect x="717" y="674.5" width="7" height="1.6" fill="#000" shape-rendering="auto"/><rect x="729" y="674.5" width="7" height="1.6" fill="#000" shape-rendering="auto"/><rect x="741" y="674.5" width="7" height="1.6" fill="#000" shape-rendering="auto"/><rect x="753" y="674.5" width="7" height="1.6" fill="#000" shape-rendering="auto"/><rect x="705" y="683.5" width="7" height="1.6" fill="#000" shape-rendering="auto"/><rect x="717" y="683.5" width="7" height="1.6" fill="#000" shape-rendering="auto"/><rect x="729" y="683.5" width="7" height="1.6" fill="#000" shape-rendering="auto"/><rect x="741" y="683.5" width="7" height="1.6" fill="#000" shape-rendering="auto"/><rect x="753" y="683.5" width="7" height="1.6" fill="#000" shape-rendering="auto"/><rect x="771" y="644" width="61" height="46" fill="#ffffff"/><rect x="771" y="644" width="61" height="10" fill="#6e8d3c"/><rect x="771" y="653" width="61" height="10" fill="#a9dbf4"/><rect x="771" y="662" width="61" height="10" fill="#d3edf9"/><rect x="771" y="671" width="61" height="10" fill="#a9dbf4"/><rect x="771" y="680" width="61" height="10" fill="#d3edf9"/><rect x="774" y="647.5" width="7" height="1.6" fill="#ffffff" shape-rendering="auto"/><rect x="786" y="647.5" width="7" height="1.6" fill="#ffffff" shape-rendering="auto"/><rect x="798" y="647.5" width="7" height="1.6" fill="#ffffff" shape-rendering="auto"/><rect x="810" y="647.5" width="7" height="1.6" fill="#ffffff" shape-rendering="auto"/><rect x="822" y="647.5" width="7" height="1.6" fill="#ffffff" shape-rendering="auto"/><rect x="774" y="656.5" width="7" height="1.6" fill="#000" shape-rendering="auto"/><rect x="786" y="656.5" width="7" height="1.6" fill="#000" shape-rendering="auto"/><rect x="798" y="656.5" width="7" height="1.6" fill="#000" shape-rendering="auto"/><rect x="810" y="656.5" width="7" height="1.6" fill="#000" shape-rendering="auto"/><rect x="822" y="656.5" width="7" height="1.6" fill="#000" shape-rendering="auto"/><rect x="774" y="665.5" width="7" height="1.6" fill="#000" shape-rendering="auto"/><rect x="786" y="665.5" width="7" height="1.6" fill="#000" shape-rendering="auto"/><rect x="798" y="665.5" width="7" height="1.6" fill="#000" shape-rendering="auto"/><rect x="810" y="665.5" width="7" height="1.6" fill="#000" shape-rendering="auto"/><rect x="822" y="665.5" width="7" height="1.6" fill="#000" shape-rendering="auto"/><rect x="774" y="674.5" width="7" height="1.6" fill="#000" shape-rendering="auto"/><rect x="786" y="674.5" width="7" height="1.6" fill="#000" shape-rendering="auto"/><rect x="798" y="674.5" width="7" height="1.6" fill="#000" shape-rendering="auto"/><rect x="810" y="674.5" width="7" height="1.6" fill="#000" shape-rendering="auto"/><rect x="822" y="674.5" width="7" height="1.6" fill="#000" shape-rendering="auto"/><rect x="774" y="683.5" width="7" height="1.6" fill="#000" shape-rendering="auto"/><rect x="786" y="683.5" width="7" height="1.6" fill="#000" shape-rendering="auto"/><rect x="798" y="683.5" width="7" height="1.6" fill="#000" shape-rendering="auto"/><rect x="810" y="683.5" width="7" height="1.6" fill="#000" shape-rendering="auto"/><rect x="822" y="683.5" width="7" height="1.6" fill="#000" shape-rendering="auto"/><rect x="840" y="644" width="61" height="46" fill="#ffffff"/><rect x="840" y="644" width="61" height="10" fill="#4e6a8c"/><rect x="840" y="653" width="61" height="10" fill="#ddd6cc"/><rect x="840" y="662" width="61" height="10" fill="#ece8e1"/><rect x="840" y="671" width="61" height="10" fill="#ddd6cc"/><rect x="840" y="680" width="61" height="10" fill="#ece8e1"/><rect x="843" y="647.5" width="7" height="1.6" fill="#ffffff" shape-rendering="auto"/><rect x="855" y="647.5" width="7" height="1.6" fill="#ffffff" shape-rendering="auto"/><rect x="867" y="647.5" width="7" height="1.6" fill="#ffffff" shape-rendering="auto"/><rect x="879" y="647.5" width="7" height="1.6" fill="#ffffff" shape-rendering="auto"/><rect x="891" y="647.5" width="7" height="1.6" fill="#ffffff" shape-rendering="auto"/><rect x="843" y="656.5" width="7" height="1.6" fill="#000" shape-rendering="auto"/><rect x="855" y="656.5" width="7" height="1.6" fill="#000" shape-rendering="auto"/><rect x="867" y="656.5" width="7" height="1.6" fill="#000" shape-rendering="auto"/><rect x="879" y="656.5" width="7" height="1.6" fill="#000" shape-rendering="auto"/><rect x="891" y="656.5" width="7" height="1.6" fill="#000" shape-rendering="auto"/><rect x="843" y="665.5" width="7" height="1.6" fill="#000" shape-rendering="auto"/><rect x="855" y="665.5" width="7" height="1.6" fill="#000" shape-rendering="auto"/><rect x="867" y="665.5" width="7" height="1.6" fill="#000" shape-rendering="auto"/><rect x="879" y="665.5" width="7" height="1.6" fill="#000" shape-rendering="auto"/><rect x="891" y="665.5" width="7" height="1.6" fill="#000" shape-rendering="auto"/><rect x="843" y="674.5" width="7" height="1.6" fill="#000" shape-rendering="auto"/><rect x="855" y="674.5" width="7" height="1.6" fill="#000" shape-rendering="auto"/><rect x="867" y="674.5" width="7" height="1.6" fill="#000" shape-rendering="auto"/><rect x="879" y="674.5" width="7" height="1.6" fill="#000" shape-rendering="auto"/><rect x="891" y="674.5" width="7" height="1.6" fill="#000" shape-rendering="auto"/><rect x="843" y="683.5" width="7" height="1.6" fill="#000" shape-rendering="auto"/><rect x="855" y="683.5" width="7" height="1.6" fill="#000" shape-rendering="auto"/><rect x="867" y="683.5" width="7" height="1.6" fill="#000" shape-rendering="auto"/><rect x="879" y="683.5" width="7" height="1.6" fill="#000" shape-rendering="auto"/><rect x="891" y="683.5" width="7" height="1.6" fill="#000" shape-rendering="auto"/></svg>
<div class="a" style="left:628px;top:694px;width:376px;height:1px;background:#e3e6ea"></div>
<div class="a" style="left:653px;top:695px;width:1px;height:45px;background:#e6e9ee"></div>
<div class="t" style="left:662px;top:701px;font-size:11.2px;color:#24344d"><u>N</u>ew Table Style...</div>
<div class="t" style="left:662px;top:723px;font-size:11.2px;color:#24344d">New <u>P</u>ivotTable Style...</div>
<svg class="a" style="left:628px;top:692px" width="24" height="48" shape-rendering="crispEdges"><rect x="6" y="10" width="15" height="12" fill="#2f56a6"/><rect x="12" y="10" width="9" height="2" fill="#e8eef8"/><rect x="11" y="13" width="4" height="2" fill="#9fb8e8"/><rect x="16" y="13" width="4" height="2" fill="#9fb8e8"/><rect x="11" y="16" width="4" height="2" fill="#9fb8e8"/><rect x="16" y="16" width="4" height="2" fill="#9fb8e8"/><rect x="7" y="19" width="3" height="2" fill="#9fb8e8"/><rect x="11" y="19" width="4" height="2" fill="#9fb8e8"/><rect x="16" y="19" width="4" height="2" fill="#9fb8e8"/><rect x="5" y="7" width="7" height="7" fill="#f3e05a" opacity="0.85"/><rect x="6.5" y="30.5" width="13" height="13" fill="#fff" stroke="#2f4f8f"/><rect x="11" y="32" width="7" height="2" fill="#6f8fca"/><rect x="8" y="35" width="2" height="7" fill="#2f56a6"/><rect x="5" y="29" width="7" height="6" fill="#f3e05a" opacity="0.85"/></svg>
<svg class="a" style="left:639px;top:722px" width="12" height="14"><path d="M2 11l7-6" stroke="#2f56a6" stroke-width="1.6"/></svg>
<div class="a" style="left:628px;top:740px;width:376px;height:8px;background:#dfe8f3;border-top:1px solid #ccd8e6"></div>
<div class="a" style="left:870px;top:743px;width:16px;height:2px;background:repeating-linear-gradient(90deg,#8a9bb0 0 2px,transparent 2px 4px)"></div>
<div class="a" style="left:950px;top:398px;width:60px;height:22px;border:1px solid rgba(110,110,110,0.45);background:rgba(240,240,240,0.45)"></div>
<div class="t" style="left:957px;top:404px;font-size:12px;color:rgba(120,120,120,0.5)">Table Style</div>
<div class="a" style="left:-2px;top:22px;width:60px;height:22px;background:#f6f9fd;border:1px solid #b9c8da"></div>
<div class="a" style="left:57px;top:22px;width:44px;height:22px;background:#f6f9fd;border:1px solid #b9c8da"></div>
<div class="a" style="left:202px;top:22px;width:22px;height:22px;border:1px solid #e0b44a;border-radius:2px;background:linear-gradient(#fde68f,#f9d15b)"></div>
<div class="a" style="left:414px;top:22px;width:134px;height:22px;background:#f6f9fd;border:1px solid #b9c8da"></div>
<div class="a" style="left:627px;top:14px;width:55px;height:67px;border:1px solid #dcb24e;border-radius:3px;background:linear-gradient(#fde38a,#fbd568 40%,#f9cf5a)"></div>
<div class="a" style="left:682px;top:17px;width:321px;height:60px;border:1px solid #c3cfdd;background:#eef3f9"></div>
<div class="a" style="left:684px;top:19px;width:105px;height:28px;border:2px solid #eacd6e;border-radius:2px;background:#fff"></div>
<div class="a" style="left:792px;top:22px;width:101px;height:21px;background:#ffc7ce"></div>
<div class="a" style="left:898px;top:22px;width:101px;height:21px;background:#c6efce"></div>
<div class="a" style="left:686px;top:50px;width:100px;height:21px;background:#ffeb9c"></div>
<div class="a" style="left:792px;top:50px;width:101px;height:22px;border:1px solid #7f7f7f;background:#f2f2f2"></div>
<div class="a" style="left:898px;top:50px;width:101px;height:22px;border:3px double #3f3f3f;background:#a5a5a5"></div>
<svg class="a" style="left:0;top:0" width="1004" height="100"><path d="M48 31h5l-2.5 3z" fill="#4c5d75"/><path d="M90 31h5l-2.5 3z" fill="#4c5d75"/><path d="M116 30h5l-2.5-3z" fill="#2c3344"/><path d="M135 27h6l-3 3z" fill="#2c3344"/><rect x="-1" y="67" width="9" height="1.5" fill="#111" /><path d="M17 60h5l-2.5 3z" fill="#4c5d75"/><rect x="30" y="49" width="1" height="23" fill="#c6d2e0" /><rect x="31" y="49" width="1" height="23" fill="#f8fbff" /><rect x="41" y="56" width="1" height="1" fill="#555" /><rect x="47" y="56" width="1" height="1" fill="#555" /><rect x="53" y="56" width="1" height="1" fill="#555" /><rect x="41" y="58" width="1" height="1" fill="#555" /><rect x="47" y="58" width="1" height="1" fill="#555" /><rect x="53" y="58" width="1" height="1" fill="#555" /><rect x="41" y="60" width="1" height="1" fill="#555" /><rect x="47" y="60" width="1" height="1" fill="#555" /><rect x="53" y="60" width="1" height="1" fill="#555" /><rect x="41" y="62" width="1" height="1" fill="#555" /><rect x="47" y="62" width="1" height="1" fill="#555" /><rect x="53" y="62" width="1" height="1" fill="#555" /><rect x="41" y="64" width="1" height="1" fill="#555" /><rect x="47" y="64" width="1" height="1" fill="#555" /><rect x="53" y="64" width="1" height="1" fill="#555" /><rect x="41" y="66" width="1" height="1" fill="#555" /><rect x="47" y="66" width="1" height="1" fill="#555" /><rect x="53" y="66" width="1" height="1" fill="#555" /><rect x="41" y="68" width="1" height="1" fill="#555" /><rect x="47" y="68" width="1" height="1" fill="#555" /><rect x="53" y="68" width="1" height="1" fill="#555" /><rect x="41" y="56" width="1" height="1" fill="#555" /><rect x="41" y="62" width="1" height="1" fill="#555" /><rect x="43" y="56" width="1" height="1" fill="#555" /><rect x="43" y="62" width="1" height="1" fill="#555" /><rect x="45" y="56" width="1" height="1" fill="#555" /><rect x="45" y="62" width="1" height="1" fill="#555" /><rect x="47" y="56" width="1" height="1" fill="#555" /><rect x="47" y="62" width="1" height="1" fill="#555" /><rect x="49" y="56" width="1" height="1" fill="#555" /><rect x="49" y="62" width="1" height="1" fill="#555" /><rect x="51" y="56" width="1" height="1" fill="#555" /><rect x="51" y="62" width="1" height="1" fill="#555" /><rect x="53" y="56" width="1" height="1" fill="#555" /><rect x="53" y="62" width="1" height="1" fill="#555" /><rect x="41" y="68" width="13" height="1.5" fill="#222" /><path d="M61 60h5l-2.5 3z" fill="#4c5d75"/><rect x="74" y="49" width="1" height="23" fill="#c6d2e0" /><rect x="75" y="49" width="1" height="23" fill="#f8fbff" /><path d="M86 59l5-5 6 6-5 5z" fill="#fff" stroke="#2c3344" stroke-width="1"/><path d="M95 58q4 1 3 6" stroke="#2b62b8" stroke-width="2" fill="none"/><rect x="81" y="66" width="19" height="3.5" fill="#f2ee1a" /><path d="M104 60h5l-2.5 3z" fill="#4c5d75"/><rect x="116" y="66" width="16" height="3.5" fill="#e8101a" /><path d="M137 60h5l-2.5 3z" fill="#4c5d75"/><path d="M137 86h5v5" stroke="#8797ad" fill="none"/><path d="M139 88l3 3" stroke="#8797ad"/><rect x="160" y="26" width="14" height="1.3" fill="#1a1a1a" /><rect x="160" y="29" width="14" height="1.3" fill="#1a1a1a" /><rect x="160" y="32" width="14" height="1.3" fill="#1a1a1a" /><rect x="183" y="30.5" width="14" height="1.3" fill="#1a1a1a" /><rect x="183" y="33.5" width="14" height="1.3" fill="#1a1a1a" /><rect x="183" y="36.5" width="14" height="1.3" fill="#1a1a1a" /><rect x="206" y="33.5" width="13" height="1.3" fill="#1a1a1a" /><rect x="206" y="36.5" width="13" height="1.3" fill="#1a1a1a" /><rect x="206" y="39.5" width="13" height="1.3" fill="#1a1a1a" /><rect x="160" y="56" width="14" height="1.3" fill="#1a1a1a" /><rect x="160" y="59" width="10" height="1.3" fill="#1a1a1a" /><rect x="160" y="62" width="14" height="1.3" fill="#1a1a1a" /><rect x="160" y="65" width="10" height="1.3" fill="#1a1a1a" /><rect x="160" y="67.5" width="14" height="1.3" fill="#1a1a1a" /><rect x="183.0" y="56" width="14" height="1.3" fill="#1a1a1a" /><rect x="185.0" y="59" width="10" height="1.3" fill="#1a1a1a" /><rect x="183.0" y="62" width="14" height="1.3" fill="#1a1a1a" /><rect x="185.0" y="65" width="10" height="1.3" fill="#1a1a1a" /><rect x="183.0" y="67.5" width="14" height="1.3" fill="#1a1a1a" /><rect x="206" y="56" width="14" height="1.3" fill="#1a1a1a" /><rect x="210" y="59" width="10" height="1.3" fill="#1a1a1a" /><rect x="206" y="62" width="14" height="1.3" fill="#1a1a1a" /><rect x="210" y="65" width="10" height="1.3" fill="#1a1a1a" /><rect x="206" y="67.5" width="14" height="1.3" fill="#1a1a1a" /><rect x="228" y="24" width="1" height="47" fill="#c6d2e0" /><rect x="229" y="24" width="1" height="47" fill="#f8fbff" /><path d="M244 40l10-10" stroke="#222" stroke-width="1.2"/><path d="M251 29h4v4" stroke="#222" fill="none"/><path d="M256 31h5l-2.5 3z" fill="#4c5d75"/><rect x="245" y="53" width="9" height="1.6" fill="#444" /><rect x="245" y="56" width="9" height="1.6" fill="#1a1a1a" /><rect x="245" y="59" width="9" height="1.6" fill="#1a1a1a" /><rect x="245" y="62" width="9" height="1.6" fill="#1a1a1a" /><rect x="245" y="65" width="9" height="1.6" fill="#444" /><rect x="245" y="68" width="9" height="1.6" fill="#444" /><rect x="243" y="50" width="1" height="20" fill="#777" /><path d="M239 59.5l4-3v6z" fill="#5a7ec0"/><rect x="267" y="53" width="9" height="1.6" fill="#444" /><rect x="267" y="56" width="9" height="1.6" fill="#1a1a1a" /><rect x="267" y="59" width="9" height="1.6" fill="#1a1a1a" /><rect x="267" y="62" width="9" height="1.6" fill="#1a1a1a" /><rect x="267" y="65" width="9" height="1.6" fill="#444" /><rect x="267" y="68" width="9" height="1.6" fill="#444" /><rect x="265" y="50" width="1" height="20" fill="#777" /><path d="M265 59.5l-4-3v6z" fill="#5a7ec0"/><rect x="290.5" y="25.5" width="12" height="3" fill="#fff" stroke="#444"/><rect x="290.5" y="31.5" width="12" height="8" fill="#fff" stroke="#444"/><rect x="292" y="34" width="8" height="1" fill="#555" /><rect x="292" y="36" width="8" height="1" fill="#555" /><path d="M303 27h2v8" stroke="#333" fill="none"/><path d="M303 34l2 2 2-2" stroke="#333" fill="none"/><rect x="290.5" y="54.5" width="15" height="14" fill="#fff" stroke="#444"/><rect x="291" y="58" width="14" height="1" fill="#777" /><rect x="291" y="65" width="14" height="1" fill="#777" /><path d="M292 61.5h2M302 61.5h2" stroke="#333"/><path d="M396 60h5l-2.5 3z" fill="#4c5d75"/><path d="M396 86h5v5" stroke="#8797ad" fill="none"/><path d="M398 88l3 3" stroke="#8797ad"/><path d="M537 31h5l-2.5 3z" fill="#4c5d75"/><path d="M438 60h5l-2.5 3z" fill="#4c5d75"/><rect x="498" y="49" width="1" height="23" fill="#c6d2e0" /><rect x="499" y="49" width="1" height="23" fill="#f8fbff" /><path d="M507 58.5h7M507 58.5l3-2.5M507 58.5l3 2.5" stroke="#3d62b0" stroke-width="1.3" fill="none"/><path d="M529 66h7M536 66l-3-2.5M536 66l-3 2.5" stroke="#3d62b0" stroke-width="1.3" fill="none"/><path d="M539 86h5v5" stroke="#8797ad" fill="none"/><path d="M541 88l3 3" stroke="#8797ad"/><rect x="576" y="19" width="7" height="6" fill="#fff" stroke="#8595b5" stroke-width="0.8"/><rect x="583" y="19" width="7" height="6" fill="#e0463a" stroke="#8595b5" stroke-width="0.8"/><rect x="590" y="19" width="7" height="6" fill="#fff" stroke="#8595b5" stroke-width="0.8"/><rect x="597" y="19" width="7" height="6" fill="#fff" stroke="#8595b5" stroke-width="0.8"/><rect x="576" y="25" width="7" height="6" fill="#fff" stroke="#8595b5" stroke-width="0.8"/><rect x="583" y="25" width="7" height="6" fill="#3f78d8" stroke="#8595b5" stroke-width="0.8"/><rect x="590" y="25" width="7" height="6" fill="#3f78d8" stroke="#8595b5" stroke-width="0.8"/><rect x="597" y="25" width="7" height="6" fill="#fff" stroke="#8595b5" stroke-width="0.8"/><rect x="576" y="31" width="7" height="6" fill="#fff" stroke="#8595b5" stroke-width="0.8"/><rect x="583" y="31" width="7" height="6" fill="#e0463a" stroke="#8595b5" stroke-width="0.8"/><rect x="590" y="31" width="7" height="6" fill="#fff" stroke="#8595b5" stroke-width="0.8"/><rect x="597" y="31" width="7" height="6" fill="#fff" stroke="#8595b5" stroke-width="0.8"/><rect x="576" y="37" width="7" height="6" fill="#fff" stroke="#8595b5" stroke-width="0.8"/><rect x="583" y="37" width="7" height="6" fill="#4a7ed8" stroke="#8595b5" stroke-width="0.8"/><rect x="590" y="37" width="7" height="6" fill="#fff" stroke="#8595b5" stroke-width="0.8"/><rect x="597" y="37" width="7" height="6" fill="#fff" stroke="#8595b5" stroke-width="0.8"/><rect x="591.5" y="35.5" width="14" height="11" fill="#fff" stroke="#6d7d95"/><path d="M597 37l-4 2.5 4 2.5M599 38h4M599 40h4M593 43h4M593 45h4M599 42l4 2 -4 2" stroke="#111" stroke-width="1.1" fill="none"/><path d="M618 70h5l-2.5 3z" fill="#4c5d75"/><rect x="638.5" y="19.5" width="7" height="6" fill="#fff" stroke="#6f86b8" stroke-width="0.8"/><rect x="645.5" y="19.5" width="7" height="6" fill="#fff" stroke="#6f86b8" stroke-width="0.8"/><rect x="652.5" y="19.5" width="7" height="6" fill="#fff" stroke="#6f86b8" stroke-width="0.8"/><rect x="659.5" y="19.5" width="7" height="6" fill="#fff" stroke="#6f86b8" stroke-width="0.8"/><rect x="638.5" y="25.5" width="7" height="6" fill="#fff" stroke="#6f86b8" stroke-width="0.8"/><rect x="645.5" y="25.5" width="7" height="6" fill="#8fa8ea" stroke="#6f86b8" stroke-width="0.8"/><rect x="652.5" y="25.5" width="7" height="6" fill="#8fa8ea" stroke="#6f86b8" stroke-width="0.8"/><rect x="659.5" y="25.5" width="7" height="6" fill="#8fa8ea" stroke="#6f86b8" stroke-width="0.8"/><rect x="638.5" y="31.5" width="7" height="6" fill="#fff" stroke="#6f86b8" stroke-width="0.8"/><rect x="645.5" y="31.5" width="7" height="6" fill="#8fa8ea" stroke="#6f86b8" stroke-width="0.8"/><rect x="652.5" y="31.5" width="7" height="6" fill="#8fa8ea" stroke="#6f86b8" stroke-width="0.8"/><rect x="659.5" y="31.5" width="7" height="6" fill="#8fa8ea" stroke="#6f86b8" stroke-width="0.8"/><rect x="638.5" y="37.5" width="7" height="6" fill="#fff" stroke="#6f86b8" stroke-width="0.8"/><rect x="645.5" y="37.5" width="7" height="6" fill="#8fa8ea" stroke="#6f86b8" stroke-width="0.8"/><rect x="652.5" y="37.5" width="7" height="6" fill="#8fa8ea" stroke="#6f86b8" stroke-width="0.8"/><rect x="659.5" y="37.5" width="7" height="6" fill="#8fa8ea" stroke="#6f86b8" stroke-width="0.8"/><path d="M668 27l-12 13" stroke="#6b7380" stroke-width="4"/><path d="M668 27l-12 13" stroke="#e6e6e6" stroke-width="2.4"/><path d="M657 38l-7 8 3 0 6-6z" fill="#4a6fb0"/><path d="M672 70h5l-2.5 3z" fill="#6a5a30"/></svg>
<div class="t" style="left:-7px;top:28px;font-size:11.5px;color:#1e1e1e">Gothic Bc</div>
<div class="t" style="left:60px;top:28px;font-size:11.5px;color:#1e1e1e">11</div>
<div class="t" style="left:105px;top:27px;font-family:'Liberation Serif';font-weight:bold;font-size:15px;color:#2c3344">A</div>
<div class="t" style="left:128px;top:31px;font-family:'Liberation Serif';font-weight:bold;font-size:11px;color:#2c3344">A</div>
<div class="t" style="left:-1px;top:56px;font-family:'Liberation Serif';font-weight:bold;font-size:14px;color:#111">U</div>
<div class="t" style="left:118px;top:53px;font-family:'Liberation Serif';font-weight:bold;font-size:15px;color:#24468c">A</div>
<div class="t" style="left:238px;top:27px;font-size:10px;font-weight:bold;color:#1a1a1a;transform:rotate(-45deg);transform-origin:50% 50%">ab</div>
<div class="t" style="left:309px;top:28px;font-size:11px;color:#2d3b52">Wrap Text</div>
<div class="t" style="left:295px;top:56px;font-family:'Liberation Serif';font-weight:bold;font-size:10px;color:#111">a</div>
<div class="t" style="left:309px;top:57px;font-size:11.5px;color:#2d3b52">Merge &amp; Center</div>
<div class="t" style="left:417px;top:28px;font-size:11px;color:#1e1e1e">General</div>
<div class="t" style="left:421px;top:55px;font-family:'Liberation Serif';font-weight:bold;font-size:14px;color:#1a1a1a">$</div>
<div class="t" style="left:453px;top:56px;font-size:13px;font-weight:bold;color:#1a1a1a">%</div>
<div class="t" style="left:481px;top:53px;font-family:'Liberation Serif';font-size:16px;font-weight:bold;color:#1a1a1a">,</div>
<div class="t" style="left:515px;top:54px;font-size:9px;font-weight:bold;color:#1a1a1a">.0</div>
<div class="t" style="left:510px;top:62px;font-size:9px;font-weight:bold;color:#1a1a1a">.00</div>
<div class="t" style="left:531px;top:54px;font-size:9px;font-weight:bold;color:#1a1a1a">.00</div>
<div class="t" style="left:536px;top:62px;font-size:9px;font-weight:bold;color:#1a1a1a">.0</div>
<div class="t" style="left:561px;top:53px;font-size:12px;color:#2d3b52;letter-spacing:0px">Conditional</div>
<div class="t" style="left:559px;top:66px;font-size:12px;color:#2d3b52">Formatting</div>
<div class="t" style="left:631px;top:53px;width:45px;text-align:center;font-size:11.6px;color:#2d3b52">Format</div>
<div class="t" style="left:629px;top:66px;font-size:11.4px;color:#2d3b52">as Table</div>
<div class="t" style="left:690px;top:25px;font-size:14.4px;color:#111">Normal</div>
<div class="t" style="left:796px;top:25px;font-size:14.4px;color:#9c0006">Bad</div>
<div class="t" style="left:902px;top:25px;font-size:14.4px;color:#006100">Good</div>
<div class="t" style="left:690px;top:53px;font-size:14.4px;color:#9c6500">Neutral</div>
<div class="t" style="left:797px;top:53px;font-size:14.2px;font-weight:bold;color:#fa7d00">Calculation</div>
<div class="t" style="left:903px;top:53px;font-size:14.6px;font-weight:bold;color:#fff">Check Cell</div>
</body></html>
